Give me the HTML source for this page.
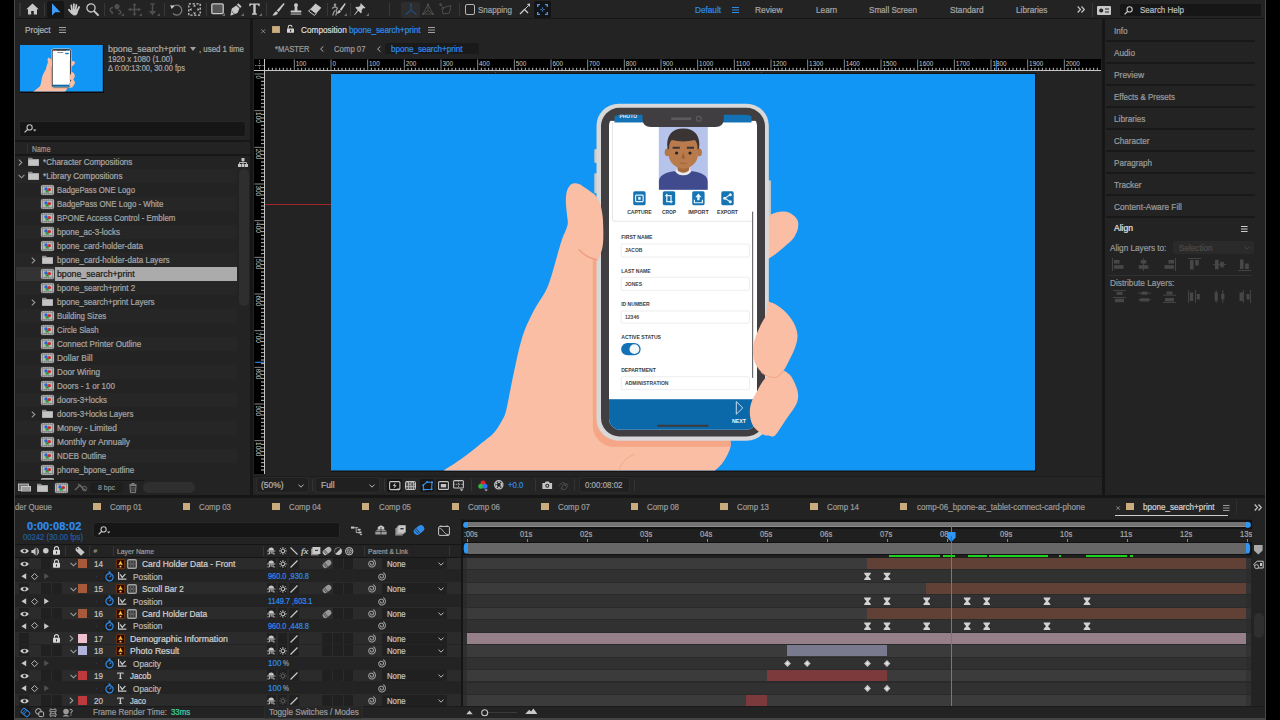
<!DOCTYPE html>
<html><head><meta charset="utf-8"><title>AE</title>
<style>
html,body{margin:0;padding:0;background:#000;width:1280px;height:720px;overflow:hidden}
body{position:relative;font-family:"Liberation Sans",sans-serif;}
.t{position:absolute;white-space:nowrap;font-family:"Liberation Sans",sans-serif;-webkit-text-stroke:0.22px;}
svg{overflow:visible}
</style></head><body>
<!-- art -->

<!-- frame -->
<div style="position:absolute;left:14px;top:0px;width:1252px;height:720px;background:#232323;"></div>
<div style="position:absolute;left:14px;top:0px;width:1.3px;height:720px;background:#4a4a4a;"></div>
<div style="position:absolute;left:1264.8px;top:0px;width:1.3px;height:720px;background:#4a4a4a;"></div>
<div style="position:absolute;left:15px;top:18px;width:1250px;height:1px;background:#161616;"></div>
<div style="position:absolute;left:250px;top:19px;width:3px;height:477px;background:#161616;"></div>
<div style="position:absolute;left:1102px;top:19px;width:3px;height:477px;background:#161616;"></div>
<div style="position:absolute;left:15px;top:495px;width:1250px;height:3px;background:#161616;"></div>
<div style="position:absolute;left:14px;top:718px;width:1252px;height:2px;background:#454545;"></div>
<!-- toolbar -->
<div style="position:absolute;left:19px;top:3px;width:2px;height:13px;background:#343434;"></div>
<svg style="position:absolute;left:26px;top:3px;" width="13" height="12" viewBox="0 0 13 12"><path d="M6.5 0.5L0.3 6.2H2V11.5H5.2V8H7.8V11.5H11V6.2H12.7Z" fill="#c8c8c8"/></svg>
<div style="position:absolute;left:44px;top:3px;width:1px;height:13px;background:#383838;"></div>
<div style="position:absolute;left:47px;top:1px;width:17px;height:17px;background:#161616;border-radius:2px;"></div>
<svg style="position:absolute;left:51px;top:3px;" width="10" height="13" viewBox="0 0 10 13"><path d="M1 0.3V12.6L4.2 9.2H9.5Z" fill="#3d9bf5"/></svg>
<svg style="position:absolute;left:68px;top:2.5px;" width="13" height="13" viewBox="0 0 13 13"><g stroke="#c8c8c8" stroke-linecap="round" fill="none"><path d="M3.9 7L3.3 2.4M5.8 6.6L5.9 1.2M7.6 6.8L8.4 2M9.2 8L11.1 4" stroke-width="1.75"/><path d="M3.9 10L1 6.8" stroke-width="1.9"/></g><path d="M3 6.6L9.8 6.4L10 8.6C9.8 10.6 8.8 12.6 6.6 12.6C4.6 12.6 3.6 11 3 9.6Z" fill="#c8c8c8"/></svg>
<svg style="position:absolute;left:86px;top:2.5px;" width="13" height="13" viewBox="0 0 13 13"><circle cx="5" cy="4.9" r="4.1" fill="none" stroke="#c8c8c8" stroke-width="1.3"/><path d="M8.1 8.1L12 12" stroke="#c8c8c8" stroke-width="1.9" stroke-linecap="round"/></svg>
<div style="position:absolute;left:104px;top:3px;width:1px;height:13px;background:#383838;"></div>
<svg style="position:absolute;left:109px;top:3px;" width="14" height="13" viewBox="0 0 14 13"><circle cx="8" cy="3.6" r="2.6" fill="#4f4f4f"/><path d="M4 4.5C0.5 5 0 8 3.5 9M9 7C12.5 7.5 13 10.5 9.5 11" fill="none" stroke="#4f4f4f" stroke-width="1.4"/><path d="M2 8L5 10.3L2.4 11.2Z" fill="#4f4f4f"/></svg>
<svg style="position:absolute;left:121px;top:13px;" width="3" height="3" viewBox="0 0 3 3"><path d="M3 0V3H0Z" fill="#4f4f4f"/></svg>
<svg style="position:absolute;left:128px;top:3px;" width="13" height="13" viewBox="0 0 13 13"><path d="M6.5 0L8.6 2.6H7.2V5.8H10.4V4.4L13 6.5L10.4 8.6V7.2H7.2V10.4H8.6L6.5 13L4.4 10.4H5.8V7.2H2.6V8.6L0 6.5L2.6 4.4V5.8H5.8V2.6H4.4Z" fill="#4f4f4f"/></svg>
<svg style="position:absolute;left:139px;top:13px;" width="3" height="3" viewBox="0 0 3 3"><path d="M3 0V3H0Z" fill="#4f4f4f"/></svg>
<svg style="position:absolute;left:148px;top:3px;" width="9" height="13" viewBox="0 0 9 13"><path d="M2.2 0.3H6.8V1.4H5.2V8H8.2L4.5 12.2L0.8 8H3.8V1.4H2.2Z" fill="#4f4f4f"/></svg>
<svg style="position:absolute;left:157px;top:13px;" width="3" height="3" viewBox="0 0 3 3"><path d="M3 0V3H0Z" fill="#4f4f4f"/></svg>
<div style="position:absolute;left:164px;top:3px;width:1px;height:13px;background:#383838;"></div>
<svg style="position:absolute;left:170px;top:3px;" width="13" height="13" viewBox="0 0 13 13"><path d="M2.2 5A5 5 0 1 1 3 10.4" fill="none" stroke="#c8c8c8" stroke-width="1.2" opacity="0.55"/><path d="M0.2 2.2L4.6 2.6L1.6 6Z" fill="#c8c8c8"/></svg>
<svg style="position:absolute;left:188px;top:3px;" width="13" height="13" viewBox="0 0 13 13"><rect x="0.8" y="0.8" width="11.4" height="11.4" fill="none" stroke="#c8c8c8" stroke-width="1.3" stroke-dasharray="2.2 1.6"/><path d="M6.5 1.5L8 3.5H5ZM6.5 11.5L8 9.5H5ZM1.5 6.5L3.5 5V8ZM11.5 6.5L9.5 5V8Z" fill="#c8c8c8"/></svg>
<div style="position:absolute;left:206px;top:3px;width:1px;height:13px;background:#383838;"></div>
<svg style="position:absolute;left:211px;top:3px;" width="13" height="11" viewBox="0 0 13 11"><rect x="0.8" y="0.8" width="11.4" height="9.8" rx="1" fill="#555" stroke="#c8c8c8" stroke-width="1.3"/></svg>
<svg style="position:absolute;left:222px;top:13px;" width="3" height="3" viewBox="0 0 3 3"><path d="M3 0V3H0Z" fill="#6e6e6e"/></svg>
<svg style="position:absolute;left:230px;top:3px;" width="12" height="13" viewBox="0 0 12 13"><path d="M8.3 0.3L11.6 3.4L10.2 4.9L6.9 1.8ZM6.3 2.5L9.5 5.6L7.5 10L1.2 12.4L0.6 11.8L3.4 8.6A1.3 1.3 0 1 0 4.4 9.5L1.9 12.2L0.4 12.6L1.8 5.4Z" fill="#c8c8c8"/></svg>
<svg style="position:absolute;left:241px;top:13px;" width="3" height="3" viewBox="0 0 3 3"><path d="M3 0V3H0Z" fill="#6e6e6e"/></svg>
<svg style="position:absolute;left:249px;top:3px;" width="11" height="12" viewBox="0 0 11 12"><path d="M0.3 0.4H10.7V3.3H9.6C9.5 2.3 9.2 1.8 8 1.8H6.7V9.6C6.7 10.5 7 10.7 8 10.8V11.7H3V10.8C4 10.7 4.3 10.5 4.3 9.6V1.8H3C1.8 1.8 1.5 2.3 1.4 3.3H0.3Z" fill="#c8c8c8"/></svg>
<svg style="position:absolute;left:259px;top:13px;" width="3" height="3" viewBox="0 0 3 3"><path d="M3 0V3H0Z" fill="#6e6e6e"/></svg>
<div style="position:absolute;left:266px;top:3px;width:1px;height:13px;background:#383838;"></div>
<svg style="position:absolute;left:272px;top:3px;" width="13" height="13" viewBox="0 0 13 13"><path d="M11.4 0.2C12.3 0 12.8 0.7 12.3 1.5L6.6 9L4.7 7.6Z" fill="#c8c8c8"/><path d="M4.1 8.2L6 9.7C5.6 11.6 3 12.9 0.3 12.2C1.8 11.6 1.8 9.2 4.1 8.2Z" fill="#c8c8c8"/></svg>
<svg style="position:absolute;left:290px;top:3px;" width="12" height="13" viewBox="0 0 12 13"><path d="M6 0.3A2 2 0 0 1 7.3 3.8L7.5 7.5H11.3V9.6H0.7V7.5H4.5L4.7 3.8A2 2 0 0 1 6 0.3Z" fill="#c8c8c8"/><rect x="0.7" y="10.3" width="10.6" height="1.6" fill="#8d8d8d"/></svg>
<svg style="position:absolute;left:308px;top:3px;" width="14" height="13" viewBox="0 0 14 13"><path d="M7.5 0.5L13.3 4.8L6.5 12.4L0.6 8.1Z" fill="#c8c8c8"/><path d="M2.5 6.2L8.2 10.4L6.5 12.4L0.6 8.1Z" fill="#232323" stroke="#c8c8c8" stroke-width="0.9"/></svg>
<div style="position:absolute;left:327px;top:3px;width:1px;height:13px;background:#383838;"></div>
<svg style="position:absolute;left:331px;top:3px;" width="15" height="13" viewBox="0 0 15 13"><circle cx="4" cy="1.8" r="1.3" fill="#9a9a9a"/><path d="M1 5.5L4 3.6L6.4 5.3L5 7.6L6 9.6L4.6 12.6M3.6 7.6L1.6 12.4" stroke="#9a9a9a" stroke-width="1.3" fill="none"/><path d="M13.6 0.3C14.5 0.2 14.8 0.9 14.4 1.5L10.3 7.7L8.7 6.5Z" fill="#c8c8c8"/><path d="M8.2 7L9.8 8.3C9.5 9.9 7.4 10.9 5.6 10.4C6.8 9.8 6.7 7.9 8.2 7Z" fill="#c8c8c8"/></svg>
<svg style="position:absolute;left:344px;top:13px;" width="3" height="3" viewBox="0 0 3 3"><path d="M3 0V3H0Z" fill="#6e6e6e"/></svg>
<div style="position:absolute;left:350px;top:3px;width:1px;height:13px;background:#383838;"></div>
<svg style="position:absolute;left:354px;top:3px;" width="12" height="13" viewBox="0 0 12 13"><path d="M6.8 0.3L11.5 4.8L10.3 5.5L9.3 5.1L7.6 7.2L7.8 9.4L6.8 10.2L4.4 7.8L0.6 12.2L0.2 11.8L3.6 7L1.4 4.8L2.2 3.8L4.4 4L6.6 2.3L6.2 1.2Z" fill="#c8c8c8"/></svg>
<svg style="position:absolute;left:366px;top:13px;" width="3" height="3" viewBox="0 0 3 3"><path d="M3 0V3H0Z" fill="#6e6e6e"/></svg>
<div style="position:absolute;left:389px;top:3px;width:1px;height:13px;background:#383838;"></div>
<div style="position:absolute;left:401px;top:2px;width:19px;height:16px;background:#2d2d2d;border-radius:2px;"></div>
<svg style="position:absolute;left:404px;top:3px;" width="14" height="13" viewBox="0 0 14 13"><path d="M7 1V7.2L1.5 11.5M7 7.2L12.5 11.5" fill="none" stroke="#224d7c" stroke-width="1.2"/><circle cx="7" cy="1.4" r="1" fill="#224d7c"/></svg>
<svg style="position:absolute;left:421px;top:3px;" width="14" height="13" viewBox="0 0 14 13"><path d="M7 1.5L2 11H12ZM7 1.5V7.5L2 11M7 7.5L12 11" fill="none" stroke="#4f4f4f" stroke-width="0.9"/><circle cx="7" cy="1.5" r="1.1" fill="#4f4f4f"/><circle cx="2" cy="11" r="1.1" fill="#4f4f4f"/><circle cx="12" cy="11" r="1.1" fill="#4f4f4f"/></svg>
<svg style="position:absolute;left:439px;top:3px;" width="14" height="13" viewBox="0 0 14 13"><path d="M3 5L12 2.5L10.5 10L4 11Z" fill="none" stroke="#4f4f4f" stroke-width="0.9"/><path d="M1 1L5 6" stroke="#4f4f4f" stroke-width="1"/><circle cx="1.5" cy="1.5" r="1.2" fill="#4f4f4f"/></svg>
<div style="position:absolute;left:459px;top:3px;width:1px;height:13px;background:#383838;"></div>
<div style="position:absolute;left:465px;top:4px;width:8px;height:9px;background:transparent;border:1.4px solid #b5b5b5;border-radius:2px;"></div>
<div class="t" style="left:478px;top:5.0px;font-size:8.6px;line-height:10.6px;color:#a2a2a2;transform:scaleX(0.9355);transform-origin:0 0;">Snapping</div>
<svg style="position:absolute;left:519px;top:3px;" width="12" height="13" viewBox="0 0 12 13"><path d="M1 11L5.5 6.5L9 10" fill="none" stroke="#c8c8c8" stroke-width="1.4"/><path d="M5.5 6.5L9.5 2.5" stroke="#c8c8c8" stroke-width="1"/><path d="M7.8 1L11 0.6L10.8 4Z" fill="#c8c8c8"/></svg>
<div style="position:absolute;left:534px;top:1px;width:17px;height:17px;background:#141414;border-radius:2px;"></div>
<svg style="position:absolute;left:537px;top:4px;" width="11" height="11" viewBox="0 0 11 11"><path d="M0.7 3V0.7H3M8 0.7H10.3V3M10.3 8V10.3H8M3 10.3H0.7V8" fill="none" stroke="#3d9bf5" stroke-width="1.3"/><path d="M3.5 5.5H7.5M5.5 3.5V7.5" stroke="#3d9bf5" stroke-width="1.1" stroke-dasharray="1.2 1.6"/></svg>
<div class="t" style="left:695px;top:5.0px;font-size:8.6px;line-height:10.6px;color:#2f8ceb;transform:scaleX(0.9542);transform-origin:0 0;">Default</div>
<svg style="position:absolute;left:732px;top:7px;" width="7" height="6" viewBox="0 0 7 6"><path d="M0 0.5H7M0 3H7M0 5.5H7" stroke="#2f8ceb" stroke-width="1"/></svg>
<div class="t" style="left:755px;top:5.0px;font-size:8.6px;line-height:10.6px;color:#a6a6a6;transform:scaleX(0.9752);transform-origin:0 0;">Review</div>
<div class="t" style="left:816px;top:5.0px;font-size:8.6px;line-height:10.6px;color:#a6a6a6;transform:scaleX(0.9547);transform-origin:0 0;">Learn</div>
<div class="t" style="left:869px;top:5.0px;font-size:8.6px;line-height:10.6px;color:#a6a6a6;transform:scaleX(0.9385);transform-origin:0 0;">Small Screen</div>
<div class="t" style="left:950px;top:5.0px;font-size:8.6px;line-height:10.6px;color:#a6a6a6;transform:scaleX(0.9597);transform-origin:0 0;">Standard</div>
<div class="t" style="left:1016px;top:5.0px;font-size:8.6px;line-height:10.6px;color:#a6a6a6;transform:scaleX(0.9551);transform-origin:0 0;">Libraries</div>
<svg style="position:absolute;left:1077px;top:6px;" width="8" height="7" viewBox="0 0 8 7"><path d="M0.7 0.5L3.5 3.5L0.7 6.5M4.5 0.5L7.3 3.5L4.5 6.5" fill="none" stroke="#c8c8c8" stroke-width="1.2"/></svg>
<div style="position:absolute;left:1092px;top:3px;width:1px;height:14px;background:#383838;"></div>
<svg style="position:absolute;left:1097px;top:6px;" width="14" height="9" viewBox="0 0 14 9"><rect x="0" y="0" width="14" height="9" rx="1" fill="#c8c8c8"/><circle cx="4.2" cy="4.5" r="2" fill="#232323"/><path d="M8 3H12M8 6H12" stroke="#232323" stroke-width="1.2"/></svg>
<div style="position:absolute;left:1120px;top:4px;width:141px;height:12px;background:#161616;border-radius:2px;"></div>
<svg style="position:absolute;left:1124px;top:6px;" width="9" height="9" viewBox="0 0 9 9"><circle cx="5.6" cy="3.4" r="2.6" fill="none" stroke="#c8c8c8" stroke-width="1.1"/><path d="M3.8 5.2L0.6 8.4" stroke="#c8c8c8" stroke-width="1.3"/></svg>
<div class="t" style="left:1140px;top:5.0px;font-size:8.6px;line-height:10.6px;color:#bdbdbd;transform:scaleX(0.9297);transform-origin:0 0;">Search Help</div>
<!-- project -->
<div class="t" style="left:25px;top:25.0px;font-size:8.6px;line-height:10.6px;color:#b4b4b4;transform:scaleX(0.9527);transform-origin:0 0;">Project</div>
<svg style="position:absolute;left:59px;top:27px;" width="7" height="6" viewBox="0 0 7 6"><path d="M0 0.5H7M0 3H7M0 5.5H7" stroke="#a0a0a0" stroke-width="1"/></svg>
<div style="position:absolute;left:19.6px;top:44.7px;width:84.2px;height:47.9px;background:#140909;"></div>
<svg style="position:absolute;left:20.3px;top:45.4px;overflow:hidden" width="82.8" height="46.5" viewBox="0 0 704 396" preserveAspectRatio="none"><rect width="704" height="396" fill="#1196f6"/><path d="M112.7 396C115.8 393.9 125.3 388.0 131.5 383.5C137.7 379.0 144.8 373.2 150.0 369.0C155.2 364.8 159.2 362.3 162.7 358.5C166.2 354.7 168.9 349.6 171.0 346.0C173.1 342.4 173.5 342.3 175.0 336.6C176.5 330.9 178.4 319.8 180.0 312.0C181.6 304.2 183.1 296.8 184.6 290.0C186.1 283.2 187.4 276.8 189.0 271.0C190.6 265.2 191.7 260.8 194.0 255.0C196.3 249.2 199.7 242.2 203.0 236.0C206.3 229.8 211.3 223.0 214.0 218.0C216.7 213.0 217.3 210.8 219.0 206.0C220.7 201.2 222.1 196.0 224.0 189.3C225.9 182.6 228.6 172.4 230.7 166.0C232.8 159.6 235.6 155.2 236.5 151.0C237.4 146.8 236.3 144.9 236.0 141.0C235.7 137.1 234.9 131.6 234.8 127.7C234.8 123.8 235.1 120.4 235.7 117.7C236.3 115.0 237.4 113.2 238.5 111.8C239.6 110.4 240.7 109.6 242.3 109.3C243.9 109.0 246.1 109.1 248.0 109.8C249.9 110.5 251.3 111.6 254.0 113.5C256.7 115.4 261.5 118.4 264.0 121.0C266.5 123.6 267.8 126.0 269.0 129.3C270.2 132.6 271.1 139.1 271.5 141.0L300 160L300 362L395 362L399.5 366C399.5 367.0 399.8 370.0 399.5 372.0C399.2 374.0 398.8 375.2 397.5 378.0C396.2 380.8 393.8 385.5 391.5 388.5C389.2 391.5 385.2 394.8 384.0 396.0Z" fill="#f9bea3"/><path d="M436 141.5C436.6 141.3 438.1 140.8 439.8 140.2C441.5 139.6 443.9 138.5 446.0 138.0C448.1 137.5 450.3 137.2 452.3 137.3C454.3 137.4 456.3 137.7 458.0 138.3C459.7 138.9 461.0 139.9 462.3 141.0C463.6 142.1 465.0 143.4 465.8 144.8C466.6 146.2 467.2 147.4 467.3 149.3C467.4 151.2 467.1 154.0 466.5 156.0C465.9 158.0 465.0 159.8 464.0 161.5C463.0 163.2 462.6 164.0 460.7 166.0C458.8 168.0 455.1 171.1 452.3 173.5C449.5 175.9 446.7 178.2 444.0 180.2C441.3 182.2 437.3 184.6 436.0 185.5Z" fill="#f9bea3"/><clipPath id="bhc"><path d="M112.7 396C115.8 393.9 125.3 388.0 131.5 383.5C137.7 379.0 144.8 373.2 150.0 369.0C155.2 364.8 159.2 362.3 162.7 358.5C166.2 354.7 168.9 349.6 171.0 346.0C173.1 342.4 173.5 342.3 175.0 336.6C176.5 330.9 178.4 319.8 180.0 312.0C181.6 304.2 183.1 296.8 184.6 290.0C186.1 283.2 187.4 276.8 189.0 271.0C190.6 265.2 191.7 260.8 194.0 255.0C196.3 249.2 199.7 242.2 203.0 236.0C206.3 229.8 211.3 223.0 214.0 218.0C216.7 213.0 217.3 210.8 219.0 206.0C220.7 201.2 222.1 196.0 224.0 189.3C225.9 182.6 228.6 172.4 230.7 166.0C232.8 159.6 235.6 155.2 236.5 151.0C237.4 146.8 236.3 144.9 236.0 141.0C235.7 137.1 234.9 131.6 234.8 127.7C234.8 123.8 235.1 120.4 235.7 117.7C236.3 115.0 237.4 113.2 238.5 111.8C239.6 110.4 240.7 109.6 242.3 109.3C243.9 109.0 246.1 109.1 248.0 109.8C249.9 110.5 251.3 111.6 254.0 113.5C256.7 115.4 261.5 118.4 264.0 121.0C266.5 123.6 267.8 126.0 269.0 129.3C270.2 132.6 271.1 139.1 271.5 141.0L300 160L300 362L395 362L399.5 366C399.5 367.0 399.8 370.0 399.5 372.0C399.2 374.0 398.8 375.2 397.5 378.0C396.2 380.8 393.8 385.5 391.5 388.5C389.2 391.5 385.2 394.8 384.0 396.0Z"/></clipPath><rect x="261.8" y="36" width="172" height="336.3" rx="21" fill="#f4a687" clip-path="url(#bhc)"/><path d="M287.7 396C290 388 296 382.5 304 379.7" fill="none" stroke="#f4a687" stroke-width="0.9"/><rect x="263.3" y="75" width="3" height="14" rx="1" fill="#c9c9c9"/><rect x="263.3" y="99" width="3" height="20" rx="1" fill="#c9c9c9"/><rect x="436.5" y="106" width="3.4" height="36" rx="1" fill="#c9c9c9"/><rect x="265.5" y="29.7" width="172.3" height="336.6" rx="22" fill="#d8d8d8"/><rect x="270" y="33.8" width="164" height="328.2" rx="18.5" fill="#403e40"/><clipPath id="bsc"><rect x="278" y="40.6" width="148" height="314.8" rx="11.5"/></clipPath><g clip-path="url(#bsc)"><rect x="278" y="46.8" width="148" height="310" fill="#fff"/><rect x="283.5" y="40" width="137" height="8.4" fill="#1372b5"/><text x="288.5" y="43.8" font-family="Liberation Sans,sans-serif" font-weight="bold" font-size="5.4" fill="#e6f0f8" text-anchor="start" textLength="17.5" lengthAdjust="spacingAndGlyphs">PHOTO</text><path d="M281.5 48.4V145.5Q281.5 147 283 147H420.5" fill="none" stroke="#e6e6e6" stroke-width="1"/><rect x="327.8" y="52" width="49" height="63.6" fill="#b6c3ea"/><clipPath id="bpc"><rect x="327.8" y="52" width="49" height="63.6"/></clipPath><g clip-path="url(#bpc)"><path d="M327.8 116V108C327.8 101.5 334 98.5 343 97.2H361.5C370.5 98.5 376.8 101.5 376.8 108V116Z" fill="#3f4b8c"/><path d="M344.2 96.8C346 102.5 358.5 102.5 360.3 96.8L357.6 93.5H347Z" fill="#e9e9ee"/><path d="M346.6 88H358V96.2C355.5 99.4 349 99.4 346.6 96.2Z" fill="#a66a3f"/><g transform="translate(0 94) scale(1 0.95) translate(0 -94)"><ellipse cx="336.3" cy="77.5" rx="2.6" ry="4" fill="#b27647"/><ellipse cx="368.3" cy="77.5" rx="2.6" ry="4" fill="#b27647"/><path d="M337.6 66C337.6 58 344 55.6 352.3 55.6S367 58 367 66V79.5C367 88.5 359.5 94.5 352.3 94.5S337.6 88.5 337.6 79.5Z" fill="#b97b4b"/><path d="M336.6 74C334.6 60 341 52.4 352.3 52.4S370 60 368 74L366.6 74.3C366.6 68.5 365.5 66 363.5 64.4C357 66.4 347.5 66.4 341 64.4C339 66 338 68.5 338 74.3Z" fill="#3b3435"/><path d="M341.6 72.6H348.8M355.8 72.6H363" stroke="#3b3435" stroke-width="2.2"/><circle cx="345.6" cy="78.2" r="1.6" fill="#2c2424"/><circle cx="359" cy="78.2" r="1.6" fill="#2c2424"/><path d="M352.3 77.5L354.3 84H350.3Z" fill="#9b6038"/><path d="M349 88.6Q352.3 90 355.6 88.6" fill="none" stroke="#9b6038" stroke-width="0.9"/></g></g><rect x="302.2" y="117.2" width="12.4" height="13.8" rx="1.6" fill="#1674b3"/><rect x="304.59999999999997" y="121" width="7.6" height="6.4" rx="0.8" fill="none" stroke="#e8f2fa" stroke-width="1.2"/><rect x="307.2" y="122.8" width="2.4" height="2.8" fill="#e8f2fa"/><rect x="331.8" y="117.2" width="12.4" height="13.8" rx="1.6" fill="#1674b3"/><path d="M335.8 119.6V127.4H341.6M334.2 121.4H340V129" fill="none" stroke="#e8f2fa" stroke-width="1.3"/><rect x="361.2" y="117.2" width="12.4" height="13.8" rx="1.6" fill="#1674b3"/><path d="M367.4 119.4L370.59999999999997 123H368.59999999999997V126H366.2V123H364.2Z" fill="#e8f2fa"/><path d="M363.4 125.6V128.6H371.4V125.6" fill="none" stroke="#e8f2fa" stroke-width="1.2"/><rect x="390.3" y="117.2" width="12.4" height="13.8" rx="1.6" fill="#1674b3"/><path d="M399.1 120.6L393.9 124.1L399.1 127.6" fill="none" stroke="#e8f2fa" stroke-width="1"/><circle cx="399.3" cy="120.6" r="1.5" fill="#e8f2fa"/><circle cx="393.7" cy="124.1" r="1.5" fill="#e8f2fa"/><circle cx="399.3" cy="127.6" r="1.5" fill="#e8f2fa"/><text x="308.4" y="140.2" font-family="Liberation Sans,sans-serif" font-weight="bold" font-size="5.2" fill="#3c3c3c" text-anchor="middle" textLength="24.5" lengthAdjust="spacingAndGlyphs">CAPTURE</text><text x="338" y="140.2" font-family="Liberation Sans,sans-serif" font-weight="bold" font-size="5.2" fill="#3c3c3c" text-anchor="middle" textLength="14.2" lengthAdjust="spacingAndGlyphs">CROP</text><text x="367.4" y="140.2" font-family="Liberation Sans,sans-serif" font-weight="bold" font-size="5.2" fill="#3c3c3c" text-anchor="middle" textLength="20.5" lengthAdjust="spacingAndGlyphs">IMPORT</text><text x="396.5" y="140.2" font-family="Liberation Sans,sans-serif" font-weight="bold" font-size="5.2" fill="#3c3c3c" text-anchor="middle" textLength="21" lengthAdjust="spacingAndGlyphs">EXPORT</text><text x="290.2" y="164.6" font-family="Liberation Sans,sans-serif" font-weight="bold" font-size="5.2" fill="#3c3c3c" text-anchor="start" textLength="31.2" lengthAdjust="spacingAndGlyphs">FIRST NAME</text><rect x="290.2" y="169.7" width="128.2" height="13.1" rx="1.5" fill="#fff" stroke="#ededed" stroke-width="1"/><text x="294" y="178.05" font-family="Liberation Sans,sans-serif" font-weight="bold" font-size="4.8" fill="#444" text-anchor="start" textLength="17.5" lengthAdjust="spacingAndGlyphs">JACOB</text><text x="290.2" y="198.7" font-family="Liberation Sans,sans-serif" font-weight="bold" font-size="5.2" fill="#3c3c3c" text-anchor="start" textLength="29.5" lengthAdjust="spacingAndGlyphs">LAST NAME</text><rect x="290.2" y="203" width="128.2" height="13.0" rx="1.5" fill="#fff" stroke="#ededed" stroke-width="1"/><text x="294" y="211.3" font-family="Liberation Sans,sans-serif" font-weight="bold" font-size="4.8" fill="#444" text-anchor="start" textLength="17" lengthAdjust="spacingAndGlyphs">JONES</text><text x="290.2" y="231.5" font-family="Liberation Sans,sans-serif" font-weight="bold" font-size="5.2" fill="#3c3c3c" text-anchor="start" textLength="28.5" lengthAdjust="spacingAndGlyphs">ID NUMBER</text><rect x="290.2" y="236.6" width="128.2" height="12.4" rx="1.5" fill="#fff" stroke="#ededed" stroke-width="1"/><text x="294" y="244.60000000000002" font-family="Liberation Sans,sans-serif" font-weight="bold" font-size="4.8" fill="#444" text-anchor="start" textLength="14" lengthAdjust="spacingAndGlyphs">12346</text><text x="290.2" y="264.7" font-family="Liberation Sans,sans-serif" font-weight="bold" font-size="5.2" fill="#3c3c3c" text-anchor="start" textLength="39.8" lengthAdjust="spacingAndGlyphs">ACTIVE STATUS</text><rect x="290.2" y="268.6" width="19.4" height="12.4" rx="6.2" fill="#1372b5"/><circle cx="303.4" cy="274.8" r="4.9" fill="#f4f8fb"/><text x="290.2" y="297.8" font-family="Liberation Sans,sans-serif" font-weight="bold" font-size="5.2" fill="#3c3c3c" text-anchor="start" textLength="34.6" lengthAdjust="spacingAndGlyphs">DEPARTMENT</text><rect x="290.2" y="302.3" width="128.2" height="13.1" rx="1.5" fill="#fff" stroke="#ededed" stroke-width="1"/><text x="294" y="310.65000000000003" font-family="Liberation Sans,sans-serif" font-weight="bold" font-size="4.8" fill="#444" text-anchor="start" textLength="43.5" lengthAdjust="spacingAndGlyphs">ADMINISTRATION</text><rect x="421" y="137.5" width="1.2" height="166" fill="#6f6f6f"/><rect x="278" y="324.8" width="148" height="32" fill="#0c69a9"/><path d="M405.3 327.2V339.8L411.8 333.5Z" fill="none" stroke="#dbe9f4" stroke-width="0.9" stroke-linejoin="round"/><text x="400.9" y="348.3" font-family="Liberation Sans,sans-serif" font-weight="bold" font-size="4.6" fill="#eef5fa" text-anchor="start" textLength="14.2" lengthAdjust="spacingAndGlyphs">NEXT</text><rect x="326" y="350.4" width="51.7" height="1.9" rx="0.9" fill="#3a3a3c"/></g><path d="M311.5 36H392.8V40.6H392.8V45C392.8 50 389.5 53 384.5 53H319.8C314.8 53 311.5 50 311.5 45Z" fill="#403e40"/><rect x="340" y="43.5" width="20.5" height="2.5" rx="1.2" fill="#5d5b5d"/><circle cx="367.8" cy="44.7" r="2.4" fill="none" stroke="#5d5b5d" stroke-width="1.1"/><path d="M262 119C262.3 119.3 262.8 119.3 264.0 121.0C265.2 122.7 267.8 126.0 269.0 129.3C270.2 132.6 270.9 136.6 271.5 141.0C272.1 145.4 272.2 151.3 272.3 156.0C272.4 160.7 272.4 165.4 272.0 169.3C271.6 173.2 270.7 176.5 269.8 179.3C268.9 182.1 267.1 184.9 266.5 186.0L255 186L250 130Z" fill="#f9bea3"/><path d="M247.7 175.2C253 181 259 184.5 266.5 185.8" fill="none" stroke="#f0997a" stroke-width="1.2"/><path d="M452.7 296C453.9 297.0 458.0 299.1 460.2 302.2C462.4 305.3 464.9 311.1 466.0 314.7C467.1 318.2 467.3 320.6 467.0 323.5C466.7 326.4 466.2 328.3 464.0 332.2C461.8 336.1 457.3 341.8 454.0 346.6C450.7 351.4 446.8 358.6 444.0 361.0C441.2 363.4 439.6 361.2 437.5 361.0C435.4 360.8 434.0 361.2 431.5 359.7C429.0 358.2 424.8 355.3 422.7 352.2C420.6 349.1 419.4 344.9 419.0 341.0C418.6 337.1 418.9 332.7 420.2 328.5C421.4 324.3 424.1 320.2 426.5 316.0C428.9 311.8 431.6 306.3 434.5 303.5C437.4 300.7 442.4 299.8 444.0 299.0Z" fill="#f9bea3"/><path d="M436.5 227.2C437.8 227.6 441.1 228.0 444.0 229.7C446.9 231.4 450.9 234.1 454.0 237.2C457.1 240.3 460.6 244.5 462.7 248.5C464.8 252.5 466.3 256.8 466.5 261.0C466.7 265.2 465.5 269.1 464.0 273.5C462.5 277.9 459.6 283.4 457.7 287.2C455.8 290.9 454.6 293.5 452.7 296.0C450.8 298.5 448.4 301.1 446.5 302.2C444.6 303.3 443.8 303.1 441.5 302.7C439.2 302.3 435.4 301.6 432.7 299.7C430.0 297.8 427.0 294.5 425.2 291.0C423.4 287.5 422.3 282.7 422.0 278.5C421.7 274.3 422.3 270.4 423.5 266.0C424.7 261.6 427.1 256.4 429.0 252.2C430.9 248.0 434.2 242.9 435.2 241.0Z" fill="#f9bea3"/><path d="M430 297.5C431.0 298.2 434.1 300.6 436.0 301.5C437.9 302.4 439.8 302.9 441.5 303.0C443.2 303.1 444.6 303.5 446.5 302.4C448.4 301.3 451.7 297.5 452.7 296.5" fill="none" stroke="#f4a687" stroke-width="1"/><rect x="279" y="57" width="139" height="281" fill="#fff"/><rect x="279" y="50" width="146" height="12" fill="#fff"/><rect x="385" y="66" width="30" height="12" rx="3" fill="#1b7fc4"/><rect x="318" y="60" width="50" height="7" fill="#777"/><rect x="284" y="44" width="16" height="8" fill="#e44"/></svg>
<div class="t" style="left:107.7px;top:43.7px;font-size:8.6px;line-height:10.6px;color:#a9a9a9;transform:scaleX(1.0201);transform-origin:0 0;">bpone_search+print</div>
<svg style="position:absolute;left:189.5px;top:47px;" width="6" height="4" viewBox="0 0 6 4"><path d="M0 0H6L3 4Z" fill="#a0a0a0"/></svg>
<div class="t" style="left:198.7px;top:43.7px;font-size:8.6px;line-height:10.6px;color:#a9a9a9;transform:scaleX(0.9140);transform-origin:0 0;">, used 1 time</div>
<div class="t" style="left:107.7px;top:53.5px;font-size:8.6px;line-height:10.6px;color:#a9a9a9;transform:scaleX(0.8961);transform-origin:0 0;">1920 x 1080 (1.00)</div>
<div class="t" style="left:107.7px;top:63.2px;font-size:8.6px;line-height:10.6px;color:#a9a9a9;transform:scaleX(0.8704);transform-origin:0 0;">&#916; 0:00:13:00, 30.00 fps</div>
<div style="position:absolute;left:20px;top:122px;width:225px;height:13.5px;background:#161616;border-radius:2px;box-shadow:0 0 0 0.5px #2c2c2c;"></div>
<svg style="position:absolute;left:24px;top:124px;" width="13" height="9" viewBox="0 0 13 9"><circle cx="5.6" cy="3.4" r="2.6" fill="none" stroke="#c0c0c0" stroke-width="1.1"/><path d="M3.8 5.2L0.6 8.4" stroke="#c0c0c0" stroke-width="1.3"/><path d="M9 5.5H12.4L10.7 7.4Z" fill="#c0c0c0"/></svg>
<div style="position:absolute;left:15px;top:140px;width:235px;height:1.5px;background:#171717;"></div>
<div style="position:absolute;left:15px;top:154px;width:235px;height:1.5px;background:#171717;"></div>
<div style="position:absolute;left:27px;top:144px;width:1px;height:9px;background:#343434;"></div>
<div class="t" style="left:31.5px;top:143.6px;font-size:8.6px;line-height:10.6px;color:#9c9c9c;transform:scaleX(0.8064);transform-origin:0 0;">Name</div>
<svg style="position:absolute;left:18.2px;top:158.8px;" width="5" height="7" viewBox="0 0 5 7"><path d="M0.8 0.6L3.8 3.5L0.8 6.4" fill="none" stroke="#9a9a9a" stroke-width="1.1"/></svg>
<svg style="position:absolute;left:28.0px;top:157.4px;" width="10.8" height="8.6" viewBox="0 0 10.8 8.6"><path d="M0 0.8H4L5 2H11V9H0Z" fill="#8c8c8c"/><rect x="0.3" y="2.6" width="10.4" height="6" fill="#c4c4c4"/></svg>
<div class="t" style="left:42.7px;top:157.0px;font-size:8.6px;line-height:10.6px;color:#a6a6a6;transform:scaleX(0.9352);transform-origin:0 0;">*Character Compositions</div>
<div style="position:absolute;left:16px;top:169.0px;width:221px;height:14px;background:#262626;"></div>
<svg style="position:absolute;left:17.6px;top:173.8px;" width="7" height="5" viewBox="0 0 7 5"><path d="M0.6 0.8L3.5 3.8L6.4 0.8" fill="none" stroke="#9a9a9a" stroke-width="1.1"/></svg>
<svg style="position:absolute;left:28.0px;top:171.4px;" width="10.8" height="8.6" viewBox="0 0 10.8 8.6"><path d="M0 0.8H4L5 2H11V9H0Z" fill="#8c8c8c"/><rect x="0.3" y="2.6" width="10.4" height="6" fill="#c4c4c4"/></svg>
<div class="t" style="left:42.7px;top:171.0px;font-size:8.6px;line-height:10.6px;color:#a6a6a6;transform:scaleX(0.9450);transform-origin:0 0;">*Library Compositions</div>
<svg style="position:absolute;left:41.3px;top:185.0px;" width="13" height="10" viewBox="0 0 13 10"><rect x="0.4" y="0.4" width="12.2" height="9.2" rx="1" fill="#8e8e8e" stroke="#c9c9c9" stroke-width="0.9"/><rect x="2" y="1.6" width="9" height="6.6" fill="#b9b9b9"/><circle cx="5" cy="4" r="1.7" fill="#2a62d8"/><circle cx="8.3" cy="4.6" r="1.7" fill="#d32626"/><path d="M6.2 4.2L8.3 7.6H4.1Z" fill="#1f9a2f"/><path d="M1.2 0.9H11.8M1.2 9.1H11.8" stroke="#555" stroke-width="0.7" stroke-dasharray="1 1"/></svg>
<div class="t" style="left:56.7px;top:185.0px;font-size:8.6px;line-height:10.6px;color:#a6a6a6;transform:scaleX(0.9014);transform-origin:0 0;">BadgePass ONE Logo</div>
<div style="position:absolute;left:16px;top:197.0px;width:221px;height:14px;background:#262626;"></div>
<svg style="position:absolute;left:41.3px;top:199.0px;" width="13" height="10" viewBox="0 0 13 10"><rect x="0.4" y="0.4" width="12.2" height="9.2" rx="1" fill="#8e8e8e" stroke="#c9c9c9" stroke-width="0.9"/><rect x="2" y="1.6" width="9" height="6.6" fill="#b9b9b9"/><circle cx="5" cy="4" r="1.7" fill="#2a62d8"/><circle cx="8.3" cy="4.6" r="1.7" fill="#d32626"/><path d="M6.2 4.2L8.3 7.6H4.1Z" fill="#1f9a2f"/><path d="M1.2 0.9H11.8M1.2 9.1H11.8" stroke="#555" stroke-width="0.7" stroke-dasharray="1 1"/></svg>
<div class="t" style="left:56.7px;top:199.0px;font-size:8.6px;line-height:10.6px;color:#a6a6a6;transform:scaleX(0.9168);transform-origin:0 0;">BadgePass ONE Logo - White</div>
<svg style="position:absolute;left:41.3px;top:213.0px;" width="13" height="10" viewBox="0 0 13 10"><rect x="0.4" y="0.4" width="12.2" height="9.2" rx="1" fill="#8e8e8e" stroke="#c9c9c9" stroke-width="0.9"/><rect x="2" y="1.6" width="9" height="6.6" fill="#b9b9b9"/><circle cx="5" cy="4" r="1.7" fill="#2a62d8"/><circle cx="8.3" cy="4.6" r="1.7" fill="#d32626"/><path d="M6.2 4.2L8.3 7.6H4.1Z" fill="#1f9a2f"/><path d="M1.2 0.9H11.8M1.2 9.1H11.8" stroke="#555" stroke-width="0.7" stroke-dasharray="1 1"/></svg>
<div class="t" style="left:56.7px;top:213.0px;font-size:8.6px;line-height:10.6px;color:#a6a6a6;transform:scaleX(0.9183);transform-origin:0 0;">BPONE Access Control - Emblem</div>
<div style="position:absolute;left:16px;top:225.0px;width:221px;height:14px;background:#262626;"></div>
<svg style="position:absolute;left:41.3px;top:227.0px;" width="13" height="10" viewBox="0 0 13 10"><rect x="0.4" y="0.4" width="12.2" height="9.2" rx="1" fill="#8e8e8e" stroke="#c9c9c9" stroke-width="0.9"/><rect x="2" y="1.6" width="9" height="6.6" fill="#b9b9b9"/><circle cx="5" cy="4" r="1.7" fill="#2a62d8"/><circle cx="8.3" cy="4.6" r="1.7" fill="#d32626"/><path d="M6.2 4.2L8.3 7.6H4.1Z" fill="#1f9a2f"/><path d="M1.2 0.9H11.8M1.2 9.1H11.8" stroke="#555" stroke-width="0.7" stroke-dasharray="1 1"/></svg>
<div class="t" style="left:56.7px;top:227.0px;font-size:8.6px;line-height:10.6px;color:#a6a6a6;transform:scaleX(0.9280);transform-origin:0 0;">bpone_ac-3-locks</div>
<svg style="position:absolute;left:41.3px;top:241.0px;" width="13" height="10" viewBox="0 0 13 10"><rect x="0.4" y="0.4" width="12.2" height="9.2" rx="1" fill="#8e8e8e" stroke="#c9c9c9" stroke-width="0.9"/><rect x="2" y="1.6" width="9" height="6.6" fill="#b9b9b9"/><circle cx="5" cy="4" r="1.7" fill="#2a62d8"/><circle cx="8.3" cy="4.6" r="1.7" fill="#d32626"/><path d="M6.2 4.2L8.3 7.6H4.1Z" fill="#1f9a2f"/><path d="M1.2 0.9H11.8M1.2 9.1H11.8" stroke="#555" stroke-width="0.7" stroke-dasharray="1 1"/></svg>
<div class="t" style="left:56.7px;top:241.0px;font-size:8.6px;line-height:10.6px;color:#a6a6a6;transform:scaleX(0.9368);transform-origin:0 0;">bpone_card-holder-data</div>
<div style="position:absolute;left:16px;top:253.0px;width:221px;height:14px;background:#262626;"></div>
<svg style="position:absolute;left:31.4px;top:256.8px;" width="5" height="7" viewBox="0 0 5 7"><path d="M0.8 0.6L3.8 3.5L0.8 6.4" fill="none" stroke="#9a9a9a" stroke-width="1.1"/></svg>
<svg style="position:absolute;left:41.5px;top:255.4px;" width="10.8" height="8.6" viewBox="0 0 10.8 8.6"><path d="M0 0.8H4L5 2H11V9H0Z" fill="#8c8c8c"/><rect x="0.3" y="2.6" width="10.4" height="6" fill="#c4c4c4"/></svg>
<div class="t" style="left:56.7px;top:255.0px;font-size:8.6px;line-height:10.6px;color:#a6a6a6;transform:scaleX(0.9391);transform-origin:0 0;">bpone_card-holder-data Layers</div>
<div style="position:absolute;left:16px;top:267.0px;width:39px;height:13.6px;background:#333333;"></div>
<div style="position:absolute;left:54.5px;top:267.0px;width:182.5px;height:13.6px;background:#ababab;"></div>
<svg style="position:absolute;left:41.3px;top:269.0px;" width="13" height="10" viewBox="0 0 13 10"><rect x="0.4" y="0.4" width="12.2" height="9.2" rx="1" fill="#8e8e8e" stroke="#c9c9c9" stroke-width="0.9"/><rect x="2" y="1.6" width="9" height="6.6" fill="#b9b9b9"/><circle cx="5" cy="4" r="1.7" fill="#2a62d8"/><circle cx="8.3" cy="4.6" r="1.7" fill="#d32626"/><path d="M6.2 4.2L8.3 7.6H4.1Z" fill="#1f9a2f"/><path d="M1.2 0.9H11.8M1.2 9.1H11.8" stroke="#555" stroke-width="0.7" stroke-dasharray="1 1"/></svg>
<div class="t" style="left:56.7px;top:269.0px;font-size:8.6px;line-height:10.6px;color:#1a1a1a;transform:scaleX(1.0188);transform-origin:0 0;">bpone_search+print</div>
<div style="position:absolute;left:16px;top:281.0px;width:221px;height:14px;background:#262626;"></div>
<svg style="position:absolute;left:41.3px;top:283.0px;" width="13" height="10" viewBox="0 0 13 10"><rect x="0.4" y="0.4" width="12.2" height="9.2" rx="1" fill="#8e8e8e" stroke="#c9c9c9" stroke-width="0.9"/><rect x="2" y="1.6" width="9" height="6.6" fill="#b9b9b9"/><circle cx="5" cy="4" r="1.7" fill="#2a62d8"/><circle cx="8.3" cy="4.6" r="1.7" fill="#d32626"/><path d="M6.2 4.2L8.3 7.6H4.1Z" fill="#1f9a2f"/><path d="M1.2 0.9H11.8M1.2 9.1H11.8" stroke="#555" stroke-width="0.7" stroke-dasharray="1 1"/></svg>
<div class="t" style="left:56.7px;top:283.0px;font-size:8.6px;line-height:10.6px;color:#a6a6a6;transform:scaleX(0.9372);transform-origin:0 0;">bpone_search+print 2</div>
<svg style="position:absolute;left:31.4px;top:298.8px;" width="5" height="7" viewBox="0 0 5 7"><path d="M0.8 0.6L3.8 3.5L0.8 6.4" fill="none" stroke="#9a9a9a" stroke-width="1.1"/></svg>
<svg style="position:absolute;left:41.5px;top:297.4px;" width="10.8" height="8.6" viewBox="0 0 10.8 8.6"><path d="M0 0.8H4L5 2H11V9H0Z" fill="#8c8c8c"/><rect x="0.3" y="2.6" width="10.4" height="6" fill="#c4c4c4"/></svg>
<div class="t" style="left:56.7px;top:297.0px;font-size:8.6px;line-height:10.6px;color:#a6a6a6;transform:scaleX(0.9352);transform-origin:0 0;">bpone_search+print Layers</div>
<div style="position:absolute;left:16px;top:309.0px;width:221px;height:14px;background:#262626;"></div>
<svg style="position:absolute;left:41.3px;top:311.0px;" width="13" height="10" viewBox="0 0 13 10"><rect x="0.4" y="0.4" width="12.2" height="9.2" rx="1" fill="#8e8e8e" stroke="#c9c9c9" stroke-width="0.9"/><rect x="2" y="1.6" width="9" height="6.6" fill="#b9b9b9"/><circle cx="5" cy="4" r="1.7" fill="#2a62d8"/><circle cx="8.3" cy="4.6" r="1.7" fill="#d32626"/><path d="M6.2 4.2L8.3 7.6H4.1Z" fill="#1f9a2f"/><path d="M1.2 0.9H11.8M1.2 9.1H11.8" stroke="#555" stroke-width="0.7" stroke-dasharray="1 1"/></svg>
<div class="t" style="left:56.7px;top:311.0px;font-size:8.6px;line-height:10.6px;color:#a6a6a6;transform:scaleX(0.9126);transform-origin:0 0;">Building Sizes</div>
<svg style="position:absolute;left:41.3px;top:325.0px;" width="13" height="10" viewBox="0 0 13 10"><rect x="0.4" y="0.4" width="12.2" height="9.2" rx="1" fill="#8e8e8e" stroke="#c9c9c9" stroke-width="0.9"/><rect x="2" y="1.6" width="9" height="6.6" fill="#b9b9b9"/><circle cx="5" cy="4" r="1.7" fill="#2a62d8"/><circle cx="8.3" cy="4.6" r="1.7" fill="#d32626"/><path d="M6.2 4.2L8.3 7.6H4.1Z" fill="#1f9a2f"/><path d="M1.2 0.9H11.8M1.2 9.1H11.8" stroke="#555" stroke-width="0.7" stroke-dasharray="1 1"/></svg>
<div class="t" style="left:56.7px;top:325.0px;font-size:8.6px;line-height:10.6px;color:#a6a6a6;transform:scaleX(0.9088);transform-origin:0 0;">Circle Slash</div>
<div style="position:absolute;left:16px;top:337.0px;width:221px;height:14px;background:#262626;"></div>
<svg style="position:absolute;left:41.3px;top:339.0px;" width="13" height="10" viewBox="0 0 13 10"><rect x="0.4" y="0.4" width="12.2" height="9.2" rx="1" fill="#8e8e8e" stroke="#c9c9c9" stroke-width="0.9"/><rect x="2" y="1.6" width="9" height="6.6" fill="#b9b9b9"/><circle cx="5" cy="4" r="1.7" fill="#2a62d8"/><circle cx="8.3" cy="4.6" r="1.7" fill="#d32626"/><path d="M6.2 4.2L8.3 7.6H4.1Z" fill="#1f9a2f"/><path d="M1.2 0.9H11.8M1.2 9.1H11.8" stroke="#555" stroke-width="0.7" stroke-dasharray="1 1"/></svg>
<div class="t" style="left:56.7px;top:339.0px;font-size:8.6px;line-height:10.6px;color:#a6a6a6;transform:scaleX(0.9442);transform-origin:0 0;">Connect Printer Outline</div>
<svg style="position:absolute;left:41.3px;top:353.0px;" width="13" height="10" viewBox="0 0 13 10"><rect x="0.4" y="0.4" width="12.2" height="9.2" rx="1" fill="#8e8e8e" stroke="#c9c9c9" stroke-width="0.9"/><rect x="2" y="1.6" width="9" height="6.6" fill="#b9b9b9"/><circle cx="5" cy="4" r="1.7" fill="#2a62d8"/><circle cx="8.3" cy="4.6" r="1.7" fill="#d32626"/><path d="M6.2 4.2L8.3 7.6H4.1Z" fill="#1f9a2f"/><path d="M1.2 0.9H11.8M1.2 9.1H11.8" stroke="#555" stroke-width="0.7" stroke-dasharray="1 1"/></svg>
<div class="t" style="left:56.7px;top:353.0px;font-size:8.6px;line-height:10.6px;color:#a6a6a6;transform:scaleX(0.9802);transform-origin:0 0;">Dollar Bill</div>
<div style="position:absolute;left:16px;top:365.0px;width:221px;height:14px;background:#262626;"></div>
<svg style="position:absolute;left:41.3px;top:367.0px;" width="13" height="10" viewBox="0 0 13 10"><rect x="0.4" y="0.4" width="12.2" height="9.2" rx="1" fill="#8e8e8e" stroke="#c9c9c9" stroke-width="0.9"/><rect x="2" y="1.6" width="9" height="6.6" fill="#b9b9b9"/><circle cx="5" cy="4" r="1.7" fill="#2a62d8"/><circle cx="8.3" cy="4.6" r="1.7" fill="#d32626"/><path d="M6.2 4.2L8.3 7.6H4.1Z" fill="#1f9a2f"/><path d="M1.2 0.9H11.8M1.2 9.1H11.8" stroke="#555" stroke-width="0.7" stroke-dasharray="1 1"/></svg>
<div class="t" style="left:56.7px;top:367.0px;font-size:8.6px;line-height:10.6px;color:#a6a6a6;transform:scaleX(0.9472);transform-origin:0 0;">Door Wiring</div>
<svg style="position:absolute;left:41.3px;top:381.0px;" width="13" height="10" viewBox="0 0 13 10"><rect x="0.4" y="0.4" width="12.2" height="9.2" rx="1" fill="#8e8e8e" stroke="#c9c9c9" stroke-width="0.9"/><rect x="2" y="1.6" width="9" height="6.6" fill="#b9b9b9"/><circle cx="5" cy="4" r="1.7" fill="#2a62d8"/><circle cx="8.3" cy="4.6" r="1.7" fill="#d32626"/><path d="M6.2 4.2L8.3 7.6H4.1Z" fill="#1f9a2f"/><path d="M1.2 0.9H11.8M1.2 9.1H11.8" stroke="#555" stroke-width="0.7" stroke-dasharray="1 1"/></svg>
<div class="t" style="left:56.7px;top:381.0px;font-size:8.6px;line-height:10.6px;color:#a6a6a6;transform:scaleX(0.9334);transform-origin:0 0;">Doors - 1 or 100</div>
<div style="position:absolute;left:16px;top:393.0px;width:221px;height:14px;background:#262626;"></div>
<svg style="position:absolute;left:41.3px;top:395.0px;" width="13" height="10" viewBox="0 0 13 10"><rect x="0.4" y="0.4" width="12.2" height="9.2" rx="1" fill="#8e8e8e" stroke="#c9c9c9" stroke-width="0.9"/><rect x="2" y="1.6" width="9" height="6.6" fill="#b9b9b9"/><circle cx="5" cy="4" r="1.7" fill="#2a62d8"/><circle cx="8.3" cy="4.6" r="1.7" fill="#d32626"/><path d="M6.2 4.2L8.3 7.6H4.1Z" fill="#1f9a2f"/><path d="M1.2 0.9H11.8M1.2 9.1H11.8" stroke="#555" stroke-width="0.7" stroke-dasharray="1 1"/></svg>
<div class="t" style="left:56.7px;top:395.0px;font-size:8.6px;line-height:10.6px;color:#a6a6a6;transform:scaleX(0.9298);transform-origin:0 0;">doors-3+locks</div>
<svg style="position:absolute;left:31.4px;top:410.8px;" width="5" height="7" viewBox="0 0 5 7"><path d="M0.8 0.6L3.8 3.5L0.8 6.4" fill="none" stroke="#9a9a9a" stroke-width="1.1"/></svg>
<svg style="position:absolute;left:41.5px;top:409.4px;" width="10.8" height="8.6" viewBox="0 0 10.8 8.6"><path d="M0 0.8H4L5 2H11V9H0Z" fill="#8c8c8c"/><rect x="0.3" y="2.6" width="10.4" height="6" fill="#c4c4c4"/></svg>
<div class="t" style="left:56.7px;top:409.0px;font-size:8.6px;line-height:10.6px;color:#a6a6a6;transform:scaleX(0.9332);transform-origin:0 0;">doors-3+locks Layers</div>
<div style="position:absolute;left:16px;top:421.0px;width:221px;height:14px;background:#262626;"></div>
<svg style="position:absolute;left:41.3px;top:423.0px;" width="13" height="10" viewBox="0 0 13 10"><rect x="0.4" y="0.4" width="12.2" height="9.2" rx="1" fill="#8e8e8e" stroke="#c9c9c9" stroke-width="0.9"/><rect x="2" y="1.6" width="9" height="6.6" fill="#b9b9b9"/><circle cx="5" cy="4" r="1.7" fill="#2a62d8"/><circle cx="8.3" cy="4.6" r="1.7" fill="#d32626"/><path d="M6.2 4.2L8.3 7.6H4.1Z" fill="#1f9a2f"/><path d="M1.2 0.9H11.8M1.2 9.1H11.8" stroke="#555" stroke-width="0.7" stroke-dasharray="1 1"/></svg>
<div class="t" style="left:56.7px;top:423.0px;font-size:8.6px;line-height:10.6px;color:#a6a6a6;transform:scaleX(0.9807);transform-origin:0 0;">Money - Limited</div>
<svg style="position:absolute;left:41.3px;top:437.0px;" width="13" height="10" viewBox="0 0 13 10"><rect x="0.4" y="0.4" width="12.2" height="9.2" rx="1" fill="#8e8e8e" stroke="#c9c9c9" stroke-width="0.9"/><rect x="2" y="1.6" width="9" height="6.6" fill="#b9b9b9"/><circle cx="5" cy="4" r="1.7" fill="#2a62d8"/><circle cx="8.3" cy="4.6" r="1.7" fill="#d32626"/><path d="M6.2 4.2L8.3 7.6H4.1Z" fill="#1f9a2f"/><path d="M1.2 0.9H11.8M1.2 9.1H11.8" stroke="#555" stroke-width="0.7" stroke-dasharray="1 1"/></svg>
<div class="t" style="left:56.7px;top:437.0px;font-size:8.6px;line-height:10.6px;color:#a6a6a6;transform:scaleX(0.9726);transform-origin:0 0;">Monthly or Annually</div>
<div style="position:absolute;left:16px;top:449.0px;width:221px;height:14px;background:#262626;"></div>
<svg style="position:absolute;left:41.3px;top:451.0px;" width="13" height="10" viewBox="0 0 13 10"><rect x="0.4" y="0.4" width="12.2" height="9.2" rx="1" fill="#8e8e8e" stroke="#c9c9c9" stroke-width="0.9"/><rect x="2" y="1.6" width="9" height="6.6" fill="#b9b9b9"/><circle cx="5" cy="4" r="1.7" fill="#2a62d8"/><circle cx="8.3" cy="4.6" r="1.7" fill="#d32626"/><path d="M6.2 4.2L8.3 7.6H4.1Z" fill="#1f9a2f"/><path d="M1.2 0.9H11.8M1.2 9.1H11.8" stroke="#555" stroke-width="0.7" stroke-dasharray="1 1"/></svg>
<div class="t" style="left:56.7px;top:451.0px;font-size:8.6px;line-height:10.6px;color:#a6a6a6;transform:scaleX(0.9209);transform-origin:0 0;">NDEB Outline</div>
<svg style="position:absolute;left:41.3px;top:465.0px;" width="13" height="10" viewBox="0 0 13 10"><rect x="0.4" y="0.4" width="12.2" height="9.2" rx="1" fill="#8e8e8e" stroke="#c9c9c9" stroke-width="0.9"/><rect x="2" y="1.6" width="9" height="6.6" fill="#b9b9b9"/><circle cx="5" cy="4" r="1.7" fill="#2a62d8"/><circle cx="8.3" cy="4.6" r="1.7" fill="#d32626"/><path d="M6.2 4.2L8.3 7.6H4.1Z" fill="#1f9a2f"/><path d="M1.2 0.9H11.8M1.2 9.1H11.8" stroke="#555" stroke-width="0.7" stroke-dasharray="1 1"/></svg>
<div class="t" style="left:56.7px;top:465.0px;font-size:8.6px;line-height:10.6px;color:#a6a6a6;transform:scaleX(0.9343);transform-origin:0 0;">phone_bpone_outline</div>
<svg style="position:absolute;left:41.3px;top:477.5px;overflow:hidden;" width="13" height="3" viewBox="0 0 13 3"><rect x="0.4" y="0.4" width="12.2" height="5" rx="1" fill="#8e8e8e" stroke="#c9c9c9" stroke-width="0.9"/></svg>
<div style="position:absolute;left:237px;top:156px;width:13px;height:324px;background:#232323;"></div>
<div style="position:absolute;left:238.5px;top:169px;width:10px;height:137px;background:#2e2e2e;border-radius:5px;"></div>
<svg style="position:absolute;left:238px;top:158px;" width="10" height="9" viewBox="0 0 10 9"><rect x="3.5" y="0" width="3" height="3" fill="#c4c4c4"/><rect x="0" y="6" width="3" height="3" fill="#c4c4c4"/><rect x="3.5" y="6" width="3" height="3" fill="#c4c4c4"/><rect x="7" y="6" width="3" height="3" fill="#c4c4c4"/><path d="M5 3V6M1.5 6V4.5H8.5V6" fill="none" stroke="#c4c4c4" stroke-width="0.9"/></svg>
<div style="position:absolute;left:15px;top:480px;width:235px;height:14px;background:#232323;"></div>
<div style="position:absolute;left:15px;top:479.5px;width:129px;height:1px;background:#171717;"></div>
<svg style="position:absolute;left:18px;top:483px;" width="13" height="9" viewBox="0 0 13 9"><rect x="0.5" y="1" width="10" height="6.5" fill="#777" stroke="#c4c4c4" stroke-width="0.9"/><rect x="3" y="3" width="10" height="5.5" fill="#c4c4c4"/><path d="M4 5H12M4 7H12" stroke="#555" stroke-width="0.7"/></svg>
<svg style="position:absolute;left:36.5px;top:482.9px;" width="10.8" height="8.6" viewBox="0 0 10.8 8.6"><path d="M0 0.8H4L5 2H11V9H0Z" fill="#8c8c8c"/><rect x="0.3" y="2.6" width="10.4" height="6" fill="#c4c4c4"/></svg>
<svg style="position:absolute;left:54.5px;top:482.5px;" width="13" height="10" viewBox="0 0 13 10"><rect x="0.4" y="0.4" width="12.2" height="9.2" rx="1" fill="#8e8e8e" stroke="#c9c9c9" stroke-width="0.9"/><rect x="2" y="1.6" width="9" height="6.6" fill="#b9b9b9"/><circle cx="5" cy="4" r="1.7" fill="#2a62d8"/><circle cx="8.3" cy="4.6" r="1.7" fill="#d32626"/><path d="M6.2 4.2L8.3 7.6H4.1Z" fill="#1f9a2f"/><path d="M1.2 0.9H11.8M1.2 9.1H11.8" stroke="#555" stroke-width="0.7" stroke-dasharray="1 1"/></svg>
<svg style="position:absolute;left:74px;top:483px;" width="14" height="9" viewBox="0 0 14 9"><path d="M1 7L6 2L9 5M4 1L12 8" stroke="#6a6a6a" stroke-width="1.2" fill="none"/><circle cx="10.5" cy="5.5" r="2.2" fill="none" stroke="#6a6a6a" stroke-width="1"/></svg>
<div style="position:absolute;left:90px;top:481.5px;width:33px;height:11.5px;background:#1e1e1e;border-radius:2px;"></div>
<div class="t" style="left:97.5px;top:483.11px;font-size:7.5px;line-height:9.5px;color:#8f8f8f;transform:scaleX(0.9266);transform-origin:0 0;">8 bpc</div>
<svg style="position:absolute;left:128.5px;top:482.5px;" width="8" height="10" viewBox="0 0 8 10"><path d="M0.3 1.8H7.7M2.8 1.8V0.5H5.2V1.8" stroke="#8e8e8e" stroke-width="0.9" fill="none"/><path d="M1 2.6H7L6.5 9.6H1.5Z" fill="none" stroke="#8e8e8e" stroke-width="0.9"/><path d="M3 4V8.4M5 4V8.4" stroke="#8e8e8e" stroke-width="0.7"/></svg>
<div style="position:absolute;left:143px;top:481.5px;width:52px;height:11px;background:#2f2f2f;border-radius:5.5px;"></div>
<!-- comp -->
<svg style="position:absolute;left:260.5px;top:28.5px;" width="4.5" height="4.5" viewBox="0 0 4.5 4.5"><path d="M0.3 0.3L4.2 4.2M4.2 0.3L0.3 4.2" stroke="#8c8c8c" stroke-width="0.9"/></svg>
<div style="position:absolute;left:271.5px;top:25.6px;width:8px;height:7.6px;background:#cbad80;box-shadow:inset 0 0 0 0.5px #b3966c;"></div>
<svg style="position:absolute;left:286.7px;top:25px;" width="7" height="8" viewBox="0 0 7 8"><rect x="0" y="3.4" width="7" height="4.4" rx="0.6" fill="#d4d4d4"/><path d="M1.2 3.4V2.2A1.9 1.9 0 0 1 5 2.2" fill="none" stroke="#d4d4d4" stroke-width="1.1"/><rect x="3" y="4.8" width="1.2" height="1.8" fill="#232323"/></svg>
<div class="t" style="left:300.5px;top:25.0px;font-size:8.6px;line-height:10.6px;color:#dadada;transform:scaleX(0.9581);transform-origin:0 0;">Composition</div>
<div class="t" style="left:349px;top:25.0px;font-size:8.6px;line-height:10.6px;color:#2f8ceb;transform:scaleX(0.9375);transform-origin:0 0;">bpone_search+print</div>
<svg style="position:absolute;left:427.5px;top:27px;" width="7" height="6" viewBox="0 0 7 6"><path d="M0 0.5H7M0 3H7M0 5.5H7" stroke="#a0a0a0" stroke-width="1"/></svg>
<div class="t" style="left:274.6px;top:43.5px;font-size:8.6px;line-height:10.6px;color:#9c9c9c;transform:scaleX(0.8779);transform-origin:0 0;">*MASTER</div>
<svg style="position:absolute;left:320px;top:45.5px;" width="4" height="6" viewBox="0 0 4 6"><path d="M3.4 0.4L0.6 3L3.4 5.6" fill="none" stroke="#b0b0b0" stroke-width="1"/></svg>
<div class="t" style="left:334px;top:43.5px;font-size:8.6px;line-height:10.6px;color:#9c9c9c;transform:scaleX(0.9027);transform-origin:0 0;">Comp 07</div>
<svg style="position:absolute;left:377px;top:45.5px;" width="4" height="6" viewBox="0 0 4 6"><path d="M3.4 0.4L0.6 3L3.4 5.6" fill="none" stroke="#b0b0b0" stroke-width="1"/></svg>
<div style="position:absolute;left:384.6px;top:42.5px;width:94.5px;height:11.5px;background:#1a1a1a;border-radius:2px;"></div>
<div class="t" style="left:391px;top:43.5px;font-size:8.6px;line-height:10.6px;color:#2f8ceb;transform:scaleX(0.9375);transform-origin:0 0;">bpone_search+print</div>
<div style="position:absolute;left:254px;top:59px;width:847px;height:12px;background:#000;"></div>
<div style="position:absolute;left:254px;top:71px;width:11px;height:403px;background:#000;"></div>
<svg style="position:absolute;left:0;top:0" width="1280" height="500" viewBox="0 0 1280 500"><path d="M268.67 67.8V70M272.33 67.8V70M276.00 67.8V70M279.67 67.8V70M283.33 67.8V70M287.00 67.8V70M290.67 67.8V70M298.00 67.8V70M301.67 67.8V70M305.33 67.8V70M309.00 67.8V70M312.67 67.8V70M316.33 67.8V70M320.00 67.8V70M323.67 67.8V70M327.33 67.8V70M334.67 67.8V70M338.33 67.8V70M342.00 67.8V70M345.67 67.8V70M349.33 67.8V70M353.00 67.8V70M356.67 67.8V70M360.33 67.8V70M364.00 67.8V70M371.33 67.8V70M375.00 67.8V70M378.67 67.8V70M382.33 67.8V70M386.00 67.8V70M389.67 67.8V70M393.33 67.8V70M397.00 67.8V70M400.67 67.8V70M408.00 67.8V70M411.67 67.8V70M415.33 67.8V70M419.00 67.8V70M422.67 67.8V70M426.33 67.8V70M430.00 67.8V70M433.67 67.8V70M437.33 67.8V70M444.67 67.8V70M448.33 67.8V70M452.00 67.8V70M455.67 67.8V70M459.33 67.8V70M463.00 67.8V70M466.67 67.8V70M470.33 67.8V70M474.00 67.8V70M481.33 67.8V70M485.00 67.8V70M488.67 67.8V70M492.33 67.8V70M496.00 67.8V70M499.67 67.8V70M503.33 67.8V70M507.00 67.8V70M510.67 67.8V70M518.00 67.8V70M521.67 67.8V70M525.33 67.8V70M529.00 67.8V70M532.67 67.8V70M536.33 67.8V70M540.00 67.8V70M543.67 67.8V70M547.33 67.8V70M554.67 67.8V70M558.33 67.8V70M562.00 67.8V70M565.67 67.8V70M569.33 67.8V70M573.00 67.8V70M576.67 67.8V70M580.33 67.8V70M584.00 67.8V70M591.33 67.8V70M595.00 67.8V70M598.67 67.8V70M602.33 67.8V70M606.00 67.8V70M609.67 67.8V70M613.33 67.8V70M617.00 67.8V70M620.67 67.8V70M628.00 67.8V70M631.67 67.8V70M635.33 67.8V70M639.00 67.8V70M642.67 67.8V70M646.33 67.8V70M650.00 67.8V70M653.67 67.8V70M657.33 67.8V70M664.67 67.8V70M668.33 67.8V70M672.00 67.8V70M675.67 67.8V70M679.33 67.8V70M683.00 67.8V70M686.67 67.8V70M690.33 67.8V70M694.00 67.8V70M701.33 67.8V70M705.00 67.8V70M708.67 67.8V70M712.33 67.8V70M716.00 67.8V70M719.67 67.8V70M723.33 67.8V70M727.00 67.8V70M730.67 67.8V70M738.00 67.8V70M741.67 67.8V70M745.33 67.8V70M749.00 67.8V70M752.67 67.8V70M756.33 67.8V70M760.00 67.8V70M763.67 67.8V70M767.33 67.8V70M774.67 67.8V70M778.33 67.8V70M782.00 67.8V70M785.67 67.8V70M789.33 67.8V70M793.00 67.8V70M796.67 67.8V70M800.33 67.8V70M804.00 67.8V70M811.33 67.8V70M815.00 67.8V70M818.67 67.8V70M822.33 67.8V70M826.00 67.8V70M829.67 67.8V70M833.33 67.8V70M837.00 67.8V70M840.67 67.8V70M848.00 67.8V70M851.67 67.8V70M855.33 67.8V70M859.00 67.8V70M862.67 67.8V70M866.33 67.8V70M870.00 67.8V70M873.67 67.8V70M877.33 67.8V70M884.67 67.8V70M888.33 67.8V70M892.00 67.8V70M895.67 67.8V70M899.33 67.8V70M903.00 67.8V70M906.67 67.8V70M910.33 67.8V70M914.00 67.8V70M921.33 67.8V70M925.00 67.8V70M928.67 67.8V70M932.33 67.8V70M936.00 67.8V70M939.67 67.8V70M943.33 67.8V70M947.00 67.8V70M950.67 67.8V70M958.00 67.8V70M961.67 67.8V70M965.33 67.8V70M969.00 67.8V70M972.67 67.8V70M976.33 67.8V70M980.00 67.8V70M983.67 67.8V70M987.33 67.8V70M994.67 67.8V70M998.33 67.8V70M1002.00 67.8V70M1005.67 67.8V70M1009.33 67.8V70M1013.00 67.8V70M1016.67 67.8V70M1020.33 67.8V70M1024.00 67.8V70M1031.33 67.8V70M1035.00 67.8V70M1038.67 67.8V70M1042.33 67.8V70M1046.00 67.8V70M1049.67 67.8V70M1053.33 67.8V70M1057.00 67.8V70M1060.67 67.8V70M1068.00 67.8V70M1071.67 67.8V70M1075.33 67.8V70M1079.00 67.8V70M1082.67 67.8V70M1086.33 67.8V70M1090.00 67.8V70M1093.67 67.8V70M1097.33 67.8V70M261 77.67H264M261 81.33H264M261 85.00H264M261 88.67H264M261 92.33H264M261 96.00H264M261 99.67H264M261 103.33H264M261 107.00H264M261 114.33H264M261 118.00H264M261 121.67H264M261 125.33H264M261 129.00H264M261 132.67H264M261 136.33H264M261 140.00H264M261 143.67H264M261 151.00H264M261 154.67H264M261 158.33H264M261 162.00H264M261 165.67H264M261 169.33H264M261 173.00H264M261 176.67H264M261 180.33H264M261 187.67H264M261 191.33H264M261 195.00H264M261 198.67H264M261 202.33H264M261 206.00H264M261 209.67H264M261 213.33H264M261 217.00H264M261 224.33H264M261 228.00H264M261 231.67H264M261 235.33H264M261 239.00H264M261 242.67H264M261 246.33H264M261 250.00H264M261 253.67H264M261 261.00H264M261 264.67H264M261 268.33H264M261 272.00H264M261 275.67H264M261 279.33H264M261 283.00H264M261 286.67H264M261 290.33H264M261 297.67H264M261 301.33H264M261 305.00H264M261 308.67H264M261 312.33H264M261 316.00H264M261 319.67H264M261 323.33H264M261 327.00H264M261 334.33H264M261 338.00H264M261 341.67H264M261 345.33H264M261 349.00H264M261 352.67H264M261 356.33H264M261 360.00H264M261 363.67H264M261 371.00H264M261 374.67H264M261 378.33H264M261 382.00H264M261 385.67H264M261 389.33H264M261 393.00H264M261 396.67H264M261 400.33H264M261 407.67H264M261 411.33H264M261 415.00H264M261 418.67H264M261 422.33H264M261 426.00H264M261 429.67H264M261 433.33H264M261 437.00H264M261 444.33H264M261 448.00H264M261 451.67H264M261 455.33H264M261 459.00H264M261 462.67H264M261 466.33H264M261 470.00H264" stroke="#bdbdbd" stroke-width="1" fill="none"/><path d="M294.33 59.5V70M331.00 59.5V70M367.67 59.5V70M404.33 59.5V70M441.00 59.5V70M477.67 59.5V70M514.33 59.5V70M551.00 59.5V70M587.67 59.5V70M624.33 59.5V70M661.00 59.5V70M697.67 59.5V70M734.33 59.5V70M771.00 59.5V70M807.67 59.5V70M844.33 59.5V70M881.00 59.5V70M917.67 59.5V70M954.33 59.5V70M991.00 59.5V70M1027.67 59.5V70M1064.33 59.5V70M254.5 74.00H264M254.5 110.67H264M254.5 147.33H264M254.5 184.00H264M254.5 220.67H264M254.5 257.33H264M254.5 294.00H264M254.5 330.67H264M254.5 367.33H264M254.5 404.00H264M254.5 440.67H264" stroke="#8a8a8a" stroke-width="1" fill="none"/><path d="M254 70.5H1101M264.5 59V474" stroke="#c6c6c6" stroke-width="1" fill="none"/><path d="M255 65.5H264M259.5 60V70" stroke="#9a9a9a" stroke-width="0.8" stroke-dasharray="1.5 1" fill="none"/><text x="295.7" y="66" font-family="Liberation Sans,sans-serif" font-size="6.6" fill="#c4c8cc" textLength="10.6" lengthAdjust="spacingAndGlyphs">100</text><text x="332.4" y="66" font-family="Liberation Sans,sans-serif" font-size="6.6" fill="#c4c8cc" textLength="3.5" lengthAdjust="spacingAndGlyphs">0</text><text x="369.1" y="66" font-family="Liberation Sans,sans-serif" font-size="6.6" fill="#c4c8cc" textLength="10.6" lengthAdjust="spacingAndGlyphs">100</text><text x="405.7" y="66" font-family="Liberation Sans,sans-serif" font-size="6.6" fill="#c4c8cc" textLength="10.6" lengthAdjust="spacingAndGlyphs">200</text><text x="442.4" y="66" font-family="Liberation Sans,sans-serif" font-size="6.6" fill="#c4c8cc" textLength="10.6" lengthAdjust="spacingAndGlyphs">300</text><text x="479.1" y="66" font-family="Liberation Sans,sans-serif" font-size="6.6" fill="#c4c8cc" textLength="10.6" lengthAdjust="spacingAndGlyphs">400</text><text x="515.7" y="66" font-family="Liberation Sans,sans-serif" font-size="6.6" fill="#c4c8cc" textLength="10.6" lengthAdjust="spacingAndGlyphs">500</text><text x="552.4" y="66" font-family="Liberation Sans,sans-serif" font-size="6.6" fill="#c4c8cc" textLength="10.6" lengthAdjust="spacingAndGlyphs">600</text><text x="589.1" y="66" font-family="Liberation Sans,sans-serif" font-size="6.6" fill="#c4c8cc" textLength="10.6" lengthAdjust="spacingAndGlyphs">700</text><text x="625.7" y="66" font-family="Liberation Sans,sans-serif" font-size="6.6" fill="#c4c8cc" textLength="10.6" lengthAdjust="spacingAndGlyphs">800</text><text x="662.4" y="66" font-family="Liberation Sans,sans-serif" font-size="6.6" fill="#c4c8cc" textLength="10.6" lengthAdjust="spacingAndGlyphs">900</text><text x="699.1" y="66" font-family="Liberation Sans,sans-serif" font-size="6.6" fill="#c4c8cc" textLength="14.2" lengthAdjust="spacingAndGlyphs">1000</text><text x="735.7" y="66" font-family="Liberation Sans,sans-serif" font-size="6.6" fill="#c4c8cc" textLength="14.2" lengthAdjust="spacingAndGlyphs">1100</text><text x="772.4" y="66" font-family="Liberation Sans,sans-serif" font-size="6.6" fill="#c4c8cc" textLength="14.2" lengthAdjust="spacingAndGlyphs">1200</text><text x="809.1" y="66" font-family="Liberation Sans,sans-serif" font-size="6.6" fill="#c4c8cc" textLength="14.2" lengthAdjust="spacingAndGlyphs">1300</text><text x="845.7" y="66" font-family="Liberation Sans,sans-serif" font-size="6.6" fill="#c4c8cc" textLength="14.2" lengthAdjust="spacingAndGlyphs">1400</text><text x="882.4" y="66" font-family="Liberation Sans,sans-serif" font-size="6.6" fill="#c4c8cc" textLength="14.2" lengthAdjust="spacingAndGlyphs">1500</text><text x="919.1" y="66" font-family="Liberation Sans,sans-serif" font-size="6.6" fill="#c4c8cc" textLength="14.2" lengthAdjust="spacingAndGlyphs">1600</text><text x="955.7" y="66" font-family="Liberation Sans,sans-serif" font-size="6.6" fill="#c4c8cc" textLength="14.2" lengthAdjust="spacingAndGlyphs">1700</text><text x="992.4" y="66" font-family="Liberation Sans,sans-serif" font-size="6.6" fill="#c4c8cc" textLength="14.2" lengthAdjust="spacingAndGlyphs">1800</text><text x="1029.1" y="66" font-family="Liberation Sans,sans-serif" font-size="6.6" fill="#c4c8cc" textLength="14.2" lengthAdjust="spacingAndGlyphs">1900</text><text x="1065.7" y="66" font-family="Liberation Sans,sans-serif" font-size="6.6" fill="#c4c8cc" textLength="14.2" lengthAdjust="spacingAndGlyphs">2000</text><text transform="translate(255.6 75.4) rotate(90)" font-family="Liberation Sans,sans-serif" font-size="6.6" fill="#c4c8cc" textLength="3.5" lengthAdjust="spacingAndGlyphs">0</text><text transform="translate(255.6 112.1) rotate(90)" font-family="Liberation Sans,sans-serif" font-size="6.6" fill="#c4c8cc" textLength="10.6" lengthAdjust="spacingAndGlyphs">100</text><text transform="translate(255.6 148.7) rotate(90)" font-family="Liberation Sans,sans-serif" font-size="6.6" fill="#c4c8cc" textLength="10.6" lengthAdjust="spacingAndGlyphs">200</text><text transform="translate(255.6 185.4) rotate(90)" font-family="Liberation Sans,sans-serif" font-size="6.6" fill="#c4c8cc" textLength="10.6" lengthAdjust="spacingAndGlyphs">300</text><text transform="translate(255.6 222.1) rotate(90)" font-family="Liberation Sans,sans-serif" font-size="6.6" fill="#c4c8cc" textLength="10.6" lengthAdjust="spacingAndGlyphs">400</text><text transform="translate(255.6 258.7) rotate(90)" font-family="Liberation Sans,sans-serif" font-size="6.6" fill="#c4c8cc" textLength="10.6" lengthAdjust="spacingAndGlyphs">500</text><text transform="translate(255.6 295.4) rotate(90)" font-family="Liberation Sans,sans-serif" font-size="6.6" fill="#c4c8cc" textLength="10.6" lengthAdjust="spacingAndGlyphs">600</text><text transform="translate(255.6 332.1) rotate(90)" font-family="Liberation Sans,sans-serif" font-size="6.6" fill="#c4c8cc" textLength="10.6" lengthAdjust="spacingAndGlyphs">700</text><text transform="translate(255.6 368.7) rotate(90)" font-family="Liberation Sans,sans-serif" font-size="6.6" fill="#c4c8cc" textLength="10.6" lengthAdjust="spacingAndGlyphs">800</text><text transform="translate(255.6 405.4) rotate(90)" font-family="Liberation Sans,sans-serif" font-size="6.6" fill="#c4c8cc" textLength="10.6" lengthAdjust="spacingAndGlyphs">900</text><text transform="translate(255.6 442.1) rotate(90)" font-family="Liberation Sans,sans-serif" font-size="6.6" fill="#c4c8cc" textLength="14.2" lengthAdjust="spacingAndGlyphs">1000</text><path d="M996.3 60V70" stroke="#2b7fd6" stroke-width="1.2"/><path d="M255 362.3H264" stroke="#2b7fd6" stroke-width="1.2"/></svg>
<div style="position:absolute;left:265px;top:204px;width:66px;height:1px;background:#a0262c;"></div>
<div style="position:absolute;left:495px;top:72px;width:1px;height:1.5px;background:#a0262c;"></div>
<div style="position:absolute;left:761px;top:72px;width:1px;height:1.5px;background:#a0262c;"></div>
<div style="position:absolute;left:330.5px;top:73px;width:705px;height:398.8px;background:#1a1410;"></div>
<svg style="position:absolute;left:331px;top:74px" width="704" height="396.5" viewBox="0 0 704 396" preserveAspectRatio="none"><rect width="704" height="396" fill="#1196f6"/><path d="M112.7 396C115.8 393.9 125.3 388.0 131.5 383.5C137.7 379.0 144.8 373.2 150.0 369.0C155.2 364.8 159.2 362.3 162.7 358.5C166.2 354.7 168.9 349.6 171.0 346.0C173.1 342.4 173.5 342.3 175.0 336.6C176.5 330.9 178.4 319.8 180.0 312.0C181.6 304.2 183.1 296.8 184.6 290.0C186.1 283.2 187.4 276.8 189.0 271.0C190.6 265.2 191.7 260.8 194.0 255.0C196.3 249.2 199.7 242.2 203.0 236.0C206.3 229.8 211.3 223.0 214.0 218.0C216.7 213.0 217.3 210.8 219.0 206.0C220.7 201.2 222.1 196.0 224.0 189.3C225.9 182.6 228.6 172.4 230.7 166.0C232.8 159.6 235.6 155.2 236.5 151.0C237.4 146.8 236.3 144.9 236.0 141.0C235.7 137.1 234.9 131.6 234.8 127.7C234.8 123.8 235.1 120.4 235.7 117.7C236.3 115.0 237.4 113.2 238.5 111.8C239.6 110.4 240.7 109.6 242.3 109.3C243.9 109.0 246.1 109.1 248.0 109.8C249.9 110.5 251.3 111.6 254.0 113.5C256.7 115.4 261.5 118.4 264.0 121.0C266.5 123.6 267.8 126.0 269.0 129.3C270.2 132.6 271.1 139.1 271.5 141.0L300 160L300 362L395 362L399.5 366C399.5 367.0 399.8 370.0 399.5 372.0C399.2 374.0 398.8 375.2 397.5 378.0C396.2 380.8 393.8 385.5 391.5 388.5C389.2 391.5 385.2 394.8 384.0 396.0Z" fill="#f9bea3"/><path d="M436 141.5C436.6 141.3 438.1 140.8 439.8 140.2C441.5 139.6 443.9 138.5 446.0 138.0C448.1 137.5 450.3 137.2 452.3 137.3C454.3 137.4 456.3 137.7 458.0 138.3C459.7 138.9 461.0 139.9 462.3 141.0C463.6 142.1 465.0 143.4 465.8 144.8C466.6 146.2 467.2 147.4 467.3 149.3C467.4 151.2 467.1 154.0 466.5 156.0C465.9 158.0 465.0 159.8 464.0 161.5C463.0 163.2 462.6 164.0 460.7 166.0C458.8 168.0 455.1 171.1 452.3 173.5C449.5 175.9 446.7 178.2 444.0 180.2C441.3 182.2 437.3 184.6 436.0 185.5Z" fill="#f9bea3"/><clipPath id="ahc"><path d="M112.7 396C115.8 393.9 125.3 388.0 131.5 383.5C137.7 379.0 144.8 373.2 150.0 369.0C155.2 364.8 159.2 362.3 162.7 358.5C166.2 354.7 168.9 349.6 171.0 346.0C173.1 342.4 173.5 342.3 175.0 336.6C176.5 330.9 178.4 319.8 180.0 312.0C181.6 304.2 183.1 296.8 184.6 290.0C186.1 283.2 187.4 276.8 189.0 271.0C190.6 265.2 191.7 260.8 194.0 255.0C196.3 249.2 199.7 242.2 203.0 236.0C206.3 229.8 211.3 223.0 214.0 218.0C216.7 213.0 217.3 210.8 219.0 206.0C220.7 201.2 222.1 196.0 224.0 189.3C225.9 182.6 228.6 172.4 230.7 166.0C232.8 159.6 235.6 155.2 236.5 151.0C237.4 146.8 236.3 144.9 236.0 141.0C235.7 137.1 234.9 131.6 234.8 127.7C234.8 123.8 235.1 120.4 235.7 117.7C236.3 115.0 237.4 113.2 238.5 111.8C239.6 110.4 240.7 109.6 242.3 109.3C243.9 109.0 246.1 109.1 248.0 109.8C249.9 110.5 251.3 111.6 254.0 113.5C256.7 115.4 261.5 118.4 264.0 121.0C266.5 123.6 267.8 126.0 269.0 129.3C270.2 132.6 271.1 139.1 271.5 141.0L300 160L300 362L395 362L399.5 366C399.5 367.0 399.8 370.0 399.5 372.0C399.2 374.0 398.8 375.2 397.5 378.0C396.2 380.8 393.8 385.5 391.5 388.5C389.2 391.5 385.2 394.8 384.0 396.0Z"/></clipPath><rect x="261.8" y="36" width="172" height="336.3" rx="21" fill="#f4a687" clip-path="url(#ahc)"/><path d="M287.7 396C290 388 296 382.5 304 379.7" fill="none" stroke="#f4a687" stroke-width="0.9"/><rect x="263.3" y="75" width="3" height="14" rx="1" fill="#c9c9c9"/><rect x="263.3" y="99" width="3" height="20" rx="1" fill="#c9c9c9"/><rect x="436.5" y="106" width="3.4" height="36" rx="1" fill="#c9c9c9"/><rect x="265.5" y="29.7" width="172.3" height="336.6" rx="22" fill="#d8d8d8"/><rect x="270" y="33.8" width="164" height="328.2" rx="18.5" fill="#403e40"/><clipPath id="asc"><rect x="278" y="40.6" width="148" height="314.8" rx="11.5"/></clipPath><g clip-path="url(#asc)"><rect x="278" y="46.8" width="148" height="310" fill="#fff"/><rect x="283.5" y="40" width="137" height="8.4" fill="#1372b5"/><text x="288.5" y="43.8" font-family="Liberation Sans,sans-serif" font-weight="bold" font-size="5.4" fill="#e6f0f8" text-anchor="start" textLength="17.5" lengthAdjust="spacingAndGlyphs">PHOTO</text><path d="M281.5 48.4V145.5Q281.5 147 283 147H420.5" fill="none" stroke="#e6e6e6" stroke-width="1"/><rect x="327.8" y="52" width="49" height="63.6" fill="#b6c3ea"/><clipPath id="apc"><rect x="327.8" y="52" width="49" height="63.6"/></clipPath><g clip-path="url(#apc)"><path d="M327.8 116V108C327.8 101.5 334 98.5 343 97.2H361.5C370.5 98.5 376.8 101.5 376.8 108V116Z" fill="#3f4b8c"/><path d="M344.2 96.8C346 102.5 358.5 102.5 360.3 96.8L357.6 93.5H347Z" fill="#e9e9ee"/><path d="M346.6 88H358V96.2C355.5 99.4 349 99.4 346.6 96.2Z" fill="#a66a3f"/><g transform="translate(0 94) scale(1 0.95) translate(0 -94)"><ellipse cx="336.3" cy="77.5" rx="2.6" ry="4" fill="#b27647"/><ellipse cx="368.3" cy="77.5" rx="2.6" ry="4" fill="#b27647"/><path d="M337.6 66C337.6 58 344 55.6 352.3 55.6S367 58 367 66V79.5C367 88.5 359.5 94.5 352.3 94.5S337.6 88.5 337.6 79.5Z" fill="#b97b4b"/><path d="M336.6 74C334.6 60 341 52.4 352.3 52.4S370 60 368 74L366.6 74.3C366.6 68.5 365.5 66 363.5 64.4C357 66.4 347.5 66.4 341 64.4C339 66 338 68.5 338 74.3Z" fill="#3b3435"/><path d="M341.6 72.6H348.8M355.8 72.6H363" stroke="#3b3435" stroke-width="2.2"/><circle cx="345.6" cy="78.2" r="1.6" fill="#2c2424"/><circle cx="359" cy="78.2" r="1.6" fill="#2c2424"/><path d="M352.3 77.5L354.3 84H350.3Z" fill="#9b6038"/><path d="M349 88.6Q352.3 90 355.6 88.6" fill="none" stroke="#9b6038" stroke-width="0.9"/></g></g><rect x="302.2" y="117.2" width="12.4" height="13.8" rx="1.6" fill="#1674b3"/><rect x="304.59999999999997" y="121" width="7.6" height="6.4" rx="0.8" fill="none" stroke="#e8f2fa" stroke-width="1.2"/><rect x="307.2" y="122.8" width="2.4" height="2.8" fill="#e8f2fa"/><rect x="331.8" y="117.2" width="12.4" height="13.8" rx="1.6" fill="#1674b3"/><path d="M335.8 119.6V127.4H341.6M334.2 121.4H340V129" fill="none" stroke="#e8f2fa" stroke-width="1.3"/><rect x="361.2" y="117.2" width="12.4" height="13.8" rx="1.6" fill="#1674b3"/><path d="M367.4 119.4L370.59999999999997 123H368.59999999999997V126H366.2V123H364.2Z" fill="#e8f2fa"/><path d="M363.4 125.6V128.6H371.4V125.6" fill="none" stroke="#e8f2fa" stroke-width="1.2"/><rect x="390.3" y="117.2" width="12.4" height="13.8" rx="1.6" fill="#1674b3"/><path d="M399.1 120.6L393.9 124.1L399.1 127.6" fill="none" stroke="#e8f2fa" stroke-width="1"/><circle cx="399.3" cy="120.6" r="1.5" fill="#e8f2fa"/><circle cx="393.7" cy="124.1" r="1.5" fill="#e8f2fa"/><circle cx="399.3" cy="127.6" r="1.5" fill="#e8f2fa"/><text x="308.4" y="140.2" font-family="Liberation Sans,sans-serif" font-weight="bold" font-size="5.2" fill="#3c3c3c" text-anchor="middle" textLength="24.5" lengthAdjust="spacingAndGlyphs">CAPTURE</text><text x="338" y="140.2" font-family="Liberation Sans,sans-serif" font-weight="bold" font-size="5.2" fill="#3c3c3c" text-anchor="middle" textLength="14.2" lengthAdjust="spacingAndGlyphs">CROP</text><text x="367.4" y="140.2" font-family="Liberation Sans,sans-serif" font-weight="bold" font-size="5.2" fill="#3c3c3c" text-anchor="middle" textLength="20.5" lengthAdjust="spacingAndGlyphs">IMPORT</text><text x="396.5" y="140.2" font-family="Liberation Sans,sans-serif" font-weight="bold" font-size="5.2" fill="#3c3c3c" text-anchor="middle" textLength="21" lengthAdjust="spacingAndGlyphs">EXPORT</text><text x="290.2" y="164.6" font-family="Liberation Sans,sans-serif" font-weight="bold" font-size="5.2" fill="#3c3c3c" text-anchor="start" textLength="31.2" lengthAdjust="spacingAndGlyphs">FIRST NAME</text><rect x="290.2" y="169.7" width="128.2" height="13.1" rx="1.5" fill="#fff" stroke="#ededed" stroke-width="1"/><text x="294" y="178.05" font-family="Liberation Sans,sans-serif" font-weight="bold" font-size="4.8" fill="#444" text-anchor="start" textLength="17.5" lengthAdjust="spacingAndGlyphs">JACOB</text><text x="290.2" y="198.7" font-family="Liberation Sans,sans-serif" font-weight="bold" font-size="5.2" fill="#3c3c3c" text-anchor="start" textLength="29.5" lengthAdjust="spacingAndGlyphs">LAST NAME</text><rect x="290.2" y="203" width="128.2" height="13.0" rx="1.5" fill="#fff" stroke="#ededed" stroke-width="1"/><text x="294" y="211.3" font-family="Liberation Sans,sans-serif" font-weight="bold" font-size="4.8" fill="#444" text-anchor="start" textLength="17" lengthAdjust="spacingAndGlyphs">JONES</text><text x="290.2" y="231.5" font-family="Liberation Sans,sans-serif" font-weight="bold" font-size="5.2" fill="#3c3c3c" text-anchor="start" textLength="28.5" lengthAdjust="spacingAndGlyphs">ID NUMBER</text><rect x="290.2" y="236.6" width="128.2" height="12.4" rx="1.5" fill="#fff" stroke="#ededed" stroke-width="1"/><text x="294" y="244.60000000000002" font-family="Liberation Sans,sans-serif" font-weight="bold" font-size="4.8" fill="#444" text-anchor="start" textLength="14" lengthAdjust="spacingAndGlyphs">12346</text><text x="290.2" y="264.7" font-family="Liberation Sans,sans-serif" font-weight="bold" font-size="5.2" fill="#3c3c3c" text-anchor="start" textLength="39.8" lengthAdjust="spacingAndGlyphs">ACTIVE STATUS</text><rect x="290.2" y="268.6" width="19.4" height="12.4" rx="6.2" fill="#1372b5"/><circle cx="303.4" cy="274.8" r="4.9" fill="#f4f8fb"/><text x="290.2" y="297.8" font-family="Liberation Sans,sans-serif" font-weight="bold" font-size="5.2" fill="#3c3c3c" text-anchor="start" textLength="34.6" lengthAdjust="spacingAndGlyphs">DEPARTMENT</text><rect x="290.2" y="302.3" width="128.2" height="13.1" rx="1.5" fill="#fff" stroke="#ededed" stroke-width="1"/><text x="294" y="310.65000000000003" font-family="Liberation Sans,sans-serif" font-weight="bold" font-size="4.8" fill="#444" text-anchor="start" textLength="43.5" lengthAdjust="spacingAndGlyphs">ADMINISTRATION</text><rect x="421" y="137.5" width="1.2" height="166" fill="#6f6f6f"/><rect x="278" y="324.8" width="148" height="32" fill="#0c69a9"/><path d="M405.3 327.2V339.8L411.8 333.5Z" fill="none" stroke="#dbe9f4" stroke-width="0.9" stroke-linejoin="round"/><text x="400.9" y="348.3" font-family="Liberation Sans,sans-serif" font-weight="bold" font-size="4.6" fill="#eef5fa" text-anchor="start" textLength="14.2" lengthAdjust="spacingAndGlyphs">NEXT</text><rect x="326" y="350.4" width="51.7" height="1.9" rx="0.9" fill="#3a3a3c"/></g><path d="M311.5 36H392.8V40.6H392.8V45C392.8 50 389.5 53 384.5 53H319.8C314.8 53 311.5 50 311.5 45Z" fill="#403e40"/><rect x="340" y="43.5" width="20.5" height="2.5" rx="1.2" fill="#5d5b5d"/><circle cx="367.8" cy="44.7" r="2.4" fill="none" stroke="#5d5b5d" stroke-width="1.1"/><path d="M262 119C262.3 119.3 262.8 119.3 264.0 121.0C265.2 122.7 267.8 126.0 269.0 129.3C270.2 132.6 270.9 136.6 271.5 141.0C272.1 145.4 272.2 151.3 272.3 156.0C272.4 160.7 272.4 165.4 272.0 169.3C271.6 173.2 270.7 176.5 269.8 179.3C268.9 182.1 267.1 184.9 266.5 186.0L255 186L250 130Z" fill="#f9bea3"/><path d="M247.7 175.2C253 181 259 184.5 266.5 185.8" fill="none" stroke="#f0997a" stroke-width="1.2"/><path d="M452.7 296C453.9 297.0 458.0 299.1 460.2 302.2C462.4 305.3 464.9 311.1 466.0 314.7C467.1 318.2 467.3 320.6 467.0 323.5C466.7 326.4 466.2 328.3 464.0 332.2C461.8 336.1 457.3 341.8 454.0 346.6C450.7 351.4 446.8 358.6 444.0 361.0C441.2 363.4 439.6 361.2 437.5 361.0C435.4 360.8 434.0 361.2 431.5 359.7C429.0 358.2 424.8 355.3 422.7 352.2C420.6 349.1 419.4 344.9 419.0 341.0C418.6 337.1 418.9 332.7 420.2 328.5C421.4 324.3 424.1 320.2 426.5 316.0C428.9 311.8 431.6 306.3 434.5 303.5C437.4 300.7 442.4 299.8 444.0 299.0Z" fill="#f9bea3"/><path d="M436.5 227.2C437.8 227.6 441.1 228.0 444.0 229.7C446.9 231.4 450.9 234.1 454.0 237.2C457.1 240.3 460.6 244.5 462.7 248.5C464.8 252.5 466.3 256.8 466.5 261.0C466.7 265.2 465.5 269.1 464.0 273.5C462.5 277.9 459.6 283.4 457.7 287.2C455.8 290.9 454.6 293.5 452.7 296.0C450.8 298.5 448.4 301.1 446.5 302.2C444.6 303.3 443.8 303.1 441.5 302.7C439.2 302.3 435.4 301.6 432.7 299.7C430.0 297.8 427.0 294.5 425.2 291.0C423.4 287.5 422.3 282.7 422.0 278.5C421.7 274.3 422.3 270.4 423.5 266.0C424.7 261.6 427.1 256.4 429.0 252.2C430.9 248.0 434.2 242.9 435.2 241.0Z" fill="#f9bea3"/><path d="M430 297.5C431.0 298.2 434.1 300.6 436.0 301.5C437.9 302.4 439.8 302.9 441.5 303.0C443.2 303.1 444.6 303.5 446.5 302.4C448.4 301.3 451.7 297.5 452.7 296.5" fill="none" stroke="#f4a687" stroke-width="1"/></svg>
<div style="position:absolute;left:253px;top:476px;width:849px;height:18px;background:#252525;"></div>
<div style="position:absolute;left:253px;top:476.3px;width:849px;height:1px;background:#1c1c1c;"></div>
<div style="position:absolute;left:256.7px;top:478.4px;width:51.3px;height:13.8px;background:#202020;border-radius:2px;box-shadow:0 0 0 0.6px #323232;"></div>
<div class="t" style="left:261.4px;top:480.2px;font-size:8.6px;line-height:10.6px;color:#b4b4b4;transform:scaleX(0.9851);transform-origin:0 0;">(50%)</div>
<svg style="position:absolute;left:298px;top:483.5px;" width="6" height="4" viewBox="0 0 6 4"><path d="M0.5 0.6L3 3.2L5.5 0.6" fill="none" stroke="#b8b8b8" stroke-width="1"/></svg>
<div style="position:absolute;left:311.5px;top:479px;width:1px;height:12px;background:#343434;"></div>
<div style="position:absolute;left:315.7px;top:478.4px;width:63px;height:13.8px;background:#202020;border-radius:2px;box-shadow:0 0 0 0.6px #323232;"></div>
<div class="t" style="left:321.2px;top:480.2px;font-size:8.6px;line-height:10.6px;color:#b4b4b4;transform:scaleX(0.9814);transform-origin:0 0;">Full</div>
<svg style="position:absolute;left:369px;top:483.5px;" width="6" height="4" viewBox="0 0 6 4"><path d="M0.5 0.6L3 3.2L5.5 0.6" fill="none" stroke="#b8b8b8" stroke-width="1"/></svg>
<div style="position:absolute;left:383.5px;top:479px;width:1px;height:12px;background:#343434;"></div>
<div style="position:absolute;left:387px;top:479px;width:15px;height:12.6px;background:#161616;border-radius:2px;"></div>
<svg style="position:absolute;left:389px;top:480.5px;" width="11.5" height="9.5" viewBox="0 0 11.5 9.5"><rect x="0.6" y="0.6" width="10.3" height="8" rx="1" fill="none" stroke="#c4c4c4" stroke-width="1.1"/><path d="M6.6 1.6L3.6 5H5.6L4.6 7.8L7.8 4.2H5.8Z" fill="#c4c4c4"/><path d="M7.6 7.6H11L9.3 9.6Z" fill="#c4c4c4"/></svg>
<svg style="position:absolute;left:405px;top:480.5px;" width="11" height="9" viewBox="0 0 11 9"><rect x="0.5" y="0.5" width="10" height="8" rx="1" fill="#555" stroke="#c4c4c4" stroke-width="1"/><path d="M1 1H3.5V3.2H6V1H8.5V3.2H10M1 5.6H3.5V3.2M6 3.2V5.6H8.5V3.2M3.5 5.6V8M3.5 5.6H6M6 5.6V8M8.5 5.6V8M8.5 5.6H10" stroke="#c4c4c4" stroke-width="0.8" fill="none"/></svg>
<div style="position:absolute;left:419.6px;top:479px;width:14.6px;height:12.6px;background:#161616;border-radius:2px;"></div>
<svg style="position:absolute;left:421.5px;top:480.5px;" width="11" height="9.5" viewBox="0 0 11 9.5"><path d="M1.2 4.2L5 1L10 1.2L9.6 8.2L1.6 8.6Z" fill="none" stroke="#3791ef" stroke-width="1.1"/><circle cx="1.2" cy="4.2" r="1" fill="#3791ef"/><circle cx="5" cy="1" r="1" fill="#3791ef"/><circle cx="10" cy="1.2" r="1" fill="#3791ef"/><circle cx="9.6" cy="8.2" r="1" fill="#3791ef"/><circle cx="1.6" cy="8.6" r="1" fill="#3791ef"/></svg>
<div style="position:absolute;left:436px;top:479px;width:14px;height:12.6px;background:#1b1b1b;border-radius:2px;"></div>
<svg style="position:absolute;left:437.5px;top:480.5px;" width="11" height="9" viewBox="0 0 11 9"><rect x="0.6" y="0.6" width="9.8" height="7.8" rx="1" fill="none" stroke="#c4c4c4" stroke-width="1.1"/><rect x="2.8" y="3" width="5.4" height="3.4" fill="#c4c4c4"/></svg>
<svg style="position:absolute;left:453.4px;top:479.5px;" width="11" height="11.5" viewBox="0 0 11 11.5"><rect x="0.6" y="0.6" width="9.8" height="7.4" rx="1" fill="none" stroke="#c4c4c4" stroke-width="1.1"/><path d="M5.5 0V8.6M0 4.3H11" stroke="#c4c4c4" stroke-width="0.8" stroke-dasharray="1.6 1.2"/><path d="M6.8 9.2H10.4L8.6 11.2Z" fill="#c4c4c4"/></svg>
<div style="position:absolute;left:470.5px;top:479px;width:1px;height:12px;background:#343434;"></div>
<svg style="position:absolute;left:478px;top:479.5px;" width="10" height="11.5" viewBox="0 0 10 11.5"><circle cx="5" cy="3" r="2.5" fill="#e0202a"/><circle cx="2.8" cy="6.2" r="2.5" fill="#27c034"/><circle cx="7" cy="6.2" r="2.5" fill="#3a6cf0"/><path d="M6.4 9.4H9.8L8.1 11.3Z" fill="#c4c4c4"/></svg>
<svg style="position:absolute;left:494px;top:480.3px;" width="9.6" height="9.6" viewBox="0 0 9.6 9.6"><circle cx="4.8" cy="4.8" r="4.2" fill="none" stroke="#c4c4c4" stroke-width="1.2"/><circle cx="4.8" cy="4.8" r="2.7" fill="none" stroke="#c4c4c4" stroke-width="1.6" stroke-dasharray="2 0.9"/></svg>
<div class="t" style="left:508.4px;top:480.2px;font-size:8.6px;line-height:10.6px;color:#2f8ceb;transform:scaleX(0.9071);transform-origin:0 0;">+0.0</div>
<div style="position:absolute;left:535px;top:479px;width:1px;height:12px;background:#343434;"></div>
<svg style="position:absolute;left:542px;top:481px;" width="10.5" height="8.5" viewBox="0 0 10.5 8.5"><path d="M0.4 2H2.8L3.8 0.5H6.8L7.8 2H10.1V8H0.4Z" fill="#c4c4c4"/><circle cx="5.3" cy="4.8" r="2" fill="#252525"/><circle cx="5.3" cy="4.8" r="1" fill="#c4c4c4"/></svg>
<svg style="position:absolute;left:558px;top:480.5px;" width="11" height="9.5" viewBox="0 0 11 9.5"><path d="M0.6 5L4.4 1.4L9 3.6L10.4 2.4M3 7.8L6.6 8.8L9.6 5.4L5.4 3.4Z" fill="none" stroke="#505050" stroke-width="1"/></svg>
<div style="position:absolute;left:574.3px;top:479px;width:1px;height:12px;background:#343434;"></div>
<div style="position:absolute;left:579.7px;top:478.4px;width:49.5px;height:13.8px;background:#202020;border-radius:2px;box-shadow:0 0 0 0.6px #323232;"></div>
<div class="t" style="left:585px;top:480.2px;font-size:8.6px;line-height:10.6px;color:#a8a8a8;transform:scaleX(0.9225);transform-origin:0 0;">0:00:08:02</div>
<div style="position:absolute;left:633.7px;top:479px;width:1px;height:12px;background:#343434;"></div>
<!-- right -->
<div class="t" style="left:1114px;top:25.9px;font-size:8.6px;line-height:10.6px;color:#9c9c9c;transform:scaleX(0.9481);transform-origin:0 0;">Info</div>
<div style="position:absolute;left:1106px;top:40.4px;width:149px;height:1.5px;background:#181818;"></div>
<div class="t" style="left:1114px;top:47.9px;font-size:8.6px;line-height:10.6px;color:#9c9c9c;transform:scaleX(0.9547);transform-origin:0 0;">Audio</div>
<div style="position:absolute;left:1106px;top:62.4px;width:149px;height:1.5px;background:#181818;"></div>
<div class="t" style="left:1114px;top:69.9px;font-size:8.6px;line-height:10.6px;color:#9c9c9c;transform:scaleX(0.9808);transform-origin:0 0;">Preview</div>
<div style="position:absolute;left:1106px;top:84.4px;width:149px;height:1.5px;background:#181818;"></div>
<div class="t" style="left:1114px;top:91.9px;font-size:8.6px;line-height:10.6px;color:#9c9c9c;transform:scaleX(0.9270);transform-origin:0 0;">Effects &amp; Presets</div>
<div style="position:absolute;left:1106px;top:106.4px;width:149px;height:1.5px;background:#181818;"></div>
<div class="t" style="left:1114px;top:113.9px;font-size:8.6px;line-height:10.6px;color:#9c9c9c;transform:scaleX(0.9551);transform-origin:0 0;">Libraries</div>
<div style="position:absolute;left:1106px;top:128.4px;width:149px;height:1.5px;background:#181818;"></div>
<div class="t" style="left:1114px;top:135.9px;font-size:8.6px;line-height:10.6px;color:#9c9c9c;transform:scaleX(0.9401);transform-origin:0 0;">Character</div>
<div style="position:absolute;left:1106px;top:150.4px;width:149px;height:1.5px;background:#181818;"></div>
<div class="t" style="left:1114px;top:157.9px;font-size:8.6px;line-height:10.6px;color:#9c9c9c;transform:scaleX(0.9461);transform-origin:0 0;">Paragraph</div>
<div style="position:absolute;left:1106px;top:172.4px;width:149px;height:1.5px;background:#181818;"></div>
<div class="t" style="left:1114px;top:179.9px;font-size:8.6px;line-height:10.6px;color:#9c9c9c;transform:scaleX(0.9539);transform-origin:0 0;">Tracker</div>
<div style="position:absolute;left:1106px;top:194.4px;width:149px;height:1.5px;background:#181818;"></div>
<div class="t" style="left:1114px;top:201.9px;font-size:8.6px;line-height:10.6px;color:#9c9c9c;transform:scaleX(0.9634);transform-origin:0 0;">Content-Aware Fill</div>
<div style="position:absolute;left:1106px;top:216.4px;width:149px;height:1.5px;background:#181818;"></div>
<div class="t" style="left:1114px;top:223.3px;font-size:8.6px;line-height:10.6px;color:#e2e2e2;transform:scaleX(0.9935);transform-origin:0 0;">Align</div>
<svg style="position:absolute;left:1241.4px;top:226px;" width="6.6" height="6" viewBox="0 0 6.6 6"><path d="M0 0.5H6.6M0 3H6.6M0 5.5H6.6" stroke="#d0d0d0" stroke-width="1"/></svg>
<div class="t" style="left:1109.6px;top:242.5px;font-size:8.6px;line-height:10.6px;color:#9a9a9a;transform:scaleX(0.9515);transform-origin:0 0;">Align Layers to:</div>
<div style="position:absolute;left:1173px;top:241px;width:81px;height:12.5px;background:#2a2a2a;border-radius:2px;"></div>
<div class="t" style="left:1178.6px;top:242.5px;font-size:8.6px;line-height:10.6px;color:#4c4c4c;transform:scaleX(0.9497);transform-origin:0 0;">Selection</div>
<svg style="position:absolute;left:1244px;top:245.5px;" width="6" height="4" viewBox="0 0 6 4"><path d="M0.5 0.6L3 3.2L5.5 0.6" fill="none" stroke="#444" stroke-width="1"/></svg>
<svg style="position:absolute;left:1112.4px;top:258.3px;" width="13" height="13" viewBox="0 0 13 13"><path d="M0.5 0V13" stroke="#474747" stroke-width="0.9"/><rect x="2" y="2" width="5.5" height="3.6" fill="#474747"/><rect x="2" y="7.2" width="9.5" height="3.6" fill="#474747"/></svg>
<svg style="position:absolute;left:1137.3px;top:258.3px;" width="13" height="13" viewBox="0 0 13 13"><path d="M6.5 0V13" stroke="#474747" stroke-width="0.9"/><rect x="3.8" y="2" width="5.5" height="3.6" fill="#474747"/><rect x="1.8" y="7.2" width="9.5" height="3.6" fill="#474747"/></svg>
<svg style="position:absolute;left:1163.2px;top:258.3px;" width="13" height="13" viewBox="0 0 13 13"><path d="M12.5 0V13" stroke="#474747" stroke-width="0.9"/><rect x="5.5" y="2" width="5.5" height="3.6" fill="#474747"/><rect x="1.5" y="7.2" width="9.5" height="3.6" fill="#474747"/></svg>
<svg style="position:absolute;left:1188.1px;top:258.3px;" width="13" height="13" viewBox="0 0 13 13"><path d="M0 0.5H13" stroke="#474747" stroke-width="0.9"/><rect x="2" y="2" width="3.6" height="9.5" fill="#474747"/><rect x="7.2" y="2" width="3.6" height="5.5" fill="#474747"/></svg>
<svg style="position:absolute;left:1212.8px;top:258.3px;" width="13" height="13" viewBox="0 0 13 13"><path d="M0 6.5H13" stroke="#474747" stroke-width="0.9"/><rect x="2" y="1.8" width="3.6" height="9.5" fill="#474747"/><rect x="7.2" y="3.8" width="3.6" height="5.5" fill="#474747"/></svg>
<svg style="position:absolute;left:1237.5px;top:258.3px;" width="13" height="13" viewBox="0 0 13 13"><path d="M0 12.5H13" stroke="#474747" stroke-width="0.9"/><rect x="2" y="1.5" width="3.6" height="9.5" fill="#474747"/><rect x="7.2" y="5.5" width="3.6" height="5.5" fill="#474747"/></svg>
<div style="position:absolute;left:1109px;top:275px;width:143px;height:1px;background:#303030;"></div>
<div class="t" style="left:1109.6px;top:277.7px;font-size:8.6px;line-height:10.6px;color:#9a9a9a;transform:scaleX(0.9624);transform-origin:0 0;">Distribute Layers:</div>
<svg style="position:absolute;left:1112.8px;top:289.8px;" width="13" height="13" viewBox="0 0 13 13"><path d="M0 0.5H13M0 7.5H13" stroke="#474747" stroke-width="0.9"/><rect x="3.5" y="1.8" width="6" height="3" fill="#474747"/><rect x="2" y="8.8" width="9" height="3.4" fill="#474747"/></svg>
<svg style="position:absolute;left:1137.7px;top:289.8px;" width="13" height="13" viewBox="0 0 13 13"><path d="M0 3.2H13M0 9.8H13" stroke="#474747" stroke-width="0.9"/><rect x="3.5" y="1.6" width="6" height="3.2" rx="0.5" fill="#474747"/><rect x="2" y="8.2" width="9" height="3.2" rx="0.5" fill="#474747"/></svg>
<svg style="position:absolute;left:1162.5px;top:289.8px;" width="13" height="13" viewBox="0 0 13 13"><path d="M0 5.2H13M0 12.5H13" stroke="#474747" stroke-width="0.9"/><rect x="3.5" y="1.5" width="6" height="3" fill="#474747"/><rect x="2" y="8" width="9" height="3.4" fill="#474747"/></svg>
<svg style="position:absolute;left:1188.1px;top:289.8px;" width="13" height="13" viewBox="0 0 13 13"><path d="M0.5 0V13M7.5 0V13" stroke="#474747" stroke-width="0.9"/><rect x="1.8" y="2.5" width="3.4" height="8.5" fill="#474747"/><rect x="8.8" y="4" width="3" height="5.5" fill="#474747"/></svg>
<svg style="position:absolute;left:1212.8px;top:289.8px;" width="13" height="13" viewBox="0 0 13 13"><path d="M3.2 0V13M9.8 0V13" stroke="#474747" stroke-width="0.9"/><rect x="1.6" y="2.3" width="3.2" height="8.5" rx="0.5" fill="#474747"/><rect x="8.2" y="3.8" width="3.2" height="5.5" rx="0.5" fill="#474747"/></svg>
<svg style="position:absolute;left:1237.5px;top:289.8px;" width="13" height="13" viewBox="0 0 13 13"><path d="M5.5 0V13M12.5 0V13" stroke="#474747" stroke-width="0.9"/><rect x="1.5" y="2.5" width="3.4" height="8.5" fill="#474747"/><rect x="8.5" y="4" width="3" height="5.5" fill="#474747"/></svg>
<!-- timeline -->
<div style="position:absolute;left:15px;top:497.5px;width:1250px;height:21px;background:#232323;"></div>
<div class="t" style="left:15px;top:502.3px;font-size:8.6px;line-height:10.6px;color:#9a9a9a;transform:scaleX(0.9104);transform-origin:0 0;">der Queue</div>
<div style="position:absolute;left:93.0px;top:502.8px;width:7.6px;height:7.6px;background:#c9ab7e;"></div>
<div class="t" style="left:109.7px;top:502.3px;font-size:8.6px;line-height:10.6px;color:#9a9a9a;transform:scaleX(0.9170);transform-origin:0 0;">Comp 01</div>
<div style="position:absolute;left:182.6px;top:502.8px;width:7.6px;height:7.6px;background:#c9ab7e;"></div>
<div class="t" style="left:199.3px;top:502.3px;font-size:8.6px;line-height:10.6px;color:#9a9a9a;transform:scaleX(0.9170);transform-origin:0 0;">Comp 03</div>
<div style="position:absolute;left:272.2px;top:502.8px;width:7.6px;height:7.6px;background:#c9ab7e;"></div>
<div class="t" style="left:288.9px;top:502.3px;font-size:8.6px;line-height:10.6px;color:#9a9a9a;transform:scaleX(0.9170);transform-origin:0 0;">Comp 04</div>
<div style="position:absolute;left:361.9px;top:502.8px;width:7.6px;height:7.6px;background:#c9ab7e;"></div>
<div class="t" style="left:378.6px;top:502.3px;font-size:8.6px;line-height:10.6px;color:#9a9a9a;transform:scaleX(0.9170);transform-origin:0 0;">Comp 05</div>
<div style="position:absolute;left:451.5px;top:502.8px;width:7.6px;height:7.6px;background:#c9ab7e;"></div>
<div class="t" style="left:468.2px;top:502.3px;font-size:8.6px;line-height:10.6px;color:#9a9a9a;transform:scaleX(0.9170);transform-origin:0 0;">Comp 06</div>
<div style="position:absolute;left:541.1px;top:502.8px;width:7.6px;height:7.6px;background:#c9ab7e;"></div>
<div class="t" style="left:557.8px;top:502.3px;font-size:8.6px;line-height:10.6px;color:#9a9a9a;transform:scaleX(0.9170);transform-origin:0 0;">Comp 07</div>
<div style="position:absolute;left:630.7px;top:502.8px;width:7.6px;height:7.6px;background:#c9ab7e;"></div>
<div class="t" style="left:647.4px;top:502.3px;font-size:8.6px;line-height:10.6px;color:#9a9a9a;transform:scaleX(0.9170);transform-origin:0 0;">Comp 08</div>
<div style="position:absolute;left:720.3px;top:502.8px;width:7.6px;height:7.6px;background:#c9ab7e;"></div>
<div class="t" style="left:737.0px;top:502.3px;font-size:8.6px;line-height:10.6px;color:#9a9a9a;transform:scaleX(0.9170);transform-origin:0 0;">Comp 13</div>
<div style="position:absolute;left:810.0px;top:502.8px;width:7.6px;height:7.6px;background:#c9ab7e;"></div>
<div class="t" style="left:826.7px;top:502.3px;font-size:8.6px;line-height:10.6px;color:#9a9a9a;transform:scaleX(0.9170);transform-origin:0 0;">Comp 14</div>
<div style="position:absolute;left:899.8px;top:502.8px;width:7.6px;height:7.6px;background:#c9ab7e;"></div>
<div class="t" style="left:916.5px;top:502.3px;font-size:8.6px;line-height:10.6px;color:#9a9a9a;transform:scaleX(0.9370);transform-origin:0 0;">comp-06_bpone-ac_tablet-connect-card-phone</div>
<svg style="position:absolute;left:1115.5px;top:505.5px;" width="4.2" height="4.2" viewBox="0 0 4.2 4.2"><path d="M0.3 0.3L3.9 3.9M3.9 0.3L0.3 3.9" stroke="#8c8c8c" stroke-width="0.9"/></svg>
<div style="position:absolute;left:1126px;top:502.8px;width:7.6px;height:7.6px;background:#c9ab7e;"></div>
<div class="t" style="left:1142.5px;top:502.3px;font-size:8.6px;line-height:10.6px;color:#d2d2d2;transform:scaleX(0.9375);transform-origin:0 0;">bpone_search+print</div>
<svg style="position:absolute;left:1222.5px;top:504.5px;" width="6.5" height="6" viewBox="0 0 6.5 6"><path d="M0 0.5H6.5M0 3H6.5M0 5.5H6.5" stroke="#9a9a9a" stroke-width="1"/></svg>
<div style="position:absolute;left:1115px;top:514.5px;width:113px;height:1.7px;background:#cdcdcd;"></div>
<div style="position:absolute;left:1235.5px;top:500px;width:1px;height:15px;background:#2e2e2e;"></div>
<svg style="position:absolute;left:1254px;top:503.5px;" width="8" height="7" viewBox="0 0 8 7"><path d="M0.7 0.5L3.5 3.5L0.7 6.5M4.5 0.5L7.3 3.5L4.5 6.5" fill="none" stroke="#c8c8c8" stroke-width="1.2"/></svg>
<div style="position:absolute;left:15px;top:518.5px;width:446.5px;height:25.5px;background:#232323;"></div>
<div class="t" style="left:27px;top:519.59px;font-size:11.2px;line-height:13.2px;color:#2f8ceb;font-weight:bold;transform:scaleX(0.9946);transform-origin:0 0;">0:00:08:02</div>
<div class="t" style="left:23px;top:531.8px;font-size:8.6px;line-height:10.6px;color:#215e9f;transform:scaleX(0.8900);transform-origin:0 0;">00242 (30.00 fps)</div>
<div style="position:absolute;left:93.5px;top:523px;width:245px;height:14px;background:#161616;border-radius:2px;box-shadow:0 0 0 0.5px #2c2c2c;"></div>
<svg style="position:absolute;left:98px;top:525.5px;" width="13" height="9" viewBox="0 0 13 9"><circle cx="5.6" cy="3.4" r="2.6" fill="none" stroke="#c0c0c0" stroke-width="1.1"/><path d="M3.8 5.2L0.6 8.4" stroke="#c0c0c0" stroke-width="1.3"/><path d="M9 5.5H12.4L10.7 7.4Z" fill="#c0c0c0"/></svg>
<svg style="position:absolute;left:350.5px;top:526px;" width="12" height="9" viewBox="0 0 12 9"><rect x="0" y="0.6" width="3.4" height="2" fill="#c8c8c8"/><path d="M3.4 1.6H7.2M5.2 1.6V6.6H8" stroke="#c8c8c8" stroke-width="0.8" fill="none"/><rect x="6.6" y="2.8" width="3" height="1.8" fill="#c8c8c8"/><rect x="7.6" y="5.6" width="3" height="1.8" fill="#c8c8c8"/><path d="M8.6 8L11.4 8L10 9.4Z" fill="#c8c8c8"/></svg>
<svg style="position:absolute;left:374.5px;top:525px;" width="12" height="10" viewBox="0 0 12 10"><path d="M6 0.3L9.2 2V4.6H2.8V2Z" fill="#c8c8c8"/><path d="M0.3 6.2L2.6 4.6H9.4L11.7 6.2V9.4H0.3Z" fill="#9a9a9a"/><path d="M6 2V9.4M0.3 6.4H11.7" stroke="#232323" stroke-width="0.7"/></svg>
<svg style="position:absolute;left:394.5px;top:524.5px;" width="11" height="11" viewBox="0 0 11 11"><rect x="0.3" y="3" width="7.4" height="7.6" fill="#8a8a8a"/><rect x="1.8" y="1.5" width="7.4" height="7.6" fill="#a8a8a8"/><rect x="3.3" y="0.2" width="7.4" height="7.4" fill="#c8c8c8"/><rect x="5.4" y="3" width="3.2" height="1.4" fill="#333"/></svg>
<svg style="position:absolute;left:413px;top:524px;" width="12" height="12" viewBox="0 0 10 10"><g transform="rotate(-38 5 5)"><rect x="0.2" y="2.2" width="9.6" height="5.6" rx="2.8" fill="#2f8ceb"/><path d="M2.4 2.4V7.6M3.9 2.3V7.7" stroke="#2b2b2b" stroke-width="0.6"/></g></svg>
<svg style="position:absolute;left:438px;top:524.5px;" width="12" height="11" viewBox="0 0 12 11"><rect x="0.6" y="1.4" width="10.8" height="9" rx="1.2" fill="none" stroke="#c8c8c8" stroke-width="1"/><path d="M3 0.4V2M9 0.4V2" stroke="#c8c8c8" stroke-width="1"/><path d="M1.2 3C5 3.4 5.4 9.4 10.8 9.8" fill="none" stroke="#c8c8c8" stroke-width="0.9"/></svg>
<div style="position:absolute;left:15px;top:543.5px;width:446.5px;height:1.3px;background:#161616;"></div>
<div style="position:absolute;left:15px;top:544.8px;width:446.5px;height:12.4px;background:#232323;"></div>
<div style="position:absolute;left:15px;top:556.8px;width:446.5px;height:1px;background:#161616;"></div>
<svg style="position:absolute;left:19.5px;top:548px;" width="9" height="6" viewBox="0 0 9 6"><path d="M0.2 3C2 -0.1 7 -0.1 8.8 3C7 6.1 2 6.1 0.2 3Z" fill="#c8c8c8"/><circle cx="4.5" cy="3" r="1.45" fill="#1f1f1f"/></svg>
<svg style="position:absolute;left:30.8px;top:546.5px;" width="9" height="9" viewBox="0 0 9 9"><path d="M0.4 3H2.2L4.6 0.6V8.4L2.2 6H0.4Z" fill="#c8c8c8"/><path d="M5.6 1A4 4 0 0 1 5.6 8" fill="#8a8a8a" stroke="#c8c8c8" stroke-width="0.9"/></svg>
<svg style="position:absolute;left:43.2px;top:548.2px;" width="5.6" height="5.6" viewBox="0 0 5.6 5.6"><circle cx="2.8" cy="2.8" r="2.8" fill="#c8c8c8"/></svg>
<svg style="position:absolute;left:53.3px;top:546.0px;" width="7" height="9" viewBox="0 0 7 9"><rect x="0" y="3.8" width="7" height="5" rx="0.7" fill="#d8d8d8"/><path d="M1.5 3.8V2.6A2 2 0 0 1 5.5 2.6V3.8" fill="none" stroke="#d8d8d8" stroke-width="1.1"/><rect x="3" y="5.4" width="1" height="2" fill="#222"/></svg>
<div style="position:absolute;left:65.3px;top:546px;width:1px;height:10px;background:#353535;"></div>
<svg style="position:absolute;left:75px;top:546px;" width="10" height="10" viewBox="0 0 10 10"><path d="M0.6 2.6L3.4 0.4L9.6 6.2L6 9.8L0.6 4.6Z" fill="#c8c8c8"/><circle cx="2.6" cy="2.8" r="0.8" fill="#232323"/></svg>
<div style="position:absolute;left:88.6px;top:546px;width:1px;height:10px;background:#353535;"></div>
<div class="t" style="left:93.5px;top:547.41px;font-size:6.2px;line-height:8.2px;color:#858585;font-style:italic;">#</div>
<div style="position:absolute;left:113.3px;top:546px;width:1px;height:10px;background:#353535;"></div>
<div class="t" style="left:117px;top:546.81px;font-size:7.5px;line-height:9.5px;color:#9a9a9a;transform:scaleX(0.9057);transform-origin:0 0;">Layer Name</div>
<div style="position:absolute;left:263.4px;top:546px;width:1px;height:10px;background:#353535;"></div>
<svg style="position:absolute;left:267.3px;top:547.2px;" width="8.4" height="7.5" viewBox="0 0 9 8"><path d="M1.6 3.6A2.9 3 0 0 1 7.4 3.6Z" fill="#c8c8c8"/><path d="M0 4.3H9" stroke="#c8c8c8" stroke-width="0.9"/><path d="M2.6 4.6V7.6M4.5 4.6V7.2M6.4 4.6V7.6" stroke="#c8c8c8" stroke-width="1"/><path d="M0.3 7.4H2.6M6.4 7.4H8.7" stroke="#c8c8c8" stroke-width="0.8"/></svg>
<svg style="position:absolute;left:278.8px;top:547.1px;" width="7.8" height="7.8" viewBox="0 0 9 9"><circle cx="4.5" cy="4.5" r="2.1" fill="none" stroke="#c8c8c8" stroke-width="1.1"/><path d="M4.5 0V2M4.5 7V9M0 4.5H2M7 4.5H9M1.3 1.3L2.6 2.6M6.4 6.4L7.7 7.7M7.7 1.3L6.4 2.6M1.3 7.7L2.6 6.4" stroke="#c8c8c8" stroke-width="1"/></svg>
<svg style="position:absolute;left:289.7px;top:547px;" width="8" height="8" viewBox="0 0 8 8"><path d="M0.5 0.5L7.5 7.5" stroke="#c8c8c8" stroke-width="1.1"/></svg>
<div class="t" style="left:300.6px;top:546.01px;font-size:9px;line-height:11px;color:#c8c8c8;transform:scaleX(1.1428);transform-origin:0 0;font-style:italic;font-family:Liberation Serif,serif;">fx</div>
<svg style="position:absolute;left:310.6px;top:546.8px;" width="9.4" height="8.4" viewBox="0 0 9.4 8.4"><rect x="0" y="1.6" width="7.6" height="6.8" fill="#8c8c8c"/><rect x="1.4" y="0" width="8" height="7" fill="#c8c8c8"/><rect x="4" y="2.8" width="3" height="1.2" fill="#444"/></svg>
<svg style="position:absolute;left:321.9px;top:546px;" width="10" height="10" viewBox="0 0 10 10"><g transform="rotate(-38 5 5)"><rect x="0.2" y="2.2" width="9.6" height="5.6" rx="2.8" fill="#b4b4b4"/><path d="M2.4 2.4V7.6M3.9 2.3V7.7" stroke="#2b2b2b" stroke-width="0.6"/></g></svg>
<svg style="position:absolute;left:333.5px;top:546.8px;" width="8.4" height="8.4" viewBox="0 0 8.4 8.4"><circle cx="4.2" cy="4.2" r="3.7" fill="#c8c8c8"/><path d="M1.6 6.8A3.7 3.7 0 0 1 6.8 1.6Z" fill="#2a2a2a"/></svg>
<svg style="position:absolute;left:344.5px;top:546.8px;" width="8.4" height="8.4" viewBox="0 0 8.4 8.4"><circle cx="4.2" cy="4.2" r="3.7" fill="none" stroke="#c8c8c8" stroke-width="1"/><path d="M4.2 2L6.2 3.1V5.3L4.2 6.4L2.2 5.3V3.1ZM2.2 3.1L4.2 4.2L6.2 3.1M4.2 4.2V6.4" fill="none" stroke="#c8c8c8" stroke-width="0.7"/></svg>
<div style="position:absolute;left:363.5px;top:546px;width:1px;height:10px;background:#353535;"></div>
<div class="t" style="left:368px;top:546.81px;font-size:7.5px;line-height:9.5px;color:#9a9a9a;transform:scaleX(0.8884);transform-origin:0 0;">Parent &amp; Link</div>
<div style="position:absolute;left:449px;top:546px;width:1px;height:10px;background:#353535;"></div>
<div style="position:absolute;left:15px;top:557.5px;width:446.5px;height:12.450000000000045px;background:#2b2b2b;"></div>
<div style="position:absolute;left:15px;top:569.35px;width:446.5px;height:0.7px;background:#242424;"></div>
<div style="position:absolute;left:19px;top:558.3px;width:9.8px;height:10.650000000000045px;background:#202020;"></div>
<div style="position:absolute;left:41.2px;top:558.3px;width:9.8px;height:10.650000000000045px;background:#202020;"></div>
<svg style="position:absolute;left:19.5px;top:560.825px;" width="9" height="6" viewBox="0 0 9 6"><path d="M0.2 3C2 -0.1 7 -0.1 8.8 3C7 6.1 2 6.1 0.2 3Z" fill="#c8c8c8"/><circle cx="4.5" cy="3" r="1.45" fill="#1f1f1f"/></svg>
<svg style="position:absolute;left:53.3px;top:559.0250000000001px;" width="7" height="9" viewBox="0 0 7 9"><rect x="0" y="3.8" width="7" height="5" rx="0.7" fill="#d8d8d8"/><path d="M1.5 3.8V2.6A2 2 0 0 1 5.5 2.6V3.8" fill="none" stroke="#d8d8d8" stroke-width="1.1"/><rect x="3" y="5.4" width="1" height="2" fill="#222"/></svg>
<svg style="position:absolute;left:69.5px;top:561.825px;" width="7" height="5" viewBox="0 0 7 5"><path d="M0.6 0.8L3.5 3.8L6.4 0.8" fill="none" stroke="#a0a0a0" stroke-width="1.1"/></svg>
<div style="position:absolute;left:78.2px;top:559.1px;width:8.9px;height:9.050000000000045px;background:#a8593a;"></div>
<div class="t" style="left:94px;top:558.82px;font-size:8.6px;line-height:10.6px;color:#c4c4c4;transform:scaleX(0.9408);transform-origin:0 0;">14</div>
<svg style="position:absolute;left:116.2px;top:558.825px;" width="9" height="10" viewBox="0 0 9 10"><rect x="0.4" y="0.4" width="8.2" height="9.2" rx="1.2" fill="#2a0b02" stroke="#8a3c08" stroke-width="0.8"/><path d="M4.5 1.6L6.8 6H5.4L4.5 4.2L3.6 6H2.2Z" fill="#ff9a1f"/><path d="M4.5 2.8L5.6 5.4H3.4Z" fill="#ffd24a"/><rect x="3.6" y="6.8" width="1.8" height="1.6" fill="#e8b9a0"/></svg>
<svg style="position:absolute;left:127.2px;top:558.825px;" width="10" height="10" viewBox="0 0 10 10"><rect x="0.7" y="0.7" width="8.6" height="8.6" rx="1.3" fill="#3a3a3a" stroke="#a2a2a2" stroke-width="1.4"/><path d="M3 3H4.2M5.8 3H7M3 7H4.2M5.8 7H7M3 4.4V5.6M7 4.4V5.6" stroke="#8e8e8e" stroke-width="0.9"/><circle cx="5" cy="5" r="0.9" fill="#777"/></svg>
<div class="t" style="left:141.5px;top:558.82px;font-size:8.6px;line-height:10.6px;color:#d0d0d0;transform:scaleX(0.9859);transform-origin:0 0;">Card Holder Data - Front</div>
<div style="position:absolute;left:267px;top:558.3px;width:9.4px;height:10.650000000000045px;background:#202020;"></div>
<svg style="position:absolute;left:267.3px;top:560.0250000000001px;" width="8.4" height="7.5" viewBox="0 0 9 8"><path d="M1.6 3.6A2.9 3 0 0 1 7.4 3.6Z" fill="#c8c8c8"/><path d="M0 4.3H9" stroke="#c8c8c8" stroke-width="0.9"/><path d="M2.6 4.6V7.6M4.5 4.6V7.2M6.4 4.6V7.6" stroke="#c8c8c8" stroke-width="1"/><path d="M0.3 7.4H2.6M6.4 7.4H8.7" stroke="#c8c8c8" stroke-width="0.8"/></svg>
<div style="position:absolute;left:278.3px;top:558.3px;width:9px;height:10.650000000000045px;background:#202020;"></div>
<svg style="position:absolute;left:278.8px;top:559.9250000000001px;" width="7.8" height="7.8" viewBox="0 0 9 9"><circle cx="4.5" cy="4.5" r="2.1" fill="none" stroke="#c8c8c8" stroke-width="1.1"/><path d="M4.5 0V2M4.5 7V9M0 4.5H2M7 4.5H9M1.3 1.3L2.6 2.6M6.4 6.4L7.7 7.7M7.7 1.3L6.4 2.6M1.3 7.7L2.6 6.4" stroke="#c8c8c8" stroke-width="1"/></svg>
<div style="position:absolute;left:289px;top:558.3px;width:9.6px;height:10.650000000000045px;background:#202020;"></div>
<svg style="position:absolute;left:289.9px;top:559.825px;" width="8" height="8" viewBox="0 0 8 8"><path d="M0.5 7.5L7.5 0.5" stroke="#c8c8c8" stroke-width="1.2"/></svg>
<svg style="position:absolute;left:321.9px;top:558.825px;" width="10" height="10" viewBox="0 0 10 10"><g transform="rotate(-38 5 5)"><rect x="0.2" y="2.2" width="9.6" height="5.6" rx="2.8" fill="#979797"/><path d="M2.4 2.4V7.6M3.9 2.3V7.7" stroke="#2b2b2b" stroke-width="0.6"/></g></svg>
<div style="position:absolute;left:333px;top:558.3px;width:9.6px;height:10.650000000000045px;background:#202020;"></div>
<div style="position:absolute;left:344px;top:558.3px;width:9.2px;height:10.650000000000045px;background:#202020;"></div>
<svg style="position:absolute;left:367.3px;top:559.225px;" width="9.2" height="9.2" viewBox="0 0 9.2 9.2"><path d="M3.71 4.46L3.62 4.74L3.62 5.06L3.73 5.39L3.95 5.69L4.27 5.92L4.68 6.05L5.13 6.05L5.58 5.90L6.00 5.61L6.32 5.19L6.51 4.67L6.53 4.08L6.37 3.49L6.03 2.95L5.53 2.52L4.89 2.25L4.17 2.18L3.44 2.33L2.76 2.70L2.21 3.27L1.84 4.01L1.69 4.85L1.81 5.73L2.19 6.55L2.82 7.25L3.64 7.74L4.60 7.97L5.61 7.92L6.59 7.55L7.44 6.90L8.07 6.00L8.42 4.93L8.44 3.78L8.11 2.65L7.45 1.64L6.51 0.86" fill="none" stroke="#9e9e9e" stroke-width="1.05" stroke-linecap="round"/></svg>
<div style="position:absolute;left:382px;top:558.3px;width:64.5px;height:10.650000000000045px;background:#202020;"></div>
<div class="t" style="left:387px;top:558.82px;font-size:8.6px;line-height:10.6px;color:#c4c4c4;transform:scaleX(0.9047);transform-origin:0 0;">None</div>
<svg style="position:absolute;left:437.5px;top:561.825px;" width="6" height="4" viewBox="0 0 6 4"><path d="M0.5 0.6L3 3.2L5.5 0.6" fill="none" stroke="#b8b8b8" stroke-width="1"/></svg>
<div style="position:absolute;left:15px;top:569.95px;width:446.5px;height:12.449999999999932px;background:#232323;"></div>
<svg style="position:absolute;left:21px;top:573.0749999999999px;" width="5.4" height="6.4" viewBox="0 0 5.4 6.4"><path d="M5.2 0.2V6.2L0.4 3.2Z" fill="#c8c8c8"/></svg>
<svg style="position:absolute;left:31px;top:572.675px;" width="7.2" height="7.2" viewBox="0 0 7.2 7.2"><path d="M3.6 0.5L6.7 3.6L3.6 6.7L0.5 3.6Z" fill="none" stroke="#c8c8c8" stroke-width="0.9"/></svg>
<svg style="position:absolute;left:43.6px;top:573.0749999999999px;" width="5.4" height="6.4" viewBox="0 0 5.4 6.4"><path d="M0.2 0.2V6.2L5 3.2Z" fill="#505050"/></svg>
<div style="position:absolute;left:96.3px;top:576.275px;width:0.8px;height:0.8px;background:#3c3c3c;"></div>
<div style="position:absolute;left:103.6px;top:570.5500000000001px;width:11px;height:11.049999999999931px;background:#1f1f1f;"></div>
<svg style="position:absolute;left:104.5px;top:570.5749999999999px;" width="9" height="11" viewBox="0 0 9 11"><circle cx="4.5" cy="6.2" r="3.6" fill="none" stroke="#2f8ceb" stroke-width="1.2"/><path d="M3.2 1H5.8M4.5 1V2.6M4.5 6.2L6.4 4.3" stroke="#2f8ceb" stroke-width="1.1" fill="none"/></svg>
<svg style="position:absolute;left:117.8px;top:572.275px;" width="9" height="8" viewBox="0 0 9 8"><path d="M0.6 0V7.2H8.4" fill="none" stroke="#c8c8c8" stroke-width="1.2"/><path d="M2.2 2.4L4.2 5.4L7.4 1.8" fill="none" stroke="#c8c8c8" stroke-width="1.2"/></svg>
<div class="t" style="left:133px;top:571.67px;font-size:8.6px;line-height:10.6px;color:#b8b8b8;transform:scaleX(0.9642);transform-origin:0 0;">Position</div>
<div class="t" style="left:267.8px;top:571.27px;font-size:8.6px;line-height:10.6px;color:#2f8ceb;transform:scaleX(0.8574);transform-origin:0 0;">960.0 ,930.8</div>
<svg style="position:absolute;left:376.8px;top:571.675px;" width="9.2" height="9.2" viewBox="0 0 9.2 9.2"><path d="M3.71 4.46L3.62 4.74L3.62 5.06L3.73 5.39L3.95 5.69L4.27 5.92L4.68 6.05L5.13 6.05L5.58 5.90L6.00 5.61L6.32 5.19L6.51 4.67L6.53 4.08L6.37 3.49L6.03 2.95L5.53 2.52L4.89 2.25L4.17 2.18L3.44 2.33L2.76 2.70L2.21 3.27L1.84 4.01L1.69 4.85L1.81 5.73L2.19 6.55L2.82 7.25L3.64 7.74L4.60 7.97L5.61 7.92L6.59 7.55L7.44 6.90L8.07 6.00L8.42 4.93L8.44 3.78L8.11 2.65L7.45 1.64L6.51 0.86" fill="none" stroke="#9e9e9e" stroke-width="1.05" stroke-linecap="round"/></svg>
<div style="position:absolute;left:15px;top:582.4px;width:446.5px;height:12.450000000000045px;background:#2b2b2b;"></div>
<div style="position:absolute;left:15px;top:594.25px;width:446.5px;height:0.7px;background:#242424;"></div>
<div style="position:absolute;left:19px;top:583.1999999999999px;width:9.8px;height:10.650000000000045px;background:#202020;"></div>
<div style="position:absolute;left:41.2px;top:583.1999999999999px;width:9.8px;height:10.650000000000045px;background:#202020;"></div>
<div style="position:absolute;left:52px;top:583.1999999999999px;width:9.8px;height:10.650000000000045px;background:#202020;"></div>
<svg style="position:absolute;left:19.5px;top:585.725px;" width="9" height="6" viewBox="0 0 9 6"><path d="M0.2 3C2 -0.1 7 -0.1 8.8 3C7 6.1 2 6.1 0.2 3Z" fill="#c8c8c8"/><circle cx="4.5" cy="3" r="1.45" fill="#1f1f1f"/></svg>
<svg style="position:absolute;left:69.5px;top:586.725px;" width="7" height="5" viewBox="0 0 7 5"><path d="M0.6 0.8L3.5 3.8L6.4 0.8" fill="none" stroke="#a0a0a0" stroke-width="1.1"/></svg>
<div style="position:absolute;left:78.2px;top:584.0px;width:8.9px;height:9.050000000000045px;background:#a8593a;"></div>
<div class="t" style="left:94px;top:583.72px;font-size:8.6px;line-height:10.6px;color:#c4c4c4;transform:scaleX(0.9408);transform-origin:0 0;">15</div>
<svg style="position:absolute;left:116.2px;top:583.725px;" width="9" height="10" viewBox="0 0 9 10"><rect x="0.4" y="0.4" width="8.2" height="9.2" rx="1.2" fill="#2a0b02" stroke="#8a3c08" stroke-width="0.8"/><path d="M4.5 1.6L6.8 6H5.4L4.5 4.2L3.6 6H2.2Z" fill="#ff9a1f"/><path d="M4.5 2.8L5.6 5.4H3.4Z" fill="#ffd24a"/><rect x="3.6" y="6.8" width="1.8" height="1.6" fill="#e8b9a0"/></svg>
<svg style="position:absolute;left:127.2px;top:583.725px;" width="10" height="10" viewBox="0 0 10 10"><rect x="0.7" y="0.7" width="8.6" height="8.6" rx="1.3" fill="#3a3a3a" stroke="#a2a2a2" stroke-width="1.4"/><path d="M3 3H4.2M5.8 3H7M3 7H4.2M5.8 7H7M3 4.4V5.6M7 4.4V5.6" stroke="#8e8e8e" stroke-width="0.9"/><circle cx="5" cy="5" r="0.9" fill="#777"/></svg>
<div class="t" style="left:141.5px;top:583.72px;font-size:8.6px;line-height:10.6px;color:#d0d0d0;transform:scaleX(0.9404);transform-origin:0 0;">Scroll Bar 2</div>
<div style="position:absolute;left:267px;top:583.1999999999999px;width:9.4px;height:10.650000000000045px;background:#202020;"></div>
<svg style="position:absolute;left:267.3px;top:584.9250000000001px;" width="8.4" height="7.5" viewBox="0 0 9 8"><path d="M1.6 3.6A2.9 3 0 0 1 7.4 3.6Z" fill="#c8c8c8"/><path d="M0 4.3H9" stroke="#c8c8c8" stroke-width="0.9"/><path d="M2.6 4.6V7.6M4.5 4.6V7.2M6.4 4.6V7.6" stroke="#c8c8c8" stroke-width="1"/><path d="M0.3 7.4H2.6M6.4 7.4H8.7" stroke="#c8c8c8" stroke-width="0.8"/></svg>
<div style="position:absolute;left:278.3px;top:583.1999999999999px;width:9px;height:10.650000000000045px;background:#202020;"></div>
<svg style="position:absolute;left:278.8px;top:584.825px;" width="7.8" height="7.8" viewBox="0 0 9 9"><circle cx="4.5" cy="4.5" r="2.1" fill="none" stroke="#c8c8c8" stroke-width="1.1"/><path d="M4.5 0V2M4.5 7V9M0 4.5H2M7 4.5H9M1.3 1.3L2.6 2.6M6.4 6.4L7.7 7.7M7.7 1.3L6.4 2.6M1.3 7.7L2.6 6.4" stroke="#c8c8c8" stroke-width="1"/></svg>
<div style="position:absolute;left:289px;top:583.1999999999999px;width:9.6px;height:10.650000000000045px;background:#202020;"></div>
<svg style="position:absolute;left:289.9px;top:584.725px;" width="8" height="8" viewBox="0 0 8 8"><path d="M0.5 7.5L7.5 0.5" stroke="#c8c8c8" stroke-width="1.2"/></svg>
<svg style="position:absolute;left:321.9px;top:583.725px;" width="10" height="10" viewBox="0 0 10 10"><g transform="rotate(-38 5 5)"><rect x="0.2" y="2.2" width="9.6" height="5.6" rx="2.8" fill="#979797"/><path d="M2.4 2.4V7.6M3.9 2.3V7.7" stroke="#2b2b2b" stroke-width="0.6"/></g></svg>
<div style="position:absolute;left:333px;top:583.1999999999999px;width:9.6px;height:10.650000000000045px;background:#202020;"></div>
<div style="position:absolute;left:344px;top:583.1999999999999px;width:9.2px;height:10.650000000000045px;background:#202020;"></div>
<svg style="position:absolute;left:367.3px;top:584.125px;" width="9.2" height="9.2" viewBox="0 0 9.2 9.2"><path d="M3.71 4.46L3.62 4.74L3.62 5.06L3.73 5.39L3.95 5.69L4.27 5.92L4.68 6.05L5.13 6.05L5.58 5.90L6.00 5.61L6.32 5.19L6.51 4.67L6.53 4.08L6.37 3.49L6.03 2.95L5.53 2.52L4.89 2.25L4.17 2.18L3.44 2.33L2.76 2.70L2.21 3.27L1.84 4.01L1.69 4.85L1.81 5.73L2.19 6.55L2.82 7.25L3.64 7.74L4.60 7.97L5.61 7.92L6.59 7.55L7.44 6.90L8.07 6.00L8.42 4.93L8.44 3.78L8.11 2.65L7.45 1.64L6.51 0.86" fill="none" stroke="#9e9e9e" stroke-width="1.05" stroke-linecap="round"/></svg>
<div style="position:absolute;left:382px;top:583.1999999999999px;width:64.5px;height:10.650000000000045px;background:#202020;"></div>
<div class="t" style="left:387px;top:583.72px;font-size:8.6px;line-height:10.6px;color:#c4c4c4;transform:scaleX(0.9047);transform-origin:0 0;">None</div>
<svg style="position:absolute;left:437.5px;top:586.725px;" width="6" height="4" viewBox="0 0 6 4"><path d="M0.5 0.6L3 3.2L5.5 0.6" fill="none" stroke="#b8b8b8" stroke-width="1"/></svg>
<div style="position:absolute;left:15px;top:594.85px;width:446.5px;height:12.449999999999932px;background:#232323;"></div>
<svg style="position:absolute;left:21px;top:597.975px;" width="5.4" height="6.4" viewBox="0 0 5.4 6.4"><path d="M5.2 0.2V6.2L0.4 3.2Z" fill="#c8c8c8"/></svg>
<svg style="position:absolute;left:31px;top:597.575px;" width="7.2" height="7.2" viewBox="0 0 7.2 7.2"><path d="M3.6 0.5L6.7 3.6L3.6 6.7L0.5 3.6Z" fill="none" stroke="#c8c8c8" stroke-width="0.9"/></svg>
<svg style="position:absolute;left:43.6px;top:597.975px;" width="5.4" height="6.4" viewBox="0 0 5.4 6.4"><path d="M0.2 0.2V6.2L5 3.2Z" fill="#c8c8c8"/></svg>
<div style="position:absolute;left:96.3px;top:601.1750000000001px;width:0.8px;height:0.8px;background:#3c3c3c;"></div>
<div style="position:absolute;left:103.6px;top:595.45px;width:11px;height:11.049999999999931px;background:#1f1f1f;"></div>
<svg style="position:absolute;left:104.5px;top:595.475px;" width="9" height="11" viewBox="0 0 9 11"><circle cx="4.5" cy="6.2" r="3.6" fill="none" stroke="#2f8ceb" stroke-width="1.2"/><path d="M3.2 1H5.8M4.5 1V2.6M4.5 6.2L6.4 4.3" stroke="#2f8ceb" stroke-width="1.1" fill="none"/></svg>
<svg style="position:absolute;left:117.8px;top:597.1750000000001px;" width="9" height="8" viewBox="0 0 9 8"><path d="M0.6 0V7.2H8.4" fill="none" stroke="#c8c8c8" stroke-width="1.2"/><path d="M2.2 2.4L4.2 5.4L7.4 1.8" fill="none" stroke="#c8c8c8" stroke-width="1.2"/></svg>
<div class="t" style="left:133px;top:596.57px;font-size:8.6px;line-height:10.6px;color:#b8b8b8;transform:scaleX(0.9642);transform-origin:0 0;">Position</div>
<div class="t" style="left:267.8px;top:596.17px;font-size:8.6px;line-height:10.6px;color:#2f8ceb;transform:scaleX(0.8563);transform-origin:0 0;">1149.7 ,603.1</div>
<svg style="position:absolute;left:376.8px;top:596.575px;" width="9.2" height="9.2" viewBox="0 0 9.2 9.2"><path d="M3.71 4.46L3.62 4.74L3.62 5.06L3.73 5.39L3.95 5.69L4.27 5.92L4.68 6.05L5.13 6.05L5.58 5.90L6.00 5.61L6.32 5.19L6.51 4.67L6.53 4.08L6.37 3.49L6.03 2.95L5.53 2.52L4.89 2.25L4.17 2.18L3.44 2.33L2.76 2.70L2.21 3.27L1.84 4.01L1.69 4.85L1.81 5.73L2.19 6.55L2.82 7.25L3.64 7.74L4.60 7.97L5.61 7.92L6.59 7.55L7.44 6.90L8.07 6.00L8.42 4.93L8.44 3.78L8.11 2.65L7.45 1.64L6.51 0.86" fill="none" stroke="#9e9e9e" stroke-width="1.05" stroke-linecap="round"/></svg>
<div style="position:absolute;left:15px;top:607.3px;width:446.5px;height:12.450000000000045px;background:#2b2b2b;"></div>
<div style="position:absolute;left:15px;top:619.15px;width:446.5px;height:0.7px;background:#242424;"></div>
<div style="position:absolute;left:19px;top:608.0999999999999px;width:9.8px;height:10.650000000000045px;background:#202020;"></div>
<div style="position:absolute;left:41.2px;top:608.0999999999999px;width:9.8px;height:10.650000000000045px;background:#202020;"></div>
<div style="position:absolute;left:52px;top:608.0999999999999px;width:9.8px;height:10.650000000000045px;background:#202020;"></div>
<svg style="position:absolute;left:19.5px;top:610.625px;" width="9" height="6" viewBox="0 0 9 6"><path d="M0.2 3C2 -0.1 7 -0.1 8.8 3C7 6.1 2 6.1 0.2 3Z" fill="#c8c8c8"/><circle cx="4.5" cy="3" r="1.45" fill="#1f1f1f"/></svg>
<svg style="position:absolute;left:69.5px;top:611.625px;" width="7" height="5" viewBox="0 0 7 5"><path d="M0.6 0.8L3.5 3.8L6.4 0.8" fill="none" stroke="#a0a0a0" stroke-width="1.1"/></svg>
<div style="position:absolute;left:78.2px;top:608.9px;width:8.9px;height:9.050000000000045px;background:#a8593a;"></div>
<div class="t" style="left:94px;top:608.62px;font-size:8.6px;line-height:10.6px;color:#c4c4c4;transform:scaleX(0.9408);transform-origin:0 0;">16</div>
<svg style="position:absolute;left:116.2px;top:608.625px;" width="9" height="10" viewBox="0 0 9 10"><rect x="0.4" y="0.4" width="8.2" height="9.2" rx="1.2" fill="#2a0b02" stroke="#8a3c08" stroke-width="0.8"/><path d="M4.5 1.6L6.8 6H5.4L4.5 4.2L3.6 6H2.2Z" fill="#ff9a1f"/><path d="M4.5 2.8L5.6 5.4H3.4Z" fill="#ffd24a"/><rect x="3.6" y="6.8" width="1.8" height="1.6" fill="#e8b9a0"/></svg>
<svg style="position:absolute;left:127.2px;top:608.625px;" width="10" height="10" viewBox="0 0 10 10"><rect x="0.7" y="0.7" width="8.6" height="8.6" rx="1.3" fill="#3a3a3a" stroke="#a2a2a2" stroke-width="1.4"/><path d="M3 3H4.2M5.8 3H7M3 7H4.2M5.8 7H7M3 4.4V5.6M7 4.4V5.6" stroke="#8e8e8e" stroke-width="0.9"/><circle cx="5" cy="5" r="0.9" fill="#777"/></svg>
<div class="t" style="left:141.5px;top:608.62px;font-size:8.6px;line-height:10.6px;color:#d0d0d0;transform:scaleX(0.9758);transform-origin:0 0;">Card Holder Data</div>
<div style="position:absolute;left:267px;top:608.0999999999999px;width:9.4px;height:10.650000000000045px;background:#202020;"></div>
<svg style="position:absolute;left:267.3px;top:609.825px;" width="8.4" height="7.5" viewBox="0 0 9 8"><path d="M1.6 3.6A2.9 3 0 0 1 7.4 3.6Z" fill="#c8c8c8"/><path d="M0 4.3H9" stroke="#c8c8c8" stroke-width="0.9"/><path d="M2.6 4.6V7.6M4.5 4.6V7.2M6.4 4.6V7.6" stroke="#c8c8c8" stroke-width="1"/><path d="M0.3 7.4H2.6M6.4 7.4H8.7" stroke="#c8c8c8" stroke-width="0.8"/></svg>
<div style="position:absolute;left:278.3px;top:608.0999999999999px;width:9px;height:10.650000000000045px;background:#202020;"></div>
<svg style="position:absolute;left:278.8px;top:609.725px;" width="7.8" height="7.8" viewBox="0 0 9 9"><circle cx="4.5" cy="4.5" r="2.1" fill="none" stroke="#c8c8c8" stroke-width="1.1"/><path d="M4.5 0V2M4.5 7V9M0 4.5H2M7 4.5H9M1.3 1.3L2.6 2.6M6.4 6.4L7.7 7.7M7.7 1.3L6.4 2.6M1.3 7.7L2.6 6.4" stroke="#c8c8c8" stroke-width="1"/></svg>
<div style="position:absolute;left:289px;top:608.0999999999999px;width:9.6px;height:10.650000000000045px;background:#202020;"></div>
<svg style="position:absolute;left:289.9px;top:609.625px;" width="8" height="8" viewBox="0 0 8 8"><path d="M0.5 7.5L7.5 0.5" stroke="#c8c8c8" stroke-width="1.2"/></svg>
<svg style="position:absolute;left:321.9px;top:608.625px;" width="10" height="10" viewBox="0 0 10 10"><g transform="rotate(-38 5 5)"><rect x="0.2" y="2.2" width="9.6" height="5.6" rx="2.8" fill="#979797"/><path d="M2.4 2.4V7.6M3.9 2.3V7.7" stroke="#2b2b2b" stroke-width="0.6"/></g></svg>
<div style="position:absolute;left:333px;top:608.0999999999999px;width:9.6px;height:10.650000000000045px;background:#202020;"></div>
<div style="position:absolute;left:344px;top:608.0999999999999px;width:9.2px;height:10.650000000000045px;background:#202020;"></div>
<svg style="position:absolute;left:367.3px;top:609.025px;" width="9.2" height="9.2" viewBox="0 0 9.2 9.2"><path d="M3.71 4.46L3.62 4.74L3.62 5.06L3.73 5.39L3.95 5.69L4.27 5.92L4.68 6.05L5.13 6.05L5.58 5.90L6.00 5.61L6.32 5.19L6.51 4.67L6.53 4.08L6.37 3.49L6.03 2.95L5.53 2.52L4.89 2.25L4.17 2.18L3.44 2.33L2.76 2.70L2.21 3.27L1.84 4.01L1.69 4.85L1.81 5.73L2.19 6.55L2.82 7.25L3.64 7.74L4.60 7.97L5.61 7.92L6.59 7.55L7.44 6.90L8.07 6.00L8.42 4.93L8.44 3.78L8.11 2.65L7.45 1.64L6.51 0.86" fill="none" stroke="#9e9e9e" stroke-width="1.05" stroke-linecap="round"/></svg>
<div style="position:absolute;left:382px;top:608.0999999999999px;width:64.5px;height:10.650000000000045px;background:#202020;"></div>
<div class="t" style="left:387px;top:608.62px;font-size:8.6px;line-height:10.6px;color:#c4c4c4;transform:scaleX(0.9047);transform-origin:0 0;">None</div>
<svg style="position:absolute;left:437.5px;top:611.625px;" width="6" height="4" viewBox="0 0 6 4"><path d="M0.5 0.6L3 3.2L5.5 0.6" fill="none" stroke="#b8b8b8" stroke-width="1"/></svg>
<div style="position:absolute;left:15px;top:619.75px;width:446.5px;height:12.450000000000045px;background:#232323;"></div>
<svg style="position:absolute;left:21px;top:622.875px;" width="5.4" height="6.4" viewBox="0 0 5.4 6.4"><path d="M5.2 0.2V6.2L0.4 3.2Z" fill="#c8c8c8"/></svg>
<svg style="position:absolute;left:31px;top:622.475px;" width="7.2" height="7.2" viewBox="0 0 7.2 7.2"><path d="M3.6 0.5L6.7 3.6L3.6 6.7L0.5 3.6Z" fill="none" stroke="#c8c8c8" stroke-width="0.9"/></svg>
<svg style="position:absolute;left:43.6px;top:622.875px;" width="5.4" height="6.4" viewBox="0 0 5.4 6.4"><path d="M0.2 0.2V6.2L5 3.2Z" fill="#c8c8c8"/></svg>
<div style="position:absolute;left:96.3px;top:626.075px;width:0.8px;height:0.8px;background:#3c3c3c;"></div>
<div style="position:absolute;left:103.6px;top:620.35px;width:11px;height:11.050000000000045px;background:#1f1f1f;"></div>
<svg style="position:absolute;left:104.5px;top:620.375px;" width="9" height="11" viewBox="0 0 9 11"><circle cx="4.5" cy="6.2" r="3.6" fill="none" stroke="#2f8ceb" stroke-width="1.2"/><path d="M3.2 1H5.8M4.5 1V2.6M4.5 6.2L6.4 4.3" stroke="#2f8ceb" stroke-width="1.1" fill="none"/></svg>
<svg style="position:absolute;left:117.8px;top:622.075px;" width="9" height="8" viewBox="0 0 9 8"><path d="M0.6 0V7.2H8.4" fill="none" stroke="#c8c8c8" stroke-width="1.2"/><path d="M2.2 2.4L4.2 5.4L7.4 1.8" fill="none" stroke="#c8c8c8" stroke-width="1.2"/></svg>
<div class="t" style="left:133px;top:621.47px;font-size:8.6px;line-height:10.6px;color:#b8b8b8;transform:scaleX(0.9642);transform-origin:0 0;">Position</div>
<div class="t" style="left:267.8px;top:621.07px;font-size:8.6px;line-height:10.6px;color:#2f8ceb;transform:scaleX(0.8574);transform-origin:0 0;">960.0 ,448.8</div>
<svg style="position:absolute;left:376.8px;top:621.475px;" width="9.2" height="9.2" viewBox="0 0 9.2 9.2"><path d="M3.71 4.46L3.62 4.74L3.62 5.06L3.73 5.39L3.95 5.69L4.27 5.92L4.68 6.05L5.13 6.05L5.58 5.90L6.00 5.61L6.32 5.19L6.51 4.67L6.53 4.08L6.37 3.49L6.03 2.95L5.53 2.52L4.89 2.25L4.17 2.18L3.44 2.33L2.76 2.70L2.21 3.27L1.84 4.01L1.69 4.85L1.81 5.73L2.19 6.55L2.82 7.25L3.64 7.74L4.60 7.97L5.61 7.92L6.59 7.55L7.44 6.90L8.07 6.00L8.42 4.93L8.44 3.78L8.11 2.65L7.45 1.64L6.51 0.86" fill="none" stroke="#9e9e9e" stroke-width="1.05" stroke-linecap="round"/></svg>
<div style="position:absolute;left:15px;top:632.2px;width:446.5px;height:12.449999999999932px;background:#2b2b2b;"></div>
<div style="position:absolute;left:15px;top:644.05px;width:446.5px;height:0.7px;background:#242424;"></div>
<div style="position:absolute;left:19px;top:633.0px;width:9.8px;height:10.649999999999931px;background:#202020;"></div>
<svg style="position:absolute;left:53.3px;top:633.725px;" width="7" height="9" viewBox="0 0 7 9"><rect x="0" y="3.8" width="7" height="5" rx="0.7" fill="#d8d8d8"/><path d="M1.5 3.8V2.6A2 2 0 0 1 5.5 2.6V3.8" fill="none" stroke="#d8d8d8" stroke-width="1.1"/><rect x="3" y="5.4" width="1" height="2" fill="#222"/></svg>
<svg style="position:absolute;left:69.2px;top:635.025px;" width="5" height="7" viewBox="0 0 5 7"><path d="M0.8 0.6L3.8 3.5L0.8 6.4" fill="none" stroke="#a0a0a0" stroke-width="1.1"/></svg>
<div style="position:absolute;left:78.2px;top:633.8000000000001px;width:8.9px;height:9.049999999999931px;background:#efbfd0;"></div>
<div class="t" style="left:94px;top:633.52px;font-size:8.6px;line-height:10.6px;color:#c4c4c4;transform:scaleX(0.9408);transform-origin:0 0;">17</div>
<svg style="position:absolute;left:116.2px;top:633.525px;" width="9" height="10" viewBox="0 0 9 10"><rect x="0.4" y="0.4" width="8.2" height="9.2" rx="1.2" fill="#2a0b02" stroke="#8a3c08" stroke-width="0.8"/><path d="M4.5 1.6L6.8 6H5.4L4.5 4.2L3.6 6H2.2Z" fill="#ff9a1f"/><path d="M4.5 2.8L5.6 5.4H3.4Z" fill="#ffd24a"/><rect x="3.6" y="6.8" width="1.8" height="1.6" fill="#e8b9a0"/></svg>
<div class="t" style="left:130px;top:633.52px;font-size:8.6px;line-height:10.6px;color:#d0d0d0;transform:scaleX(1.0149);transform-origin:0 0;">Demographic Information</div>
<div style="position:absolute;left:267px;top:633.0px;width:9.4px;height:10.649999999999931px;background:#202020;"></div>
<svg style="position:absolute;left:267.3px;top:634.725px;" width="8.4" height="7.5" viewBox="0 0 9 8"><path d="M1.6 3.6A2.9 3 0 0 1 7.4 3.6Z" fill="#c8c8c8"/><path d="M0 4.3H9" stroke="#c8c8c8" stroke-width="0.9"/><path d="M2.6 4.6V7.6M4.5 4.6V7.2M6.4 4.6V7.6" stroke="#c8c8c8" stroke-width="1"/><path d="M0.3 7.4H2.6M6.4 7.4H8.7" stroke="#c8c8c8" stroke-width="0.8"/></svg>
<div style="position:absolute;left:278.3px;top:633.0px;width:9px;height:10.649999999999931px;background:#202020;"></div>
<div style="position:absolute;left:289px;top:633.0px;width:9.6px;height:10.649999999999931px;background:#202020;"></div>
<svg style="position:absolute;left:289.9px;top:634.525px;" width="8" height="8" viewBox="0 0 8 8"><path d="M0.5 7.5L7.5 0.5" stroke="#c8c8c8" stroke-width="1.2"/></svg>
<div style="position:absolute;left:322px;top:633.0px;width:9.6px;height:10.649999999999931px;background:#202020;"></div>
<div style="position:absolute;left:333px;top:633.0px;width:9.6px;height:10.649999999999931px;background:#202020;"></div>
<div style="position:absolute;left:344px;top:633.0px;width:9.2px;height:10.649999999999931px;background:#202020;"></div>
<svg style="position:absolute;left:367.3px;top:633.925px;" width="9.2" height="9.2" viewBox="0 0 9.2 9.2"><path d="M3.71 4.46L3.62 4.74L3.62 5.06L3.73 5.39L3.95 5.69L4.27 5.92L4.68 6.05L5.13 6.05L5.58 5.90L6.00 5.61L6.32 5.19L6.51 4.67L6.53 4.08L6.37 3.49L6.03 2.95L5.53 2.52L4.89 2.25L4.17 2.18L3.44 2.33L2.76 2.70L2.21 3.27L1.84 4.01L1.69 4.85L1.81 5.73L2.19 6.55L2.82 7.25L3.64 7.74L4.60 7.97L5.61 7.92L6.59 7.55L7.44 6.90L8.07 6.00L8.42 4.93L8.44 3.78L8.11 2.65L7.45 1.64L6.51 0.86" fill="none" stroke="#9e9e9e" stroke-width="1.05" stroke-linecap="round"/></svg>
<div style="position:absolute;left:382px;top:633.0px;width:64.5px;height:10.649999999999931px;background:#202020;"></div>
<div class="t" style="left:387px;top:633.52px;font-size:8.6px;line-height:10.6px;color:#c4c4c4;transform:scaleX(0.9047);transform-origin:0 0;">None</div>
<svg style="position:absolute;left:437.5px;top:636.525px;" width="6" height="4" viewBox="0 0 6 4"><path d="M0.5 0.6L3 3.2L5.5 0.6" fill="none" stroke="#b8b8b8" stroke-width="1"/></svg>
<div style="position:absolute;left:15px;top:644.65px;width:446.5px;height:12.450000000000045px;background:#2b2b2b;"></div>
<div style="position:absolute;left:15px;top:656.5px;width:446.5px;height:0.7px;background:#242424;"></div>
<div style="position:absolute;left:19px;top:645.4499999999999px;width:9.8px;height:10.650000000000045px;background:#202020;"></div>
<div style="position:absolute;left:41.2px;top:645.4499999999999px;width:9.8px;height:10.650000000000045px;background:#202020;"></div>
<div style="position:absolute;left:52px;top:645.4499999999999px;width:9.8px;height:10.650000000000045px;background:#202020;"></div>
<svg style="position:absolute;left:19.5px;top:647.975px;" width="9" height="6" viewBox="0 0 9 6"><path d="M0.2 3C2 -0.1 7 -0.1 8.8 3C7 6.1 2 6.1 0.2 3Z" fill="#c8c8c8"/><circle cx="4.5" cy="3" r="1.45" fill="#1f1f1f"/></svg>
<svg style="position:absolute;left:69.5px;top:648.975px;" width="7" height="5" viewBox="0 0 7 5"><path d="M0.6 0.8L3.5 3.8L6.4 0.8" fill="none" stroke="#a0a0a0" stroke-width="1.1"/></svg>
<div style="position:absolute;left:78.2px;top:646.25px;width:8.9px;height:9.050000000000045px;background:#b2b3dc;"></div>
<div class="t" style="left:94px;top:645.97px;font-size:8.6px;line-height:10.6px;color:#c4c4c4;transform:scaleX(0.9408);transform-origin:0 0;">18</div>
<svg style="position:absolute;left:116.2px;top:645.975px;" width="9" height="10" viewBox="0 0 9 10"><rect x="0.4" y="0.4" width="8.2" height="9.2" rx="1.2" fill="#2a0b02" stroke="#8a3c08" stroke-width="0.8"/><path d="M4.5 1.6L6.8 6H5.4L4.5 4.2L3.6 6H2.2Z" fill="#ff9a1f"/><path d="M4.5 2.8L5.6 5.4H3.4Z" fill="#ffd24a"/><rect x="3.6" y="6.8" width="1.8" height="1.6" fill="#e8b9a0"/></svg>
<div class="t" style="left:130px;top:645.97px;font-size:8.6px;line-height:10.6px;color:#d0d0d0;transform:scaleX(1.0012);transform-origin:0 0;">Photo Result</div>
<div style="position:absolute;left:267px;top:645.4499999999999px;width:9.4px;height:10.650000000000045px;background:#202020;"></div>
<svg style="position:absolute;left:267.3px;top:647.1750000000001px;" width="8.4" height="7.5" viewBox="0 0 9 8"><path d="M1.6 3.6A2.9 3 0 0 1 7.4 3.6Z" fill="#c8c8c8"/><path d="M0 4.3H9" stroke="#c8c8c8" stroke-width="0.9"/><path d="M2.6 4.6V7.6M4.5 4.6V7.2M6.4 4.6V7.6" stroke="#c8c8c8" stroke-width="1"/><path d="M0.3 7.4H2.6M6.4 7.4H8.7" stroke="#c8c8c8" stroke-width="0.8"/></svg>
<div style="position:absolute;left:278.3px;top:645.4499999999999px;width:9px;height:10.650000000000045px;background:#202020;"></div>
<svg style="position:absolute;left:278.8px;top:647.075px;" width="7.8" height="7.8" viewBox="0 0 9 9"><circle cx="4.5" cy="4.5" r="2.1" fill="none" stroke="#c8c8c8" stroke-width="1.1"/><path d="M4.5 0V2M4.5 7V9M0 4.5H2M7 4.5H9M1.3 1.3L2.6 2.6M6.4 6.4L7.7 7.7M7.7 1.3L6.4 2.6M1.3 7.7L2.6 6.4" stroke="#c8c8c8" stroke-width="1"/></svg>
<div style="position:absolute;left:289px;top:645.4499999999999px;width:9.6px;height:10.650000000000045px;background:#202020;"></div>
<svg style="position:absolute;left:289.9px;top:646.975px;" width="8" height="8" viewBox="0 0 8 8"><path d="M0.5 7.5L7.5 0.5" stroke="#c8c8c8" stroke-width="1.2"/></svg>
<div style="position:absolute;left:322px;top:645.4499999999999px;width:9.6px;height:10.650000000000045px;background:#202020;"></div>
<div style="position:absolute;left:333px;top:645.4499999999999px;width:9.6px;height:10.650000000000045px;background:#202020;"></div>
<div style="position:absolute;left:344px;top:645.4499999999999px;width:9.2px;height:10.650000000000045px;background:#202020;"></div>
<svg style="position:absolute;left:367.3px;top:646.375px;" width="9.2" height="9.2" viewBox="0 0 9.2 9.2"><path d="M3.71 4.46L3.62 4.74L3.62 5.06L3.73 5.39L3.95 5.69L4.27 5.92L4.68 6.05L5.13 6.05L5.58 5.90L6.00 5.61L6.32 5.19L6.51 4.67L6.53 4.08L6.37 3.49L6.03 2.95L5.53 2.52L4.89 2.25L4.17 2.18L3.44 2.33L2.76 2.70L2.21 3.27L1.84 4.01L1.69 4.85L1.81 5.73L2.19 6.55L2.82 7.25L3.64 7.74L4.60 7.97L5.61 7.92L6.59 7.55L7.44 6.90L8.07 6.00L8.42 4.93L8.44 3.78L8.11 2.65L7.45 1.64L6.51 0.86" fill="none" stroke="#9e9e9e" stroke-width="1.05" stroke-linecap="round"/></svg>
<div style="position:absolute;left:382px;top:645.4499999999999px;width:64.5px;height:10.650000000000045px;background:#202020;"></div>
<div class="t" style="left:387px;top:645.97px;font-size:8.6px;line-height:10.6px;color:#c4c4c4;transform:scaleX(0.9047);transform-origin:0 0;">None</div>
<svg style="position:absolute;left:437.5px;top:648.975px;" width="6" height="4" viewBox="0 0 6 4"><path d="M0.5 0.6L3 3.2L5.5 0.6" fill="none" stroke="#b8b8b8" stroke-width="1"/></svg>
<div style="position:absolute;left:15px;top:657.1px;width:446.5px;height:12.449999999999932px;background:#232323;"></div>
<svg style="position:absolute;left:21px;top:660.225px;" width="5.4" height="6.4" viewBox="0 0 5.4 6.4"><path d="M5.2 0.2V6.2L0.4 3.2Z" fill="#c8c8c8"/></svg>
<svg style="position:absolute;left:31px;top:659.825px;" width="7.2" height="7.2" viewBox="0 0 7.2 7.2"><path d="M3.6 0.5L6.7 3.6L3.6 6.7L0.5 3.6Z" fill="none" stroke="#c8c8c8" stroke-width="0.9"/></svg>
<svg style="position:absolute;left:43.6px;top:660.225px;" width="5.4" height="6.4" viewBox="0 0 5.4 6.4"><path d="M0.2 0.2V6.2L5 3.2Z" fill="#505050"/></svg>
<div style="position:absolute;left:96.3px;top:663.4250000000001px;width:0.8px;height:0.8px;background:#3c3c3c;"></div>
<div style="position:absolute;left:103.6px;top:657.7px;width:11px;height:11.049999999999931px;background:#1f1f1f;"></div>
<svg style="position:absolute;left:104.5px;top:657.725px;" width="9" height="11" viewBox="0 0 9 11"><circle cx="4.5" cy="6.2" r="3.6" fill="none" stroke="#2f8ceb" stroke-width="1.2"/><path d="M3.2 1H5.8M4.5 1V2.6M4.5 6.2L6.4 4.3" stroke="#2f8ceb" stroke-width="1.1" fill="none"/></svg>
<svg style="position:absolute;left:117.8px;top:659.4250000000001px;" width="9" height="8" viewBox="0 0 9 8"><path d="M0.6 0V7.2H8.4" fill="none" stroke="#c8c8c8" stroke-width="1.2"/><path d="M2.2 2.4L4.2 5.4L7.4 1.8" fill="none" stroke="#c8c8c8" stroke-width="1.2"/></svg>
<div class="t" style="left:133px;top:658.82px;font-size:8.6px;line-height:10.6px;color:#b8b8b8;transform:scaleX(0.9604);transform-origin:0 0;">Opacity</div>
<div class="t" style="left:268px;top:658.42px;font-size:8.6px;line-height:10.6px;color:#2f8ceb;transform:scaleX(0.9338);transform-origin:0 0;">100</div>
<div class="t" style="left:283px;top:658.42px;font-size:8.6px;line-height:10.6px;color:#9a9a9a;transform:scaleX(0.7847);transform-origin:0 0;">%</div>
<svg style="position:absolute;left:376.8px;top:658.825px;" width="9.2" height="9.2" viewBox="0 0 9.2 9.2"><path d="M3.71 4.46L3.62 4.74L3.62 5.06L3.73 5.39L3.95 5.69L4.27 5.92L4.68 6.05L5.13 6.05L5.58 5.90L6.00 5.61L6.32 5.19L6.51 4.67L6.53 4.08L6.37 3.49L6.03 2.95L5.53 2.52L4.89 2.25L4.17 2.18L3.44 2.33L2.76 2.70L2.21 3.27L1.84 4.01L1.69 4.85L1.81 5.73L2.19 6.55L2.82 7.25L3.64 7.74L4.60 7.97L5.61 7.92L6.59 7.55L7.44 6.90L8.07 6.00L8.42 4.93L8.44 3.78L8.11 2.65L7.45 1.64L6.51 0.86" fill="none" stroke="#9e9e9e" stroke-width="1.05" stroke-linecap="round"/></svg>
<div style="position:absolute;left:15px;top:669.55px;width:446.5px;height:12.450000000000045px;background:#2b2b2b;"></div>
<div style="position:absolute;left:15px;top:681.4px;width:446.5px;height:0.7px;background:#242424;"></div>
<div style="position:absolute;left:19px;top:670.3499999999999px;width:9.8px;height:10.650000000000045px;background:#202020;"></div>
<div style="position:absolute;left:41.2px;top:670.3499999999999px;width:9.8px;height:10.650000000000045px;background:#202020;"></div>
<div style="position:absolute;left:52px;top:670.3499999999999px;width:9.8px;height:10.650000000000045px;background:#202020;"></div>
<svg style="position:absolute;left:19.5px;top:672.875px;" width="9" height="6" viewBox="0 0 9 6"><path d="M0.2 3C2 -0.1 7 -0.1 8.8 3C7 6.1 2 6.1 0.2 3Z" fill="#c8c8c8"/><circle cx="4.5" cy="3" r="1.45" fill="#1f1f1f"/></svg>
<svg style="position:absolute;left:69.5px;top:673.875px;" width="7" height="5" viewBox="0 0 7 5"><path d="M0.6 0.8L3.5 3.8L6.4 0.8" fill="none" stroke="#a0a0a0" stroke-width="1.1"/></svg>
<div style="position:absolute;left:78.2px;top:671.15px;width:8.9px;height:9.050000000000045px;background:#bd3a3c;"></div>
<div class="t" style="left:94px;top:670.87px;font-size:8.6px;line-height:10.6px;color:#c4c4c4;transform:scaleX(0.9408);transform-origin:0 0;">19</div>
<svg style="position:absolute;left:116.6px;top:672.175px;" width="6.8" height="7.4" viewBox="0 0 8 8"><path d="M0.3 0.3H7.7V2.4H7C6.9 1.5 6.6 1.3 5.8 1.3H4.8V6.4C4.8 7 5 7.1 5.8 7.2V7.8H2.2V7.2C3 7.1 3.2 7 3.2 6.4V1.3H2.2C1.4 1.3 1.1 1.5 1 2.4H0.3Z" fill="#c8c8c8"/></svg>
<div class="t" style="left:130px;top:670.87px;font-size:8.6px;line-height:10.6px;color:#d0d0d0;transform:scaleX(0.9238);transform-origin:0 0;">Jacob</div>
<div style="position:absolute;left:267px;top:670.3499999999999px;width:9.4px;height:10.650000000000045px;background:#202020;"></div>
<svg style="position:absolute;left:267.3px;top:672.075px;" width="8.4" height="7.5" viewBox="0 0 9 8"><path d="M1.6 3.6A2.9 3 0 0 1 7.4 3.6Z" fill="#c8c8c8"/><path d="M0 4.3H9" stroke="#c8c8c8" stroke-width="0.9"/><path d="M2.6 4.6V7.6M4.5 4.6V7.2M6.4 4.6V7.6" stroke="#c8c8c8" stroke-width="1"/><path d="M0.3 7.4H2.6M6.4 7.4H8.7" stroke="#c8c8c8" stroke-width="0.8"/></svg>
<div style="position:absolute;left:278.3px;top:670.3499999999999px;width:9px;height:10.650000000000045px;background:#202020;"></div>
<svg style="position:absolute;left:278.8px;top:671.975px;" width="7.8" height="7.8" viewBox="0 0 9 9"><circle cx="4.5" cy="4.5" r="2.1" fill="none" stroke="#5e5e5e" stroke-width="1.1"/><path d="M4.5 0V2M4.5 7V9M0 4.5H2M7 4.5H9M1.3 1.3L2.6 2.6M6.4 6.4L7.7 7.7M7.7 1.3L6.4 2.6M1.3 7.7L2.6 6.4" stroke="#5e5e5e" stroke-width="1"/></svg>
<div style="position:absolute;left:289px;top:670.3499999999999px;width:9.6px;height:10.650000000000045px;background:#202020;"></div>
<svg style="position:absolute;left:289.9px;top:671.875px;" width="8" height="8" viewBox="0 0 8 8"><path d="M0.5 7.5L7.5 0.5" stroke="#c8c8c8" stroke-width="1.2"/></svg>
<div style="position:absolute;left:322px;top:670.3499999999999px;width:9.6px;height:10.650000000000045px;background:#202020;"></div>
<div style="position:absolute;left:333px;top:670.3499999999999px;width:9.6px;height:10.650000000000045px;background:#202020;"></div>
<div style="position:absolute;left:344px;top:670.3499999999999px;width:9.2px;height:10.650000000000045px;background:#202020;"></div>
<svg style="position:absolute;left:367.3px;top:671.275px;" width="9.2" height="9.2" viewBox="0 0 9.2 9.2"><path d="M3.71 4.46L3.62 4.74L3.62 5.06L3.73 5.39L3.95 5.69L4.27 5.92L4.68 6.05L5.13 6.05L5.58 5.90L6.00 5.61L6.32 5.19L6.51 4.67L6.53 4.08L6.37 3.49L6.03 2.95L5.53 2.52L4.89 2.25L4.17 2.18L3.44 2.33L2.76 2.70L2.21 3.27L1.84 4.01L1.69 4.85L1.81 5.73L2.19 6.55L2.82 7.25L3.64 7.74L4.60 7.97L5.61 7.92L6.59 7.55L7.44 6.90L8.07 6.00L8.42 4.93L8.44 3.78L8.11 2.65L7.45 1.64L6.51 0.86" fill="none" stroke="#9e9e9e" stroke-width="1.05" stroke-linecap="round"/></svg>
<div style="position:absolute;left:382px;top:670.3499999999999px;width:64.5px;height:10.650000000000045px;background:#202020;"></div>
<div class="t" style="left:387px;top:670.87px;font-size:8.6px;line-height:10.6px;color:#c4c4c4;transform:scaleX(0.9047);transform-origin:0 0;">None</div>
<svg style="position:absolute;left:437.5px;top:673.875px;" width="6" height="4" viewBox="0 0 6 4"><path d="M0.5 0.6L3 3.2L5.5 0.6" fill="none" stroke="#b8b8b8" stroke-width="1"/></svg>
<div style="position:absolute;left:15px;top:682.0px;width:446.5px;height:12.450000000000045px;background:#232323;"></div>
<svg style="position:absolute;left:21px;top:685.125px;" width="5.4" height="6.4" viewBox="0 0 5.4 6.4"><path d="M5.2 0.2V6.2L0.4 3.2Z" fill="#c8c8c8"/></svg>
<svg style="position:absolute;left:31px;top:684.725px;" width="7.2" height="7.2" viewBox="0 0 7.2 7.2"><path d="M3.6 0.5L6.7 3.6L3.6 6.7L0.5 3.6Z" fill="none" stroke="#c8c8c8" stroke-width="0.9"/></svg>
<svg style="position:absolute;left:43.6px;top:685.125px;" width="5.4" height="6.4" viewBox="0 0 5.4 6.4"><path d="M0.2 0.2V6.2L5 3.2Z" fill="#505050"/></svg>
<div style="position:absolute;left:96.3px;top:688.325px;width:0.8px;height:0.8px;background:#3c3c3c;"></div>
<div style="position:absolute;left:103.6px;top:682.6px;width:11px;height:11.050000000000045px;background:#1f1f1f;"></div>
<svg style="position:absolute;left:104.5px;top:682.625px;" width="9" height="11" viewBox="0 0 9 11"><circle cx="4.5" cy="6.2" r="3.6" fill="none" stroke="#2f8ceb" stroke-width="1.2"/><path d="M3.2 1H5.8M4.5 1V2.6M4.5 6.2L6.4 4.3" stroke="#2f8ceb" stroke-width="1.1" fill="none"/></svg>
<svg style="position:absolute;left:117.8px;top:684.325px;" width="9" height="8" viewBox="0 0 9 8"><path d="M0.6 0V7.2H8.4" fill="none" stroke="#c8c8c8" stroke-width="1.2"/><path d="M2.2 2.4L4.2 5.4L7.4 1.8" fill="none" stroke="#c8c8c8" stroke-width="1.2"/></svg>
<div class="t" style="left:133px;top:683.72px;font-size:8.6px;line-height:10.6px;color:#b8b8b8;transform:scaleX(0.9604);transform-origin:0 0;">Opacity</div>
<div class="t" style="left:268px;top:683.32px;font-size:8.6px;line-height:10.6px;color:#2f8ceb;transform:scaleX(0.9338);transform-origin:0 0;">100</div>
<div class="t" style="left:283px;top:683.32px;font-size:8.6px;line-height:10.6px;color:#9a9a9a;transform:scaleX(0.7847);transform-origin:0 0;">%</div>
<svg style="position:absolute;left:376.8px;top:683.725px;" width="9.2" height="9.2" viewBox="0 0 9.2 9.2"><path d="M3.71 4.46L3.62 4.74L3.62 5.06L3.73 5.39L3.95 5.69L4.27 5.92L4.68 6.05L5.13 6.05L5.58 5.90L6.00 5.61L6.32 5.19L6.51 4.67L6.53 4.08L6.37 3.49L6.03 2.95L5.53 2.52L4.89 2.25L4.17 2.18L3.44 2.33L2.76 2.70L2.21 3.27L1.84 4.01L1.69 4.85L1.81 5.73L2.19 6.55L2.82 7.25L3.64 7.74L4.60 7.97L5.61 7.92L6.59 7.55L7.44 6.90L8.07 6.00L8.42 4.93L8.44 3.78L8.11 2.65L7.45 1.64L6.51 0.86" fill="none" stroke="#9e9e9e" stroke-width="1.05" stroke-linecap="round"/></svg>
<div style="position:absolute;left:15px;top:694.45px;width:446.5px;height:12.449999999999932px;background:#2b2b2b;"></div>
<div style="position:absolute;left:15px;top:706.3px;width:446.5px;height:0.7px;background:#242424;"></div>
<div style="position:absolute;left:19px;top:695.25px;width:9.8px;height:10.649999999999931px;background:#202020;"></div>
<div style="position:absolute;left:41.2px;top:695.25px;width:9.8px;height:10.649999999999931px;background:#202020;"></div>
<div style="position:absolute;left:52px;top:695.25px;width:9.8px;height:10.649999999999931px;background:#202020;"></div>
<svg style="position:absolute;left:19.5px;top:697.775px;" width="9" height="6" viewBox="0 0 9 6"><path d="M0.2 3C2 -0.1 7 -0.1 8.8 3C7 6.1 2 6.1 0.2 3Z" fill="#c8c8c8"/><circle cx="4.5" cy="3" r="1.45" fill="#1f1f1f"/></svg>
<svg style="position:absolute;left:69.2px;top:697.275px;" width="5" height="7" viewBox="0 0 5 7"><path d="M0.8 0.6L3.8 3.5L0.8 6.4" fill="none" stroke="#a0a0a0" stroke-width="1.1"/></svg>
<div style="position:absolute;left:78.2px;top:696.0500000000001px;width:8.9px;height:9.049999999999931px;background:#bd3a3c;"></div>
<div class="t" style="left:94px;top:695.77px;font-size:8.6px;line-height:10.6px;color:#c4c4c4;transform:scaleX(0.9408);transform-origin:0 0;">20</div>
<svg style="position:absolute;left:116.6px;top:697.0749999999999px;" width="6.8" height="7.4" viewBox="0 0 8 8"><path d="M0.3 0.3H7.7V2.4H7C6.9 1.5 6.6 1.3 5.8 1.3H4.8V6.4C4.8 7 5 7.1 5.8 7.2V7.8H2.2V7.2C3 7.1 3.2 7 3.2 6.4V1.3H2.2C1.4 1.3 1.1 1.5 1 2.4H0.3Z" fill="#c8c8c8"/></svg>
<div class="t" style="left:130px;top:695.77px;font-size:8.6px;line-height:10.6px;color:#d0d0d0;transform:scaleX(0.8808);transform-origin:0 0;">Jaco</div>
<div style="position:absolute;left:267px;top:695.25px;width:9.4px;height:10.649999999999931px;background:#202020;"></div>
<svg style="position:absolute;left:267.3px;top:696.975px;" width="8.4" height="7.5" viewBox="0 0 9 8"><path d="M1.6 3.6A2.9 3 0 0 1 7.4 3.6Z" fill="#c8c8c8"/><path d="M0 4.3H9" stroke="#c8c8c8" stroke-width="0.9"/><path d="M2.6 4.6V7.6M4.5 4.6V7.2M6.4 4.6V7.6" stroke="#c8c8c8" stroke-width="1"/><path d="M0.3 7.4H2.6M6.4 7.4H8.7" stroke="#c8c8c8" stroke-width="0.8"/></svg>
<div style="position:absolute;left:278.3px;top:695.25px;width:9px;height:10.649999999999931px;background:#202020;"></div>
<svg style="position:absolute;left:278.8px;top:696.875px;" width="7.8" height="7.8" viewBox="0 0 9 9"><circle cx="4.5" cy="4.5" r="2.1" fill="none" stroke="#5e5e5e" stroke-width="1.1"/><path d="M4.5 0V2M4.5 7V9M0 4.5H2M7 4.5H9M1.3 1.3L2.6 2.6M6.4 6.4L7.7 7.7M7.7 1.3L6.4 2.6M1.3 7.7L2.6 6.4" stroke="#5e5e5e" stroke-width="1"/></svg>
<div style="position:absolute;left:289px;top:695.25px;width:9.6px;height:10.649999999999931px;background:#202020;"></div>
<svg style="position:absolute;left:289.9px;top:696.775px;" width="8" height="8" viewBox="0 0 8 8"><path d="M0.5 7.5L7.5 0.5" stroke="#c8c8c8" stroke-width="1.2"/></svg>
<div style="position:absolute;left:322px;top:695.25px;width:9.6px;height:10.649999999999931px;background:#202020;"></div>
<div style="position:absolute;left:333px;top:695.25px;width:9.6px;height:10.649999999999931px;background:#202020;"></div>
<div style="position:absolute;left:344px;top:695.25px;width:9.2px;height:10.649999999999931px;background:#202020;"></div>
<svg style="position:absolute;left:367.3px;top:696.175px;" width="9.2" height="9.2" viewBox="0 0 9.2 9.2"><path d="M3.71 4.46L3.62 4.74L3.62 5.06L3.73 5.39L3.95 5.69L4.27 5.92L4.68 6.05L5.13 6.05L5.58 5.90L6.00 5.61L6.32 5.19L6.51 4.67L6.53 4.08L6.37 3.49L6.03 2.95L5.53 2.52L4.89 2.25L4.17 2.18L3.44 2.33L2.76 2.70L2.21 3.27L1.84 4.01L1.69 4.85L1.81 5.73L2.19 6.55L2.82 7.25L3.64 7.74L4.60 7.97L5.61 7.92L6.59 7.55L7.44 6.90L8.07 6.00L8.42 4.93L8.44 3.78L8.11 2.65L7.45 1.64L6.51 0.86" fill="none" stroke="#9e9e9e" stroke-width="1.05" stroke-linecap="round"/></svg>
<div style="position:absolute;left:382px;top:695.25px;width:64.5px;height:10.649999999999931px;background:#202020;"></div>
<div class="t" style="left:387px;top:695.77px;font-size:8.6px;line-height:10.6px;color:#c4c4c4;transform:scaleX(0.9047);transform-origin:0 0;">None</div>
<svg style="position:absolute;left:437.5px;top:698.775px;" width="6" height="4" viewBox="0 0 6 4"><path d="M0.5 0.6L3 3.2L5.5 0.6" fill="none" stroke="#b8b8b8" stroke-width="1"/></svg>
<div style="position:absolute;left:461px;top:518.5px;width:1.5px;height:188px;background:#151515;"></div>
<div style="position:absolute;left:462.5px;top:518.5px;width:802.5px;height:39px;background:#1f1f1f;"></div>
<div style="position:absolute;left:462.5px;top:520.2px;width:790px;height:8.4px;background:#121212;"></div>
<div style="position:absolute;left:467.7px;top:522px;width:778.5px;height:5.3px;background:#737373;"></div>
<div style="position:absolute;left:467.7px;top:526.4px;width:778.5px;height:0.9px;background:#8c8c8c;"></div>
<svg style="position:absolute;left:461.8px;top:521.8px;" width="6" height="5.8" viewBox="0 0 6 5.8"><path d="M6 0V5.8H3.4C0.4 5.8 0.4 0 3.4 0Z" fill="#2f96f3"/></svg>
<svg style="position:absolute;left:1246.2px;top:521.8px;" width="6" height="5.8" viewBox="0 0 6 5.8"><path d="M0 0V5.8H2.6C5.6 5.8 5.6 0 2.6 0Z" fill="#2f96f3"/></svg>
<div class="t" style="left:464.3px;top:529.0px;font-size:8.6px;line-height:10.6px;color:#a8a8a8;transform:scaleX(0.8366);transform-origin:0 0;">:00s</div>
<div style="position:absolute;left:466.7px;top:539px;width:1px;height:3px;background:#8a8a8a;"></div>
<div class="t" style="left:520.4px;top:529.0px;font-size:8.6px;line-height:10.6px;color:#a8a8a8;transform:scaleX(0.8798);transform-origin:0 0;">01s</div>
<div style="position:absolute;left:526.7px;top:539px;width:1px;height:3px;background:#8a8a8a;"></div>
<div class="t" style="left:580.4px;top:529.0px;font-size:8.6px;line-height:10.6px;color:#a8a8a8;transform:scaleX(0.8798);transform-origin:0 0;">02s</div>
<div style="position:absolute;left:586.7px;top:539px;width:1px;height:3px;background:#8a8a8a;"></div>
<div class="t" style="left:640.4px;top:529.0px;font-size:8.6px;line-height:10.6px;color:#a8a8a8;transform:scaleX(0.8798);transform-origin:0 0;">03s</div>
<div style="position:absolute;left:646.7px;top:539px;width:1px;height:3px;background:#8a8a8a;"></div>
<div class="t" style="left:700.4px;top:529.0px;font-size:8.6px;line-height:10.6px;color:#a8a8a8;transform:scaleX(0.8798);transform-origin:0 0;">04s</div>
<div style="position:absolute;left:706.7px;top:539px;width:1px;height:3px;background:#8a8a8a;"></div>
<div class="t" style="left:760.4px;top:529.0px;font-size:8.6px;line-height:10.6px;color:#a8a8a8;transform:scaleX(0.8798);transform-origin:0 0;">05s</div>
<div style="position:absolute;left:766.7px;top:539px;width:1px;height:3px;background:#8a8a8a;"></div>
<div class="t" style="left:820.4px;top:529.0px;font-size:8.6px;line-height:10.6px;color:#a8a8a8;transform:scaleX(0.8798);transform-origin:0 0;">06s</div>
<div style="position:absolute;left:826.7px;top:539px;width:1px;height:3px;background:#8a8a8a;"></div>
<div class="t" style="left:880.4px;top:529.0px;font-size:8.6px;line-height:10.6px;color:#a8a8a8;transform:scaleX(0.8798);transform-origin:0 0;">07s</div>
<div style="position:absolute;left:886.7px;top:539px;width:1px;height:3px;background:#8a8a8a;"></div>
<div class="t" style="left:940.4px;top:529.0px;font-size:8.6px;line-height:10.6px;color:#a8a8a8;transform:scaleX(0.8798);transform-origin:0 0;">08s</div>
<div style="position:absolute;left:946.7px;top:539px;width:1px;height:3px;background:#8a8a8a;"></div>
<div class="t" style="left:1000.4px;top:529.0px;font-size:8.6px;line-height:10.6px;color:#a8a8a8;transform:scaleX(0.8798);transform-origin:0 0;">09s</div>
<div style="position:absolute;left:1006.7px;top:539px;width:1px;height:3px;background:#8a8a8a;"></div>
<div class="t" style="left:1060.4px;top:529.0px;font-size:8.6px;line-height:10.6px;color:#a8a8a8;transform:scaleX(0.8798);transform-origin:0 0;">10s</div>
<div style="position:absolute;left:1066.7px;top:539px;width:1px;height:3px;background:#8a8a8a;"></div>
<div class="t" style="left:1120.4px;top:529.0px;font-size:8.6px;line-height:10.6px;color:#a8a8a8;transform:scaleX(0.9223);transform-origin:0 0;">11s</div>
<div style="position:absolute;left:1126.7px;top:539px;width:1px;height:3px;background:#8a8a8a;"></div>
<div class="t" style="left:1180.4px;top:529.0px;font-size:8.6px;line-height:10.6px;color:#a8a8a8;transform:scaleX(0.8798);transform-origin:0 0;">12s</div>
<div style="position:absolute;left:1186.7px;top:539px;width:1px;height:3px;background:#8a8a8a;"></div>
<div class="t" style="left:1240.4px;top:529.0px;font-size:8.6px;line-height:10.6px;color:#a8a8a8;transform:scaleX(0.8798);transform-origin:0 0;">13s</div>
<div style="position:absolute;left:1246.7px;top:539px;width:1px;height:3px;background:#8a8a8a;"></div>
<div style="position:absolute;left:462.5px;top:542px;width:790px;height:13.2px;background:#121212;"></div>
<div style="position:absolute;left:467.5px;top:543.3px;width:778.8px;height:10.6px;background:#676767;"></div>
<svg style="position:absolute;left:462.6px;top:543.3px;" width="5" height="10.6" viewBox="0 0 5 10.6"><path d="M5 0V10.6H2.6C0 10.6 0 0 2.6 0Z" fill="#2f96f3"/></svg>
<svg style="position:absolute;left:1246.2px;top:543.3px;" width="4.8" height="10.6" viewBox="0 0 4.8 10.6"><path d="M0 0V10.6H2.4C4.8 10.6 4.8 0 2.4 0Z" fill="#2f96f3"/></svg>
<div style="position:absolute;left:888.7px;top:555px;width:51.6px;height:2px;background:#1fd11f;"></div>
<div style="position:absolute;left:942.5px;top:555px;width:12.0px;height:2px;background:#1fd11f;"></div>
<div style="position:absolute;left:968px;top:555px;width:18.7px;height:2px;background:#1fd11f;"></div>
<div style="position:absolute;left:988.7px;top:555px;width:59.8px;height:2px;background:#1fd11f;"></div>
<div style="position:absolute;left:1058.6px;top:555px;width:2.0px;height:2px;background:#1fd11f;"></div>
<div style="position:absolute;left:1086px;top:555px;width:41px;height:2px;background:#1fd11f;"></div>
<div style="position:absolute;left:1130.4px;top:555px;width:2.2px;height:2px;background:#1fd11f;"></div>
<div style="position:absolute;left:462.5px;top:557.5px;width:788.5px;height:12.450000000000045px;background:#2a2a2a;"></div>
<div style="position:absolute;left:462.5px;top:558.0px;width:4.5px;height:11.450000000000045px;background:#303030;"></div>
<div style="position:absolute;left:467.0px;top:558.0px;width:779.2px;height:11.450000000000045px;background:#3b3b3b;"></div>
<div style="position:absolute;left:1246.2px;top:558.0px;width:5px;height:11.450000000000045px;background:#333;"></div>
<div style="position:absolute;left:462.5px;top:569.95px;width:788.5px;height:12.449999999999932px;background:#2a2a2a;"></div>
<div style="position:absolute;left:462.5px;top:570.45px;width:4.5px;height:11.449999999999932px;background:#2b2b2b;"></div>
<div style="position:absolute;left:467.0px;top:570.45px;width:779.2px;height:11.449999999999932px;background:#313131;"></div>
<div style="position:absolute;left:1246.2px;top:570.45px;width:5px;height:11.449999999999932px;background:#2d2d2d;"></div>
<div style="position:absolute;left:462.5px;top:582.4px;width:788.5px;height:12.450000000000045px;background:#2a2a2a;"></div>
<div style="position:absolute;left:462.5px;top:582.9px;width:4.5px;height:11.450000000000045px;background:#303030;"></div>
<div style="position:absolute;left:467.0px;top:582.9px;width:779.2px;height:11.450000000000045px;background:#3b3b3b;"></div>
<div style="position:absolute;left:1246.2px;top:582.9px;width:5px;height:11.450000000000045px;background:#333;"></div>
<div style="position:absolute;left:462.5px;top:594.85px;width:788.5px;height:12.449999999999932px;background:#2a2a2a;"></div>
<div style="position:absolute;left:462.5px;top:595.35px;width:4.5px;height:11.449999999999932px;background:#2b2b2b;"></div>
<div style="position:absolute;left:467.0px;top:595.35px;width:779.2px;height:11.449999999999932px;background:#313131;"></div>
<div style="position:absolute;left:1246.2px;top:595.35px;width:5px;height:11.449999999999932px;background:#2d2d2d;"></div>
<div style="position:absolute;left:462.5px;top:607.3px;width:788.5px;height:12.450000000000045px;background:#2a2a2a;"></div>
<div style="position:absolute;left:462.5px;top:607.8px;width:4.5px;height:11.450000000000045px;background:#303030;"></div>
<div style="position:absolute;left:467.0px;top:607.8px;width:779.2px;height:11.450000000000045px;background:#3b3b3b;"></div>
<div style="position:absolute;left:1246.2px;top:607.8px;width:5px;height:11.450000000000045px;background:#333;"></div>
<div style="position:absolute;left:462.5px;top:619.75px;width:788.5px;height:12.450000000000045px;background:#2a2a2a;"></div>
<div style="position:absolute;left:462.5px;top:620.25px;width:4.5px;height:11.450000000000045px;background:#2b2b2b;"></div>
<div style="position:absolute;left:467.0px;top:620.25px;width:779.2px;height:11.450000000000045px;background:#313131;"></div>
<div style="position:absolute;left:1246.2px;top:620.25px;width:5px;height:11.450000000000045px;background:#2d2d2d;"></div>
<div style="position:absolute;left:462.5px;top:632.2px;width:788.5px;height:12.449999999999932px;background:#2a2a2a;"></div>
<div style="position:absolute;left:462.5px;top:632.7px;width:4.5px;height:11.449999999999932px;background:#303030;"></div>
<div style="position:absolute;left:467.0px;top:632.7px;width:779.2px;height:11.449999999999932px;background:#3b3b3b;"></div>
<div style="position:absolute;left:1246.2px;top:632.7px;width:5px;height:11.449999999999932px;background:#333;"></div>
<div style="position:absolute;left:462.5px;top:644.65px;width:788.5px;height:12.450000000000045px;background:#2a2a2a;"></div>
<div style="position:absolute;left:462.5px;top:645.15px;width:4.5px;height:11.450000000000045px;background:#303030;"></div>
<div style="position:absolute;left:467.0px;top:645.15px;width:779.2px;height:11.450000000000045px;background:#3b3b3b;"></div>
<div style="position:absolute;left:1246.2px;top:645.15px;width:5px;height:11.450000000000045px;background:#333;"></div>
<div style="position:absolute;left:462.5px;top:657.1px;width:788.5px;height:12.449999999999932px;background:#2a2a2a;"></div>
<div style="position:absolute;left:462.5px;top:657.6px;width:4.5px;height:11.449999999999932px;background:#2b2b2b;"></div>
<div style="position:absolute;left:467.0px;top:657.6px;width:779.2px;height:11.449999999999932px;background:#313131;"></div>
<div style="position:absolute;left:1246.2px;top:657.6px;width:5px;height:11.449999999999932px;background:#2d2d2d;"></div>
<div style="position:absolute;left:462.5px;top:669.55px;width:788.5px;height:12.450000000000045px;background:#2a2a2a;"></div>
<div style="position:absolute;left:462.5px;top:670.05px;width:4.5px;height:11.450000000000045px;background:#303030;"></div>
<div style="position:absolute;left:467.0px;top:670.05px;width:779.2px;height:11.450000000000045px;background:#3b3b3b;"></div>
<div style="position:absolute;left:1246.2px;top:670.05px;width:5px;height:11.450000000000045px;background:#333;"></div>
<div style="position:absolute;left:462.5px;top:682.0px;width:788.5px;height:12.450000000000045px;background:#2a2a2a;"></div>
<div style="position:absolute;left:462.5px;top:682.5px;width:4.5px;height:11.450000000000045px;background:#2b2b2b;"></div>
<div style="position:absolute;left:467.0px;top:682.5px;width:779.2px;height:11.450000000000045px;background:#313131;"></div>
<div style="position:absolute;left:1246.2px;top:682.5px;width:5px;height:11.450000000000045px;background:#2d2d2d;"></div>
<div style="position:absolute;left:462.5px;top:694.45px;width:788.5px;height:12.449999999999932px;background:#2a2a2a;"></div>
<div style="position:absolute;left:462.5px;top:694.95px;width:4.5px;height:11.449999999999932px;background:#303030;"></div>
<div style="position:absolute;left:467.0px;top:694.95px;width:779.2px;height:11.449999999999932px;background:#3b3b3b;"></div>
<div style="position:absolute;left:1246.2px;top:694.95px;width:5px;height:11.449999999999932px;background:#333;"></div>
<div style="position:absolute;left:867px;top:558.2px;width:379.2px;height:11.15px;background:#614135;"></div>
<div style="position:absolute;left:926.3px;top:583.1px;width:319.9px;height:11.15px;background:#614135;"></div>
<div style="position:absolute;left:867px;top:608.0px;width:379.2px;height:11.15px;background:#614135;"></div>
<div style="position:absolute;left:467.0px;top:632.9px;width:779.2px;height:11.15px;background:#95808a;"></div>
<div style="position:absolute;left:787px;top:645.35px;width:99.7px;height:11.15px;background:#797a8d;"></div>
<div style="position:absolute;left:766.7px;top:670.25px;width:120.0px;height:11.15px;background:#7d3a3c;"></div>
<div style="position:absolute;left:746px;top:695.15px;width:20.7px;height:11.15px;background:#7d3a3c;"></div>
<svg style="position:absolute;left:0;top:0" width="1280" height="720" viewBox="0 0 1280 720"><path d="M864.2 572.7H870.8V573.8L868.5 576.4L870.8 579.0V580.1H864.2V579.0L866.5 576.4L864.2 573.8Z" fill="#d2d2d2"/><path d="M883.7 572.7H890.3V573.8L888.0 576.4L890.3 579.0V580.1H883.7V579.0L886.0 576.4L883.7 573.8Z" fill="#d2d2d2"/><path d="M864.2 597.6H870.8V598.7L868.5 601.3L870.8 603.9V605.0H864.2V603.9L866.5 601.3L864.2 598.7Z" fill="#d2d2d2"/><path d="M883.7 597.6H890.3V598.7L888.0 601.3L890.3 603.9V605.0H883.7V603.9L886.0 601.3L883.7 598.7Z" fill="#d2d2d2"/><path d="M923.4 597.6H930.0V598.7L927.7 601.3L930.0 603.9V605.0H923.4V603.9L925.7 601.3L923.4 598.7Z" fill="#d2d2d2"/><path d="M963.9 597.6H970.5V598.7L968.2 601.3L970.5 603.9V605.0H963.9V603.9L966.2 601.3L963.9 598.7Z" fill="#d2d2d2"/><path d="M983.4 597.6H990.0V598.7L987.7 601.3L990.0 603.9V605.0H983.4V603.9L985.7 601.3L983.4 598.7Z" fill="#d2d2d2"/><path d="M1043.7 597.6H1050.3V598.7L1048.0 601.3L1050.3 603.9V605.0H1043.7V603.9L1046.0 601.3L1043.7 598.7Z" fill="#d2d2d2"/><path d="M1083.7 597.6H1090.3V598.7L1088.0 601.3L1090.3 603.9V605.0H1083.7V603.9L1086.0 601.3L1083.7 598.7Z" fill="#d2d2d2"/><path d="M864.2 622.5H870.8V623.6L868.5 626.2L870.8 628.8V629.9H864.2V628.8L866.5 626.2L864.2 623.6Z" fill="#d2d2d2"/><path d="M883.7 622.5H890.3V623.6L888.0 626.2L890.3 628.8V629.9H883.7V628.8L886.0 626.2L883.7 623.6Z" fill="#d2d2d2"/><path d="M923.4 622.5H930.0V623.6L927.7 626.2L930.0 628.8V629.9H923.4V628.8L925.7 626.2L923.4 623.6Z" fill="#d2d2d2"/><path d="M963.9 622.5H970.5V623.6L968.2 626.2L970.5 628.8V629.9H963.9V628.8L966.2 626.2L963.9 623.6Z" fill="#d2d2d2"/><path d="M983.4 622.5H990.0V623.6L987.7 626.2L990.0 628.8V629.9H983.4V628.8L985.7 626.2L983.4 623.6Z" fill="#d2d2d2"/><path d="M1043.7 622.5H1050.3V623.6L1048.0 626.2L1050.3 628.8V629.9H1043.7V628.8L1046.0 626.2L1043.7 623.6Z" fill="#d2d2d2"/><path d="M1083.7 622.5H1090.3V623.6L1088.0 626.2L1090.3 628.8V629.9H1083.7V628.8L1086.0 626.2L1083.7 623.6Z" fill="#d2d2d2"/><path d="M787.5 659.9L790.9 663.5L787.5 667.1L784.1 663.5Z" fill="#c4c4c4"/><path d="M787.5 662.0L788.9 663.5L787.5 665.0L786.1 663.5Z" fill="#e8e8e8"/><path d="M807.2 659.9L810.6 663.5L807.2 667.1L803.8 663.5Z" fill="#c4c4c4"/><path d="M807.2 662.0L808.6 663.5L807.2 665.0L805.8 663.5Z" fill="#e8e8e8"/><path d="M867.5 659.9L870.9 663.5L867.5 667.1L864.1 663.5Z" fill="#c4c4c4"/><path d="M867.5 662.0L868.9 663.5L867.5 665.0L866.1 663.5Z" fill="#e8e8e8"/><path d="M887.0 659.9L890.4 663.5L887.0 667.1L883.6 663.5Z" fill="#c4c4c4"/><path d="M887.0 662.0L888.4 663.5L887.0 665.0L885.6 663.5Z" fill="#e8e8e8"/><path d="M867.5 684.8L870.9 688.4L867.5 692.0L864.1 688.4Z" fill="#c4c4c4"/><path d="M867.5 686.9L868.9 688.4L867.5 689.9L866.1 688.4Z" fill="#e8e8e8"/><path d="M887.0 684.8L890.4 688.4L887.0 692.0L883.6 688.4Z" fill="#c4c4c4"/><path d="M887.0 686.9L888.4 688.4L887.0 689.9L885.6 688.4Z" fill="#e8e8e8"/></svg>
<div style="position:absolute;left:1251.5px;top:518.5px;width:13.5px;height:188px;background:#232323;"></div>
<svg style="position:absolute;left:1254.2px;top:545px;" width="8.6" height="9.6" viewBox="0 0 8.6 9.6"><path d="M0 0H8.6V5.6L4.3 9.6L0 5.6Z" fill="#a9a9a9"/></svg>
<svg style="position:absolute;left:1252.5px;top:559.5px;" width="11" height="10" viewBox="0 0 11 10"><path d="M0.6 4.6L4.2 1.2H10.2V8H4.2Z" fill="none" stroke="#c8c8c8" stroke-width="1"/><circle cx="3.6" cy="6.6" r="2" fill="#232323" stroke="#c8c8c8" stroke-width="0.9"/><rect x="7" y="3" width="2" height="3" fill="#c8c8c8"/></svg>
<div style="position:absolute;left:1253.5px;top:613px;width:10px;height:24.5px;background:#2f2f2f;border-radius:5px;"></div>
<div style="position:absolute;left:950.5px;top:522px;width:1.1px;height:184.5px;background:#3b84d8;"></div>
<svg style="position:absolute;left:946.8px;top:531.8px;" width="8.6" height="10" viewBox="0 0 8.6 10"><path d="M0 0.8Q0 0 0.8 0H7.8Q8.6 0 8.6 0.8V5.4L4.3 10L0 5.4Z" fill="#2f96f3"/><path d="M4.3 4V10" stroke="#1c5ea8" stroke-width="0.8"/></svg>
<div style="position:absolute;left:15px;top:706.3px;width:1250px;height:12px;background:#232323;"></div>
<div style="position:absolute;left:15px;top:705.8px;width:1250px;height:0.8px;background:#1a1a1a;"></div>
<div style="position:absolute;left:20px;top:707.2px;width:11px;height:10.4px;background:#1b1b1b;border-radius:2px;"></div>
<svg style="position:absolute;left:21px;top:708px;" width="9" height="9" viewBox="0 0 9 9"><g transform="rotate(40 4.5 4.5)"><rect x="0.2" y="1.8" width="8.6" height="5.4" rx="1.4" fill="none" stroke="#2f8ceb" stroke-width="1"/><path d="M2.6 2V7M4.4 2V7" stroke="#2f8ceb" stroke-width="0.8"/></g></svg>
<svg style="position:absolute;left:35px;top:708px;" width="9" height="9" viewBox="0 0 9 9"><circle cx="3.4" cy="3.4" r="2.8" fill="none" stroke="#c8c8c8" stroke-width="0.9"/><rect x="3.8" y="3.8" width="4.8" height="4.8" rx="1" fill="#232323" stroke="#c8c8c8" stroke-width="0.9"/></svg>
<svg style="position:absolute;left:48.5px;top:707.8px;" width="8" height="9.4" viewBox="0 0 8 9.4"><path d="M2 0.4C0.6 2 0.6 3.4 2 4.7C0.6 6 0.6 7.4 2 9M6 0.4C7.4 2 7.4 3.4 6 4.7C7.4 6 7.4 7.4 6 9" fill="none" stroke="#c8c8c8" stroke-width="0.9"/><path d="M2 1.6H6M1.6 3.6H6.4M1.6 5.8H6.4M2 7.8H6" stroke="#c8c8c8" stroke-width="0.7"/></svg>
<svg style="position:absolute;left:62px;top:708px;" width="11" height="9" viewBox="0 0 11 9"><circle cx="4" cy="3.6" r="2.8" fill="#9a9a9a"/><path d="M0.4 8.6C1 6.4 7 6.4 7.6 8.6Z" fill="#9a9a9a"/><path d="M7.6 2.2A1.4 1.4 0 1 1 9 4.2V5.6M9 6.6V7.6" stroke="#c8c8c8" stroke-width="0.9" fill="none"/></svg>
<div class="t" style="left:93px;top:707.3px;font-size:8.6px;line-height:10.6px;color:#9a9a9a;transform:scaleX(0.9384);transform-origin:0 0;">Frame Render Time:</div>
<div class="t" style="left:171px;top:707.3px;font-size:8.6px;line-height:10.6px;color:#3fd6a0;transform:scaleX(0.9130);transform-origin:0 0;">33ms</div>
<div style="position:absolute;left:264.5px;top:706.8px;width:97px;height:11px;background:#262626;box-shadow:0 0 0 0.6px #323232;"></div>
<div class="t" style="left:268.7px;top:707.3px;font-size:8.6px;line-height:10.6px;color:#9a9a9a;transform:scaleX(0.9461);transform-origin:0 0;">Toggle Switches / Modes</div>
<svg style="position:absolute;left:466px;top:709.6px;" width="7" height="4.4" viewBox="0 0 7 4.4"><path d="M0.3 4.2L3.5 0.6L6.7 4.2Z" fill="#c8c8c8"/></svg>
<div style="position:absolute;left:486px;top:712px;width:31px;height:1px;background:#3a3a3a;"></div>
<svg style="position:absolute;left:481px;top:708.6px;" width="7.4" height="7.4" viewBox="0 0 7.4 7.4"><circle cx="3.7" cy="3.7" r="3" fill="#232323" stroke="#c8c8c8" stroke-width="1.1"/></svg>
<svg style="position:absolute;left:525px;top:708px;" width="12.6" height="6.2" viewBox="0 0 12.6 6.2"><path d="M0.2 6L4.2 1.8L6 3.6L8.4 0.4L12.4 6Z" fill="#c8c8c8"/></svg>
<div style="position:absolute;left:462px;top:706.3px;width:80px;height:1px;background:#1a1a1a;"></div>
</body></html>
